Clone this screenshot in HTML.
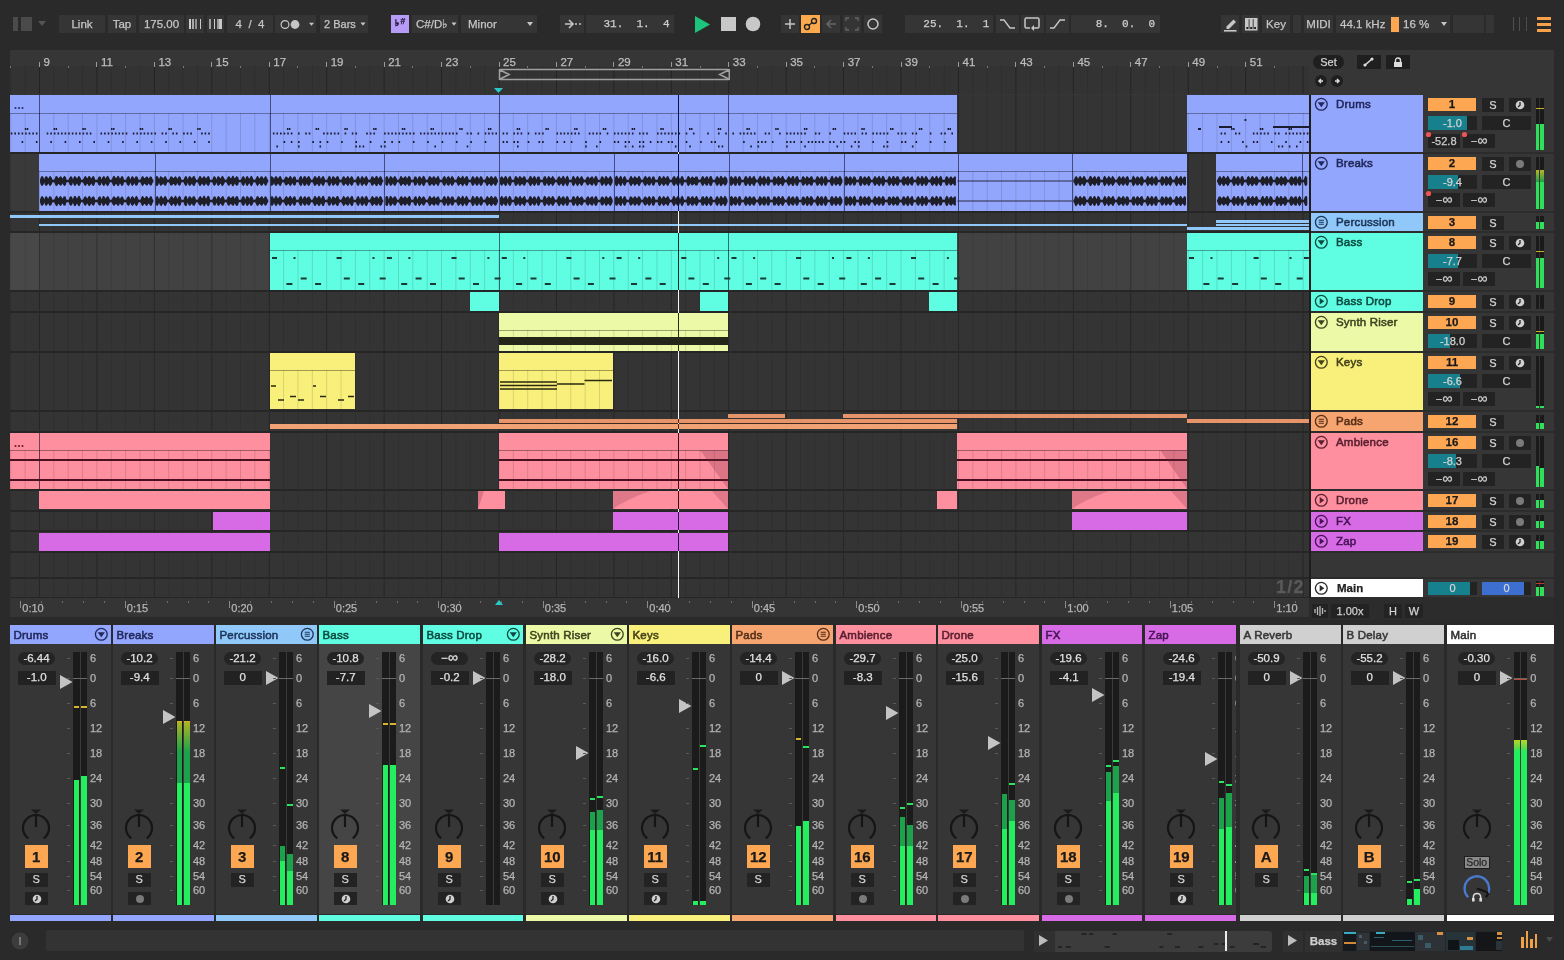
<!DOCTYPE html><html><head><meta charset="utf-8"><style>
html,body{margin:0;padding:0;will-change:transform;width:1564px;height:960px;overflow:hidden;background:#2a2a2a;font-family:"Liberation Sans",sans-serif;}
div,svg{position:absolute;box-sizing:border-box;} div{-webkit-text-stroke:0.25px currentColor} .hn{font-weight:normal;-webkit-text-stroke:0.55px currentColor} .r{position:relative}
</style></head><body>
<div style="left:13.00px;top:17.00px;width:5.00px;height:14.00px;background:#4a4a4a;"></div>
<div style="left:21.00px;top:17.00px;width:11.00px;height:14.00px;background:#4a4a4a;"></div>
<svg style="left:38px;top:21px" width="9" height="6"><path d="M0 0H8L4 5Z" fill="#555"/></svg>
<div style="left:59px;top:15px;width:46px;height:18px;background:#353535;line-height:18px;font-size:11.5px;color:#c6c6c6;text-align:center;white-space:pre">Link</div>
<div style="left:108px;top:15px;width:28px;height:18px;background:#353535;line-height:18px;font-size:11.5px;color:#c6c6c6;text-align:center;white-space:pre">Tap</div>
<div style="left:139px;top:15px;width:45px;height:18px;background:#353535;line-height:18px;font-size:11.5px;color:#c6c6c6;text-align:center;white-space:pre">175.00</div>
<div style="left:186px;top:15px;width:18px;height:18px;background:#353535;line-height:18px;font-size:11.5px;color:#c6c6c6;text-align:center;white-space:pre"></div>
<div style="left:207px;top:15px;width:17px;height:18px;background:#353535;line-height:18px;font-size:11.5px;color:#c6c6c6;text-align:center;white-space:pre"></div>
<div style="left:189.00px;top:19.00px;width:2.00px;height:10.00px;background:#cfcfcf;"></div>
<div style="left:192.00px;top:19.00px;width:1.80px;height:10.00px;background:#a8a8a8;"></div>
<div style="left:195.00px;top:19.00px;width:2.00px;height:10.00px;background:#909090;"></div>
<div style="left:199.70px;top:19.00px;width:1.60px;height:10.00px;background:#c8c8c8;"></div>
<div style="left:209.00px;top:19.00px;width:2.00px;height:10.00px;background:#a0a0a0;"></div>
<div style="left:213.70px;top:19.00px;width:1.40px;height:10.00px;background:#cfcfcf;"></div>
<div style="left:217.00px;top:19.00px;width:1.50px;height:10.00px;background:#9a9a9a;"></div>
<div style="left:219.30px;top:19.00px;width:2.60px;height:10.00px;background:#c8c8c8;"></div>
<div style="left:227px;top:15px;width:46px;height:18px;background:#353535;line-height:18px;font-size:11.5px;color:#c6c6c6;text-align:center;white-space:pre">4  /  4</div>
<div style="left:275px;top:15px;width:41px;height:18px;background:#353535;line-height:18px;font-size:11.5px;color:#c6c6c6;text-align:center;white-space:pre"></div>
<svg style="left:276px;top:18px" width="40" height="13"><circle cx="9" cy="6.5" r="3.9" stroke="#c6c6c6" stroke-width="1.2" fill="none"/><circle cx="19" cy="6.5" r="4.4" fill="#c6c6c6"/><path d="M33 4.8H38L35.5 7.8Z" fill="#c6c6c6"/></svg>
<div style="left:320px;top:15px;width:48px;height:18px;background:#353535;line-height:18px;font-size:11.5px;color:#c6c6c6;text-align:center;white-space:pre"></div>
<div style="left:324px;top:15px;font-size:11px;color:#c6c6c6;line-height:18px;">2 Bars</div>
<svg style="left:359.5px;top:22px" width="7" height="5"><path d="M0.5 0.5H5.5L3 3.8Z" fill="#c6c6c6"/></svg>
<div style="left:391px;top:15px;width:18px;height:18px;background:#b79cf7;line-height:18px;font-size:11.5px;color:#c6c6c6;text-align:center;white-space:pre"></div>
<div style="left:394.5px;top:18px;font-size:9px;line-height:10px;color:#2a2040;font-weight:bold">♭</div><div style="left:400.5px;top:15.5px;font-size:8.5px;line-height:10px;color:#2a2040;font-weight:bold">#</div>
<div style="left:412px;top:15px;width:46px;height:18px;background:#353535;line-height:18px;font-size:11.5px;color:#c6c6c6;text-align:center;white-space:pre"></div>
<div style="left:416px;top:15px;font-size:11.5px;color:#c6c6c6;line-height:18px;">C#/D♭</div>
<svg style="left:450.5px;top:22px" width="7" height="5"><path d="M0.5 0.5H5.5L3 3.8Z" fill="#c6c6c6"/></svg>
<div style="left:461px;top:15px;width:76px;height:18px;background:#353535;line-height:18px;font-size:12px;color:#c6c6c6;text-align:center;white-space:pre"></div>
<div style="left:468px;top:15px;font-size:11.5px;color:#c6c6c6;line-height:18px;">Minor</div>
<svg style="left:527px;top:22px" width="7" height="5"><path d="M0 0H6L3 4Z" fill="#c6c6c6"/></svg>
<div style="left:560px;top:15px;width:24px;height:18px;background:#353535;line-height:18px;font-size:11.5px;color:#c6c6c6;text-align:center;white-space:pre"></div>
<svg style="left:564px;top:18px" width="18" height="12"><path d="M1 6H9M5 2L9 6L5 10" stroke="#c6c6c6" stroke-width="1.6" fill="none"/><path d="M11 6H13M15 6H17" stroke="#c6c6c6" stroke-width="1.3"/></svg>
<div style="left:586px;top:15px;width:88px;height:18px;background:#353535;line-height:18px;font-size:11.5px;color:#c6c6c6;text-align:center;white-space:pre"></div>
<div style="left:603.5px;top:15px;height:18px;line-height:18px;font-family:'Liberation Mono',monospace;font-size:11px;color:#cfcfcf;white-space:pre">31.  1.  4</div>
<svg style="left:695px;top:16px" width="16" height="17"><path d="M0 0L15 8.5L0 17Z" fill="#1dc47b"/></svg>
<div style="left:721.00px;top:17.00px;width:15.00px;height:14.00px;background:#c8c8c8;"></div>
<svg style="left:745px;top:16px" width="16" height="16"><circle cx="8" cy="8" r="7.3" fill="#c8c8c8"/></svg>
<div style="left:781px;top:15px;width:18px;height:18px;background:#353535;line-height:18px;font-size:11.5px;color:#c6c6c6;text-align:center;white-space:pre"></div>
<svg style="left:783px;top:17px" width="14" height="14"><path d="M7 2V12M2 7H12" stroke="#c6c6c6" stroke-width="1.5"/></svg>
<div style="left:801px;top:15px;width:19px;height:18px;background:#fba94c;line-height:18px;font-size:11.5px;color:#c6c6c6;text-align:center;white-space:pre"></div>
<svg style="left:803px;top:17px" width="15" height="14"><circle cx="4" cy="10" r="2.5" stroke="#222" stroke-width="1.4" fill="none"/><circle cx="11" cy="4" r="2.5" stroke="#222" stroke-width="1.4" fill="none"/><path d="M5.8 8.2L9.2 5.8" stroke="#222" stroke-width="1.4"/></svg>
<div style="left:822px;top:15px;width:18px;height:18px;background:#353535;line-height:18px;font-size:11.5px;color:#c6c6c6;text-align:center;white-space:pre"></div>
<svg style="left:824px;top:18px" width="14" height="12"><path d="M12 6H3M7 2L3 6L7 10" stroke="#666" stroke-width="1.6" fill="none"/></svg>
<div style="left:843px;top:15px;width:18px;height:18px;background:#353535;line-height:18px;font-size:11.5px;color:#c6c6c6;text-align:center;white-space:pre"></div>
<svg style="left:845px;top:17px" width="14" height="14"><path d="M1 4V1H4M10 1H13V4M13 10V13H10M4 13H1V10" stroke="#666" stroke-width="1.3" fill="none"/></svg>
<div style="left:864px;top:15px;width:18px;height:18px;background:#353535;line-height:18px;font-size:11.5px;color:#c6c6c6;text-align:center;white-space:pre"></div>
<svg style="left:866px;top:17px" width="14" height="14"><circle cx="7" cy="7" r="5" stroke="#c6c6c6" stroke-width="1.5" fill="none"/></svg>
<div style="left:905px;top:15px;width:88px;height:18px;background:#353535;line-height:18px;font-size:11.5px;color:#c6c6c6;text-align:center;white-space:pre"></div>
<div style="left:923.3px;top:15px;height:18px;line-height:18px;font-family:'Liberation Mono',monospace;font-size:11px;color:#cfcfcf;white-space:pre">25.  1.  1</div>
<div style="left:996px;top:15px;width:23px;height:18px;background:#353535;line-height:18px;font-size:11.5px;color:#c6c6c6;text-align:center;white-space:pre"></div>
<svg style="left:999px;top:18px" width="17" height="12"><path d="M1 2H5L11 10H16" stroke="#c6c6c6" stroke-width="1.4" fill="none"/></svg>
<div style="left:1021px;top:15px;width:23px;height:18px;background:#353535;line-height:18px;font-size:11.5px;color:#c6c6c6;text-align:center;white-space:pre"></div>
<svg style="left:1024px;top:17px" width="17" height="15"><path d="M6 11H2.5Q1 11 1 9.5V2.5Q1 1 2.5 1H13.5Q15 1 15 2.5V9.5Q15 11 13.5 11H9" stroke="#c6c6c6" stroke-width="1.5" fill="none"/><path d="M10 8L7 11L10 14Z" fill="#c6c6c6"/></svg>
<div style="left:1046px;top:15px;width:23px;height:18px;background:#353535;line-height:18px;font-size:11.5px;color:#c6c6c6;text-align:center;white-space:pre"></div>
<svg style="left:1049px;top:18px" width="17" height="12"><path d="M1 10H5L11 2H16" stroke="#c6c6c6" stroke-width="1.4" fill="none"/></svg>
<div style="left:1071px;top:15px;width:89px;height:18px;background:#353535;line-height:18px;font-size:11.5px;color:#c6c6c6;text-align:center;white-space:pre"></div>
<div style="left:1095.7px;top:15px;height:18px;line-height:18px;font-family:'Liberation Mono',monospace;font-size:11px;color:#cfcfcf;white-space:pre">8.  0.  0</div>
<div style="left:1221px;top:15px;width:18px;height:18px;background:#353535;line-height:18px;font-size:11.5px;color:#c6c6c6;text-align:center;white-space:pre"></div>
<svg style="left:1222px;top:17px" width="17" height="15"><path d="M4.5 9.5L11.5 2.5L14 5L7 12H4.5Z" fill="#c6c6c6"/><path d="M2 13.8H14.5" stroke="#c6c6c6" stroke-width="1.6"/></svg>
<div style="left:1242px;top:15px;width:17px;height:18px;background:#353535;line-height:18px;font-size:11.5px;color:#c6c6c6;text-align:center;white-space:pre"></div>
<svg style="left:1244.5px;top:18px" width="13" height="13"><rect x="0" y="0" width="12.3" height="12.3" fill="#c8c8c8"/><path d="M4.1 1V12M8.2 1V12" stroke="#2e2e2e" stroke-width="0.9"/><rect x="1.2" y="9" width="2" height="2.5" fill="#222"/><rect x="5.2" y="9" width="2" height="2.5" fill="#222"/><rect x="9.2" y="9" width="2" height="2.5" fill="#222"/><rect x="0.6" y="0.6" width="11.1" height="11.1" fill="none" stroke="#c8c8c8" stroke-width="1.2"/></svg>
<div style="left:1262px;top:15px;width:28px;height:18px;background:#353535;line-height:18px;font-size:11.5px;color:#c6c6c6;text-align:center;white-space:pre">Key</div>
<div style="left:1293px;top:15px;width:8px;height:18px;background:#353535;line-height:18px;font-size:11.5px;color:#c6c6c6;text-align:center;white-space:pre"></div>
<div style="left:1304px;top:15px;width:29px;height:18px;background:#353535;line-height:18px;font-size:11.5px;color:#c6c6c6;text-align:center;white-space:pre">MIDI</div>
<div style="left:1336px;top:15px;width:114px;height:18px;background:#353535;line-height:18px;font-size:11.5px;color:#c6c6c6;text-align:center;white-space:pre"></div>
<div style="left:1340px;top:15px;font-size:11.5px;color:#c6c6c6;line-height:18px;">44.1 kHz</div>
<div style="left:1391.00px;top:17.00px;width:8.00px;height:15.00px;background:#fda752;"></div>
<div style="left:1403px;top:15px;font-size:11.5px;color:#c6c6c6;line-height:18px;">16 %</div>
<svg style="left:1441px;top:22px" width="7" height="5"><path d="M0 0H6L3 4Z" fill="#c6c6c6"/></svg>
<div style="left:1453px;top:15px;width:31px;height:18px;background:#353535;line-height:18px;font-size:11.5px;color:#c6c6c6;text-align:center;white-space:pre"></div>
<div style="left:1486px;top:15px;width:8px;height:18px;background:#353535;line-height:18px;font-size:11.5px;color:#c6c6c6;text-align:center;white-space:pre"></div>
<div style="left:1513.00px;top:17.00px;width:1.30px;height:14.00px;background:#4e4e4e;"></div>
<div style="left:1519.00px;top:17.00px;width:1.30px;height:14.00px;background:#4e4e4e;"></div>
<div style="left:1526.00px;top:17.00px;width:1.30px;height:14.00px;background:#4e4e4e;"></div>
<div style="left:1537.00px;top:17.00px;width:14.00px;height:2.80px;background:#f6a24c;"></div>
<div style="left:1537.00px;top:23.00px;width:14.00px;height:2.80px;background:#f6a24c;"></div>
<div style="left:1537.00px;top:29.00px;width:14.00px;height:2.80px;background:#f6a24c;"></div>
<div style="left:10.00px;top:50.00px;width:1544.00px;height:45.00px;background:#363636;"></div>
<div style="left:10.00px;top:66.00px;width:1299.00px;height:28.00px;background:#333333;"></div>
<div style="left:10px;top:66px;width:1299px;height:28px;background-color:#333333;background-image:linear-gradient(to right,rgba(0,0,0,0.22) 1px,transparent 1px),linear-gradient(to right,rgba(0,0,0,0.12) 1px,transparent 1px);background-size:57.440px 100%,14.360px 100%;background-position:29.00px 0,0.28px 0"></div>
<div style="left:39.00px;top:62.00px;width:1.00px;height:5.00px;background:#9a9a9a;"></div>
<div style="left:43.5px;top:56px;font-size:11.5px;color:#bdbdbd;line-height:13px;">9</div>
<div style="left:96.44px;top:62.00px;width:1.00px;height:5.00px;background:#9a9a9a;"></div>
<div style="left:100.94px;top:56px;font-size:11.5px;color:#bdbdbd;line-height:13px;">11</div>
<div style="left:153.88px;top:62.00px;width:1.00px;height:5.00px;background:#9a9a9a;"></div>
<div style="left:158.38px;top:56px;font-size:11.5px;color:#bdbdbd;line-height:13px;">13</div>
<div style="left:211.32px;top:62.00px;width:1.00px;height:5.00px;background:#9a9a9a;"></div>
<div style="left:215.82px;top:56px;font-size:11.5px;color:#bdbdbd;line-height:13px;">15</div>
<div style="left:268.76px;top:62.00px;width:1.00px;height:5.00px;background:#9a9a9a;"></div>
<div style="left:273.26px;top:56px;font-size:11.5px;color:#bdbdbd;line-height:13px;">17</div>
<div style="left:326.20px;top:62.00px;width:1.00px;height:5.00px;background:#9a9a9a;"></div>
<div style="left:330.7px;top:56px;font-size:11.5px;color:#bdbdbd;line-height:13px;">19</div>
<div style="left:383.64px;top:62.00px;width:1.00px;height:5.00px;background:#9a9a9a;"></div>
<div style="left:388.14px;top:56px;font-size:11.5px;color:#bdbdbd;line-height:13px;">21</div>
<div style="left:441.08px;top:62.00px;width:1.00px;height:5.00px;background:#9a9a9a;"></div>
<div style="left:445.58px;top:56px;font-size:11.5px;color:#bdbdbd;line-height:13px;">23</div>
<div style="left:498.52px;top:62.00px;width:1.00px;height:5.00px;background:#9a9a9a;"></div>
<div style="left:503.02px;top:56px;font-size:11.5px;color:#bdbdbd;line-height:13px;">25</div>
<div style="left:555.96px;top:62.00px;width:1.00px;height:5.00px;background:#9a9a9a;"></div>
<div style="left:560.46px;top:56px;font-size:11.5px;color:#bdbdbd;line-height:13px;">27</div>
<div style="left:613.40px;top:62.00px;width:1.00px;height:5.00px;background:#9a9a9a;"></div>
<div style="left:617.9px;top:56px;font-size:11.5px;color:#bdbdbd;line-height:13px;">29</div>
<div style="left:670.84px;top:62.00px;width:1.00px;height:5.00px;background:#9a9a9a;"></div>
<div style="left:675.3399999999999px;top:56px;font-size:11.5px;color:#bdbdbd;line-height:13px;">31</div>
<div style="left:728.28px;top:62.00px;width:1.00px;height:5.00px;background:#9a9a9a;"></div>
<div style="left:732.78px;top:56px;font-size:11.5px;color:#bdbdbd;line-height:13px;">33</div>
<div style="left:785.72px;top:62.00px;width:1.00px;height:5.00px;background:#9a9a9a;"></div>
<div style="left:790.22px;top:56px;font-size:11.5px;color:#bdbdbd;line-height:13px;">35</div>
<div style="left:843.16px;top:62.00px;width:1.00px;height:5.00px;background:#9a9a9a;"></div>
<div style="left:847.66px;top:56px;font-size:11.5px;color:#bdbdbd;line-height:13px;">37</div>
<div style="left:900.60px;top:62.00px;width:1.00px;height:5.00px;background:#9a9a9a;"></div>
<div style="left:905.0999999999999px;top:56px;font-size:11.5px;color:#bdbdbd;line-height:13px;">39</div>
<div style="left:958.04px;top:62.00px;width:1.00px;height:5.00px;background:#9a9a9a;"></div>
<div style="left:962.54px;top:56px;font-size:11.5px;color:#bdbdbd;line-height:13px;">41</div>
<div style="left:1015.48px;top:62.00px;width:1.00px;height:5.00px;background:#9a9a9a;"></div>
<div style="left:1019.98px;top:56px;font-size:11.5px;color:#bdbdbd;line-height:13px;">43</div>
<div style="left:1072.92px;top:62.00px;width:1.00px;height:5.00px;background:#9a9a9a;"></div>
<div style="left:1077.42px;top:56px;font-size:11.5px;color:#bdbdbd;line-height:13px;">45</div>
<div style="left:1130.36px;top:62.00px;width:1.00px;height:5.00px;background:#9a9a9a;"></div>
<div style="left:1134.86px;top:56px;font-size:11.5px;color:#bdbdbd;line-height:13px;">47</div>
<div style="left:1187.80px;top:62.00px;width:1.00px;height:5.00px;background:#9a9a9a;"></div>
<div style="left:1192.3px;top:56px;font-size:11.5px;color:#bdbdbd;line-height:13px;">49</div>
<div style="left:1245.24px;top:62.00px;width:1.00px;height:5.00px;background:#9a9a9a;"></div>
<div style="left:1249.74px;top:56px;font-size:11.5px;color:#bdbdbd;line-height:13px;">51</div>
<div style="left:10.28px;top:66.00px;width:1.00px;height:1.50px;background:#777;"></div>
<div style="left:67.72px;top:66.00px;width:1.00px;height:1.50px;background:#777;"></div>
<div style="left:125.16px;top:66.00px;width:1.00px;height:1.50px;background:#777;"></div>
<div style="left:182.60px;top:66.00px;width:1.00px;height:1.50px;background:#777;"></div>
<div style="left:240.04px;top:66.00px;width:1.00px;height:1.50px;background:#777;"></div>
<div style="left:297.48px;top:66.00px;width:1.00px;height:1.50px;background:#777;"></div>
<div style="left:354.92px;top:66.00px;width:1.00px;height:1.50px;background:#777;"></div>
<div style="left:412.36px;top:66.00px;width:1.00px;height:1.50px;background:#777;"></div>
<div style="left:469.80px;top:66.00px;width:1.00px;height:1.50px;background:#777;"></div>
<div style="left:527.24px;top:66.00px;width:1.00px;height:1.50px;background:#777;"></div>
<div style="left:584.68px;top:66.00px;width:1.00px;height:1.50px;background:#777;"></div>
<div style="left:642.12px;top:66.00px;width:1.00px;height:1.50px;background:#777;"></div>
<div style="left:699.56px;top:66.00px;width:1.00px;height:1.50px;background:#777;"></div>
<div style="left:757.00px;top:66.00px;width:1.00px;height:1.50px;background:#777;"></div>
<div style="left:814.44px;top:66.00px;width:1.00px;height:1.50px;background:#777;"></div>
<div style="left:871.88px;top:66.00px;width:1.00px;height:1.50px;background:#777;"></div>
<div style="left:929.32px;top:66.00px;width:1.00px;height:1.50px;background:#777;"></div>
<div style="left:986.76px;top:66.00px;width:1.00px;height:1.50px;background:#777;"></div>
<div style="left:1044.20px;top:66.00px;width:1.00px;height:1.50px;background:#777;"></div>
<div style="left:1101.64px;top:66.00px;width:1.00px;height:1.50px;background:#777;"></div>
<div style="left:1159.08px;top:66.00px;width:1.00px;height:1.50px;background:#777;"></div>
<div style="left:1216.52px;top:66.00px;width:1.00px;height:1.50px;background:#777;"></div>
<div style="left:1273.96px;top:66.00px;width:1.00px;height:1.50px;background:#777;"></div>
<svg style="left:497.52px;top:67px" width="232.76" height="15"><path d="M1.5 2.5H231.26M1.5 12.5H231.26M1.5 2V13M231.26 2V13M2 3L11 7.5L2 12M230.76 3L221.76 7.5L230.76 12" stroke="#a0a0a0" stroke-width="1.6" fill="none"/></svg>
<svg style="left:494.02px;top:88px" width="9" height="6"><path d="M0 0H9L4.5 5Z" fill="#2bc8c8"/></svg>
<div style="left:1313px;top:55px;width:31px;height:14px;border-radius:7px;background:#1f1f1f;color:#d0d0d0;font-size:11px;line-height:14px;text-align:center">Set</div>
<div style="left:1357.00px;top:55.00px;width:24.00px;height:14.00px;background:#1f1f1f;"></div>
<svg style="left:1363px;top:57px" width="11" height="10"><path d="M2 8L9 2" stroke="#ddd" stroke-width="1.6"/><circle cx="2" cy="8" r="1.6" fill="#ddd"/><circle cx="9" cy="2" r="1.6" fill="#ddd"/></svg>
<div style="left:1386.00px;top:55.00px;width:24.00px;height:14.00px;background:#1f1f1f;"></div>
<svg style="left:1393px;top:57px" width="10" height="10"><path d="M2.5 5V3.5Q2.5 1 5 1Q7.5 1 7.5 3.5V5" stroke="#ddd" stroke-width="1.4" fill="none"/><rect x="1" y="5" width="8" height="5" fill="#ddd"/></svg>
<svg style="left:1314.5px;top:75px" width="12" height="12"><circle cx="6" cy="6" r="6" fill="#1f1f1f"/><path d="M8 6H4M6 4L4 6L6 8" stroke="#ddd" stroke-width="1.5" fill="none"/></svg>
<svg style="left:1330.5px;top:75px" width="12" height="12"><circle cx="6" cy="6" r="6" fill="#1f1f1f"/><path d="M4 6H8M6 4L8 6L6 8" stroke="#ddd" stroke-width="1.5" fill="none"/></svg>
<div style="left:10.00px;top:95.00px;width:1299.00px;height:503.00px;background:#262626;"></div>
<div style="left:10px;top:95px;width:1299px;height:57px;background-color:#343434;background-image:linear-gradient(to right,rgba(0,0,0,0.20) 1px,transparent 1px),linear-gradient(to right,rgba(0,0,0,0.10) 1px,transparent 1px);background-size:57.440px 100%,14.360px 100%;background-position:29.00px 0,0.28px 0"></div>
<div style="left:10px;top:154px;width:1299px;height:57px;background-color:#343434;background-image:linear-gradient(to right,rgba(0,0,0,0.20) 1px,transparent 1px),linear-gradient(to right,rgba(0,0,0,0.10) 1px,transparent 1px);background-size:57.440px 100%,14.360px 100%;background-position:29.00px 0,0.28px 0"></div>
<div style="left:10.00px;top:154.00px;width:29.00px;height:57.00px;background:rgba(255,255,255,0.03);"></div>
<div style="left:10px;top:213px;width:1299px;height:18px;background-color:#343434;background-image:linear-gradient(to right,rgba(0,0,0,0.20) 1px,transparent 1px),linear-gradient(to right,rgba(0,0,0,0.10) 1px,transparent 1px);background-size:57.440px 100%,14.360px 100%;background-position:29.00px 0,0.28px 0"></div>
<div style="left:10px;top:233px;width:1299px;height:57px;background-color:#424242;background-image:linear-gradient(to right,rgba(0,0,0,0.20) 1px,transparent 1px),linear-gradient(to right,rgba(0,0,0,0.10) 1px,transparent 1px);background-size:57.440px 100%,14.360px 100%;background-position:29.00px 0,0.28px 0"></div>
<div style="left:10.00px;top:233.00px;width:29.00px;height:57.00px;background:rgba(255,255,255,0.035);"></div>
<div style="left:10px;top:292px;width:1299px;height:19px;background-color:#343434;background-image:linear-gradient(to right,rgba(0,0,0,0.20) 1px,transparent 1px),linear-gradient(to right,rgba(0,0,0,0.10) 1px,transparent 1px);background-size:57.440px 100%,14.360px 100%;background-position:29.00px 0,0.28px 0"></div>
<div style="left:10px;top:313px;width:1299px;height:38px;background-color:#343434;background-image:linear-gradient(to right,rgba(0,0,0,0.20) 1px,transparent 1px),linear-gradient(to right,rgba(0,0,0,0.10) 1px,transparent 1px);background-size:57.440px 100%,14.360px 100%;background-position:29.00px 0,0.28px 0"></div>
<div style="left:10px;top:353px;width:1299px;height:57px;background-color:#343434;background-image:linear-gradient(to right,rgba(0,0,0,0.20) 1px,transparent 1px),linear-gradient(to right,rgba(0,0,0,0.10) 1px,transparent 1px);background-size:57.440px 100%,14.360px 100%;background-position:29.00px 0,0.28px 0"></div>
<div style="left:10px;top:412px;width:1299px;height:19px;background-color:#343434;background-image:linear-gradient(to right,rgba(0,0,0,0.20) 1px,transparent 1px),linear-gradient(to right,rgba(0,0,0,0.10) 1px,transparent 1px);background-size:57.440px 100%,14.360px 100%;background-position:29.00px 0,0.28px 0"></div>
<div style="left:10px;top:433px;width:1299px;height:56px;background-color:#343434;background-image:linear-gradient(to right,rgba(0,0,0,0.20) 1px,transparent 1px),linear-gradient(to right,rgba(0,0,0,0.10) 1px,transparent 1px);background-size:57.440px 100%,14.360px 100%;background-position:29.00px 0,0.28px 0"></div>
<div style="left:10px;top:491px;width:1299px;height:19px;background-color:#343434;background-image:linear-gradient(to right,rgba(0,0,0,0.20) 1px,transparent 1px),linear-gradient(to right,rgba(0,0,0,0.10) 1px,transparent 1px);background-size:57.440px 100%,14.360px 100%;background-position:29.00px 0,0.28px 0"></div>
<div style="left:10px;top:512px;width:1299px;height:18px;background-color:#343434;background-image:linear-gradient(to right,rgba(0,0,0,0.20) 1px,transparent 1px),linear-gradient(to right,rgba(0,0,0,0.10) 1px,transparent 1px);background-size:57.440px 100%,14.360px 100%;background-position:29.00px 0,0.28px 0"></div>
<div style="left:10px;top:532px;width:1299px;height:19px;background-color:#343434;background-image:linear-gradient(to right,rgba(0,0,0,0.20) 1px,transparent 1px),linear-gradient(to right,rgba(0,0,0,0.10) 1px,transparent 1px);background-size:57.440px 100%,14.360px 100%;background-position:29.00px 0,0.28px 0"></div>
<div style="left:10px;top:553px;width:1299px;height:24px;background-color:#343434;background-image:linear-gradient(to right,rgba(0,0,0,0.20) 1px,transparent 1px),linear-gradient(to right,rgba(0,0,0,0.10) 1px,transparent 1px);background-size:57.440px 100%,14.360px 100%;background-position:29.00px 0,0.28px 0"></div>
<div style="left:10px;top:579px;width:1299px;height:18px;background-color:#343434;background-image:linear-gradient(to right,rgba(0,0,0,0.20) 1px,transparent 1px),linear-gradient(to right,rgba(0,0,0,0.10) 1px,transparent 1px);background-size:57.440px 100%,14.360px 100%;background-position:29.00px 0,0.28px 0"></div>
<div style="left:10.00px;top:95.00px;width:947.00px;height:57.00px;background:#93a6fd;"></div>
<div style="left:10.00px;top:113px;width:947.00px;height:39px;background-image:linear-gradient(to right,rgba(0,0,0,0.13) 1px,transparent 1px);background-size:14.360px 100%;background-position:0.28px 0"></div>
<div style="left:10.00px;top:113.00px;width:947.00px;height:1.00px;background:rgba(0,0,0,0.35);"></div>
<div style="left:39.00px;top:95.00px;width:1.00px;height:57.00px;background:rgba(0,0,30,0.55);"></div>
<div style="left:270.00px;top:95.00px;width:1.00px;height:57.00px;background:rgba(0,0,30,0.55);"></div>
<div style="left:499.00px;top:95.00px;width:1.00px;height:57.00px;background:rgba(0,0,30,0.55);"></div>
<div style="left:728.00px;top:95.00px;width:1.00px;height:57.00px;background:rgba(0,0,30,0.55);"></div>
<svg style="left:14px;top:106px" width="12" height="4"><circle cx="1.5" cy="2" r="1.1" fill="#2a3070"/><circle cx="5" cy="2" r="1.1" fill="#2a3070"/><circle cx="8.5" cy="2" r="1.1" fill="#2a3070"/></svg>
<div style="left:1187.00px;top:95.00px;width:122.00px;height:57.00px;background:#93a6fd;"></div>
<div style="left:1187.00px;top:113px;width:122.00px;height:39px;background-image:linear-gradient(to right,rgba(0,0,0,0.13) 1px,transparent 1px);background-size:14.360px 100%;background-position:0.80px 0"></div>
<div style="left:1187.00px;top:113.00px;width:122.00px;height:1.00px;background:rgba(0,0,0,0.35);"></div>
<svg style="left:0;top:0;" width="1564" height="960"><path d="M10.8 133.5h1.6 M14.4 133.5h1.6 M18.0 133.5h1.6 M21.6 133.5h1.6 M21.6 142h1.6 M25.1 133.5h1.6 M24.8 129h1.5M26.8 129h1.5 M28.7 133.5h1.6 M32.3 133.5h1.6 M35.9 133.5h1.6 M35.9 142h1.6 M46.7 133.5h1.6 M50.3 133.5h1.6 M50.3 142h1.6 M53.9 133.5h1.6 M53.6 129h1.5M55.6 129h1.5 M57.5 133.5h1.6 M61.0 133.5h1.6 M64.6 133.5h1.6 M64.6 142h1.6 M68.2 133.5h1.6 M71.8 133.5h1.6 M75.4 133.5h1.6 M79.0 133.5h1.6 M79.0 142h1.6 M82.6 133.5h1.6 M82.3 129h1.5M84.3 129h1.5 M86.2 133.5h1.6 M89.8 133.5h1.6 M93.4 142h1.6 M100.5 133.5h1.6 M104.1 133.5h1.6 M107.7 133.5h1.6 M107.7 142h1.6 M111.3 133.5h1.6 M111.0 129h1.5M113.0 129h1.5 M114.9 133.5h1.6 M118.5 133.5h1.6 M122.1 133.5h1.6 M122.1 142h1.6 M125.7 133.5h1.6 M132.8 133.5h1.6 M136.4 133.5h1.6 M136.4 142h1.6 M140.0 133.5h1.6 M139.7 129h1.5M141.7 129h1.5 M143.6 133.5h1.6 M147.2 133.5h1.6 M150.8 133.5h1.6 M150.8 142h1.6 M154.4 133.5h1.6 M161.6 133.5h1.6 M165.2 133.5h1.6 M165.2 142h1.6 M168.4 129h1.5M170.4 129h1.5 M172.3 133.5h1.6 M175.9 133.5h1.6 M179.5 142h1.6 M183.1 133.5h1.6 M186.7 133.5h1.6 M190.3 133.5h1.6 M193.9 142h1.6 M197.2 129h1.5M199.2 129h1.5 M201.1 133.5h1.6 M204.6 133.5h1.6 M208.2 133.5h1.6 M208.2 142h1.6 M272.9 133.5h1.6 M276.4 133.5h1.6 M276.4 146.5h1.6 M280.0 133.5h1.6 M283.6 133.5h1.6 M283.6 142h1.6 M287.2 133.5h1.6 M286.9 129h1.5M288.9 129h1.5 M290.8 133.5h1.6 M290.8 142h1.6 M298.0 133.5h1.6 M298.0 142h1.6 M298.0 146.5h1.6 M305.2 133.5h1.6 M308.7 133.5h1.6 M312.3 142h1.6 M315.6 129h1.5M317.6 129h1.5 M319.5 142h1.6 M319.5 146.5h1.6 M323.1 133.5h1.6 M326.7 133.5h1.6 M326.7 142h1.6 M330.3 133.5h1.6 M333.9 133.5h1.6 M337.5 133.5h1.6 M341.1 142h1.6 M344.6 133.5h1.6 M344.3 129h1.5M346.3 129h1.5 M351.8 133.5h1.6 M355.4 133.5h1.6 M355.4 142h1.6 M355.4 146.5h1.6 M359.0 146.5h1.6 M362.6 146.5h1.6 M366.2 133.5h1.6 M369.8 133.5h1.6 M369.8 142h1.6 M373.4 133.5h1.6 M373.1 129h1.5M375.1 129h1.5 M380.5 146.5h1.6 M384.1 133.5h1.6 M384.1 142h1.6 M384.1 146.5h1.6 M387.7 133.5h1.6 M391.3 133.5h1.6 M391.3 142h1.6 M394.9 133.5h1.6 M398.5 133.5h1.6 M398.5 142h1.6 M402.1 133.5h1.6 M401.8 129h1.5M403.8 129h1.5 M405.7 133.5h1.6 M409.3 133.5h1.6 M412.9 133.5h1.6 M412.9 142h1.6 M420.0 133.5h1.6 M423.6 133.5h1.6 M427.2 133.5h1.6 M427.2 142h1.6 M430.8 133.5h1.6 M430.5 129h1.5M432.5 129h1.5 M434.4 133.5h1.6 M434.4 146.5h1.6 M438.0 133.5h1.6 M441.6 133.5h1.6 M441.6 142h1.6 M445.2 133.5h1.6 M448.8 133.5h1.6 M452.3 133.5h1.6 M455.9 133.5h1.6 M455.9 142h1.6 M459.2 129h1.5M461.2 129h1.5 M466.7 133.5h1.6 M466.7 146.5h1.6 M470.3 133.5h1.6 M470.3 142h1.6 M477.5 133.5h1.6 M484.7 133.5h1.6 M484.7 142h1.6 M488.2 133.5h1.6 M487.9 129h1.5M489.9 129h1.5 M491.8 133.5h1.6 M495.4 133.5h1.6 M502.6 133.5h1.6 M502.6 142h1.6 M506.2 133.5h1.6 M506.2 142h1.6 M513.4 133.5h1.6 M513.4 142h1.6 M517.0 133.5h1.6 M516.7 129h1.5M518.7 129h1.5 M517.0 142h1.6 M517.0 146.5h1.6 M520.6 133.5h1.6 M527.7 133.5h1.6 M527.7 142h1.6 M534.9 133.5h1.6 M538.5 133.5h1.6 M538.5 142h1.6 M542.1 133.5h1.6 M542.1 142h1.6 M545.4 129h1.5M547.4 129h1.5 M556.5 133.5h1.6 M556.5 142h1.6 M560.1 133.5h1.6 M563.6 133.5h1.6 M563.6 142h1.6 M567.2 133.5h1.6 M570.8 133.5h1.6 M570.8 142h1.6 M574.4 133.5h1.6 M574.1 129h1.5M576.1 129h1.5 M578.0 133.5h1.6 M585.2 142h1.6 M585.2 146.5h1.6 M588.8 133.5h1.6 M592.4 133.5h1.6 M596.0 133.5h1.6 M596.0 146.5h1.6 M599.5 133.5h1.6 M599.5 142h1.6 M602.8 129h1.5M604.8 129h1.5 M606.7 133.5h1.6 M613.9 133.5h1.6 M613.9 142h1.6 M617.5 133.5h1.6 M617.5 142h1.6 M621.1 133.5h1.6 M624.7 133.5h1.6 M624.7 142h1.6 M624.7 146.5h1.6 M628.3 133.5h1.6 M628.3 142h1.6 M631.9 133.5h1.6 M631.6 129h1.5M633.6 129h1.5 M631.9 146.5h1.6 M639.0 133.5h1.6 M639.0 142h1.6 M639.0 146.5h1.6 M642.6 133.5h1.6 M642.6 142h1.6 M642.6 146.5h1.6 M646.2 133.5h1.6 M649.8 142h1.6 M657.0 133.5h1.6 M657.0 142h1.6 M660.6 133.5h1.6 M660.3 129h1.5M662.3 129h1.5 M660.6 142h1.6 M664.2 133.5h1.6 M667.8 133.5h1.6 M667.8 142h1.6 M671.3 133.5h1.6 M671.3 142h1.6 M674.9 133.5h1.6 M674.9 146.5h1.6 M678.5 133.5h1.6 M685.7 133.5h1.6 M685.7 142h1.6 M689.0 129h1.5M691.0 129h1.5 M689.3 146.5h1.6 M692.9 133.5h1.6 M700.1 142h1.6 M707.2 133.5h1.6 M710.8 142h1.6 M714.4 142h1.6 M718.0 133.5h1.6 M717.7 129h1.5M719.7 129h1.5 M718.0 146.5h1.6 M721.6 146.5h1.6 M725.2 133.5h1.6 M732.4 133.5h1.6 M739.6 133.5h1.6 M743.1 133.5h1.6 M743.1 142h1.6 M746.7 133.5h1.6 M746.4 129h1.5M748.4 129h1.5 M750.3 133.5h1.6 M750.3 146.5h1.6 M753.9 133.5h1.6 M757.5 142h1.6 M757.5 146.5h1.6 M761.1 142h1.6 M764.7 133.5h1.6 M764.7 142h1.6 M768.3 133.5h1.6 M771.9 142h1.6 M775.2 129h1.5M777.2 129h1.5 M779.0 133.5h1.6 M786.2 133.5h1.6 M786.2 142h1.6 M786.2 146.5h1.6 M789.8 133.5h1.6 M789.8 142h1.6 M793.4 133.5h1.6 M793.4 142h1.6 M797.0 133.5h1.6 M800.6 133.5h1.6 M800.6 142h1.6 M804.2 133.5h1.6 M803.9 129h1.5M805.9 129h1.5 M804.2 146.5h1.6 M807.8 142h1.6 M811.4 142h1.6 M814.9 133.5h1.6 M814.9 142h1.6 M818.5 133.5h1.6 M818.5 142h1.6 M822.1 142h1.6 M829.3 133.5h1.6 M829.3 142h1.6 M832.6 129h1.5M834.6 129h1.5 M832.9 142h1.6 M836.5 146.5h1.6 M840.1 142h1.6 M843.7 133.5h1.6 M843.7 142h1.6 M847.3 133.5h1.6 M850.8 133.5h1.6 M850.8 146.5h1.6 M854.4 133.5h1.6 M854.4 142h1.6 M858.0 142h1.6 M858.0 146.5h1.6 M861.6 133.5h1.6 M861.3 129h1.5M863.3 129h1.5 M865.2 133.5h1.6 M872.4 133.5h1.6 M872.4 142h1.6 M876.0 133.5h1.6 M879.6 133.5h1.6 M883.2 133.5h1.6 M883.2 146.5h1.6 M886.7 133.5h1.6 M886.7 142h1.6 M886.7 146.5h1.6 M890.0 129h1.5M892.0 129h1.5 M897.5 133.5h1.6 M901.1 133.5h1.6 M901.1 142h1.6 M904.7 133.5h1.6 M904.7 142h1.6 M911.9 133.5h1.6 M911.9 146.5h1.6 M915.5 133.5h1.6 M915.5 142h1.6 M918.8 129h1.5M920.8 129h1.5 M929.8 133.5h1.6 M929.8 142h1.6 M940.6 133.5h1.6 M944.2 133.5h1.6 M944.2 142h1.6 M947.5 129h1.5M949.5 129h1.5 M951.4 133.5h1.6 M1220.6 133.5h1.6 M1220.6 142h1.6 M1224.2 133.5h1.6 M1227.8 142h1.6 M1231.1 129h1.5M1233.1 129h1.5 M1235.0 133.5h1.6 M1238.6 133.5h1.6 M1242.1 142h1.6 M1245.7 146.5h1.6 M1252.9 133.5h1.6 M1252.9 142h1.6 M1256.5 133.5h1.6 M1256.5 142h1.6 M1260.1 133.5h1.6 M1259.8 129h1.5M1261.8 129h1.5 M1263.7 133.5h1.6 M1267.3 133.5h1.6 M1270.9 142h1.6 M1274.5 133.5h1.6 M1278.0 133.5h1.6 M1278.0 146.5h1.6 M1281.6 146.5h1.6 M1285.2 133.5h1.6 M1285.2 142h1.6 M1288.8 133.5h1.6 M1288.5 129h1.5M1290.5 129h1.5 M1288.8 146.5h1.6 M1292.4 133.5h1.6 M1296.0 133.5h1.6 M1296.0 146.5h1.6 M1299.6 133.5h1.6 M1299.6 142h1.6 M1303.2 133.5h1.6 M1306.8 133.5h1.6 M1306.8 142h1.6 M1219 127h13 M1273 127h36 M1244.5 120h1.8 M1198 129h3" stroke="#1a1c30" stroke-width="1.9" fill="none"/></svg>
<div style="left:39.00px;top:154.00px;width:1148.20px;height:57.00px;background:#93a6fd;"></div>
<div style="left:39.00px;top:171px;width:1148.20px;height:40px;background-image:linear-gradient(to right,rgba(0,0,0,0.13) 1px,transparent 1px);background-size:14.360px 100%;background-position:0.00px 0"></div>
<div style="left:39.00px;top:171.00px;width:1148.20px;height:1.00px;background:rgba(0,0,0,0.35);"></div>
<div style="left:154.60px;top:154.00px;width:1.00px;height:57.00px;background:rgba(0,0,30,0.55);"></div>
<div style="left:269.50px;top:154.00px;width:1.00px;height:57.00px;background:rgba(0,0,30,0.55);"></div>
<div style="left:384.30px;top:154.00px;width:1.00px;height:57.00px;background:rgba(0,0,30,0.55);"></div>
<div style="left:499.00px;top:154.00px;width:1.00px;height:57.00px;background:rgba(0,0,30,0.55);"></div>
<div style="left:613.90px;top:154.00px;width:1.00px;height:57.00px;background:rgba(0,0,30,0.55);"></div>
<div style="left:728.80px;top:154.00px;width:1.00px;height:57.00px;background:rgba(0,0,30,0.55);"></div>
<div style="left:843.60px;top:154.00px;width:1.00px;height:57.00px;background:rgba(0,0,30,0.55);"></div>
<div style="left:957.50px;top:154.00px;width:1.00px;height:57.00px;background:rgba(0,0,30,0.55);"></div>
<div style="left:1072.30px;top:154.00px;width:1.00px;height:57.00px;background:rgba(0,0,30,0.55);"></div>
<div style="left:1216.00px;top:154.00px;width:93.00px;height:57.00px;background:#93a6fd;"></div>
<div style="left:1216.00px;top:171px;width:93.00px;height:40px;background-image:linear-gradient(to right,rgba(0,0,0,0.13) 1px,transparent 1px);background-size:14.360px 100%;background-position:0.52px 0"></div>
<div style="left:1216.00px;top:171.00px;width:93.00px;height:1.00px;background:rgba(0,0,0,0.35);"></div>
<div style="left:1302.00px;top:154.00px;width:1.00px;height:57.00px;background:rgba(0,0,30,0.55);"></div>
<svg style="left:0;top:0" width="1564" height="960"><path d="M40.0 179.8 L40.7 177.4 L41.4 176.2 L42.1 176.1 L42.8 176.5 L43.5 177.3 L44.2 179.4 L44.9 177.0 L45.6 176.4 L46.3 176.1 L47.0 176.5 L47.7 177.5 L48.4 178.5 L49.1 177.0 L49.8 175.9 L50.5 176.0 L51.2 176.9 L51.9 178.0 L52.6 179.8 L53.3 179.8 L54.0 179.8 L54.7 178.5 L55.4 176.7 L56.1 175.8 L56.8 176.3 L57.5 176.5 L58.2 178.0 L58.9 178.0 L59.6 176.7 L60.3 176.4 L61.0 176.3 L61.7 176.9 L62.4 178.7 L63.1 177.3 L63.8 176.5 L64.5 175.7 L65.2 176.5 L65.9 177.1 L66.6 179.8 L67.3 179.8 L68.0 179.8 L68.7 179.8 L69.4 177.6 L70.1 176.9 L70.8 175.9 L71.5 176.4 L72.2 177.1 L72.9 179.6 L73.6 177.6 L74.3 176.3 L75.0 175.7 L75.7 176.7 L76.4 177.8 L77.1 178.5 L77.8 177.1 L78.5 176.1 L79.2 176.3 L79.9 176.4 L80.6 178.0 L81.3 179.8 L82.0 179.8 L82.7 179.8 L83.4 178.7 L84.1 177.2 L84.8 176.3 L85.5 176.1 L86.2 176.4 L86.9 178.3 L87.6 178.1 L88.3 176.5 L89.0 176.1 L89.7 175.9 L90.4 176.9 L91.1 178.6 L91.8 177.6 L92.5 176.4 L93.2 176.1 L93.9 176.2 L94.6 177.4 L95.3 179.8 L96.0 179.8 L96.7 179.8 L97.4 179.8 L98.1 177.6 L98.8 176.7 L99.5 176.3 L100.2 176.6 L100.9 177.2 L101.6 179.6 L102.3 177.3 L103.0 176.7 L103.7 175.8 L104.4 176.2 L105.1 177.4 L105.8 178.6 L106.5 176.7 L107.2 175.8 L107.9 176.1 L108.6 176.8 L109.3 178.0 L110.0 179.8 L110.7 179.8 L111.4 179.8 L112.1 178.8 L112.8 176.8 L113.5 175.9 L114.2 175.7 L114.9 176.6 L115.6 177.8 L116.3 178.1 L117.0 176.8 L117.7 176.0 L118.4 175.7 L119.1 176.6 L119.8 178.5 L120.5 177.9 L121.2 176.4 L121.9 176.1 L122.6 176.2 L123.3 177.0 L124.0 179.6 L124.7 179.8 L125.4 179.8 L126.1 179.8 L126.8 177.6 L127.5 176.8 L128.2 176.3 L128.9 176.0 L129.6 177.3 L130.3 179.4 L131.0 177.6 L131.7 176.6 L132.4 175.9 L133.1 176.8 L133.8 177.5 L134.5 178.7 L135.2 177.0 L135.9 176.0 L136.6 176.5 L137.3 176.6 L138.0 178.0 L138.7 179.8 L139.4 179.8 L140.1 179.8 L140.8 178.8 L141.5 177.1 L142.2 176.3 L142.9 175.7 L143.6 177.0 L144.3 178.2 L145.0 178.0 L145.7 177.0 L146.4 176.4 L147.1 176.4 L147.8 176.7 L148.5 178.4 L149.2 178.0 L149.9 176.6 L150.6 176.4 L151.3 176.5 L152.0 177.4 L152.7 179.4 L153.4 179.8 L153.4 182.2 L152.7 182.6 L152.0 184.6 L151.3 185.5 L150.6 185.6 L149.9 185.4 L149.2 184.0 L148.5 183.6 L147.8 185.3 L147.1 185.6 L146.4 185.6 L145.7 185.0 L145.0 184.0 L144.3 183.8 L143.6 185.0 L142.9 186.3 L142.2 185.7 L141.5 184.9 L140.8 183.2 L140.1 182.2 L139.4 182.2 L138.7 182.2 L138.0 184.0 L137.3 185.4 L136.6 185.5 L135.9 186.0 L135.2 185.0 L134.5 183.3 L133.8 184.5 L133.1 185.2 L132.4 186.1 L131.7 185.4 L131.0 184.4 L130.3 182.6 L129.6 184.7 L128.9 186.0 L128.2 185.7 L127.5 185.2 L126.8 184.4 L126.1 182.2 L125.4 182.2 L124.7 182.2 L124.0 182.4 L123.3 185.0 L122.6 185.8 L121.9 185.9 L121.2 185.6 L120.5 184.1 L119.8 183.5 L119.1 185.4 L118.4 186.3 L117.7 186.0 L117.0 185.2 L116.3 183.9 L115.6 184.2 L114.9 185.4 L114.2 186.3 L113.5 186.1 L112.8 185.2 L112.1 183.2 L111.4 182.2 L110.7 182.2 L110.0 182.2 L109.3 184.0 L108.6 185.2 L107.9 185.9 L107.2 186.2 L106.5 185.3 L105.8 183.4 L105.1 184.6 L104.4 185.8 L103.7 186.2 L103.0 185.3 L102.3 184.7 L101.6 182.4 L100.9 184.8 L100.2 185.4 L99.5 185.7 L98.8 185.3 L98.1 184.4 L97.4 182.2 L96.7 182.2 L96.0 182.2 L95.3 182.2 L94.6 184.6 L93.9 185.8 L93.2 185.9 L92.5 185.6 L91.8 184.4 L91.1 183.4 L90.4 185.1 L89.7 186.1 L89.0 185.9 L88.3 185.5 L87.6 183.9 L86.9 183.7 L86.2 185.6 L85.5 185.9 L84.8 185.7 L84.1 184.8 L83.4 183.3 L82.7 182.2 L82.0 182.2 L81.3 182.2 L80.6 184.0 L79.9 185.6 L79.2 185.7 L78.5 185.9 L77.8 184.9 L77.1 183.5 L76.4 184.2 L75.7 185.3 L75.0 186.3 L74.3 185.7 L73.6 184.4 L72.9 182.4 L72.2 184.9 L71.5 185.6 L70.8 186.1 L70.1 185.1 L69.4 184.4 L68.7 182.2 L68.0 182.2 L67.3 182.2 L66.6 182.2 L65.9 184.9 L65.2 185.5 L64.5 186.3 L63.8 185.5 L63.1 184.7 L62.4 183.3 L61.7 185.1 L61.0 185.7 L60.3 185.6 L59.6 185.3 L58.9 184.0 L58.2 184.0 L57.5 185.5 L56.8 185.7 L56.1 186.2 L55.4 185.3 L54.7 183.5 L54.0 182.2 L53.3 182.2 L52.6 182.2 L51.9 184.0 L51.2 185.1 L50.5 186.0 L49.8 186.1 L49.1 185.0 L48.4 183.5 L47.7 184.5 L47.0 185.5 L46.3 185.9 L45.6 185.6 L44.9 185.0 L44.2 182.6 L43.5 184.7 L42.8 185.5 L42.1 185.9 L41.4 185.8 L40.7 184.6 L40.0 182.2Z M40.0 199.8 L40.7 197.6 L41.4 196.6 L42.1 195.9 L42.8 196.5 L43.5 197.3 L44.2 199.4 L44.9 197.5 L45.6 196.4 L46.3 195.9 L47.0 196.8 L47.7 197.9 L48.4 198.4 L49.1 196.6 L49.8 196.3 L50.5 196.4 L51.2 196.4 L51.9 198.3 L52.6 199.8 L53.3 199.8 L54.0 199.8 L54.7 198.6 L55.4 196.9 L56.1 196.1 L56.8 195.7 L57.5 196.4 L58.2 198.1 L58.9 197.9 L59.6 196.4 L60.3 196.0 L61.0 196.3 L61.7 197.2 L62.4 198.8 L63.1 197.4 L63.8 196.3 L64.5 196.4 L65.2 196.0 L65.9 197.5 L66.6 199.8 L67.3 199.8 L68.0 199.8 L68.7 199.8 L69.4 197.5 L70.1 196.5 L70.8 196.3 L71.5 196.6 L72.2 197.2 L72.9 199.6 L73.6 197.2 L74.3 196.1 L75.0 195.8 L75.7 196.2 L76.4 197.6 L77.1 198.5 L77.8 196.9 L78.5 195.8 L79.2 195.8 L79.9 196.5 L80.6 198.3 L81.3 199.8 L82.0 199.8 L82.7 199.8 L83.4 198.7 L84.1 196.9 L84.8 196.5 L85.5 196.2 L86.2 196.7 L86.9 198.3 L87.6 198.3 L88.3 196.6 L89.0 196.2 L89.7 195.8 L90.4 196.7 L91.1 198.6 L91.8 197.5 L92.5 196.7 L93.2 195.9 L93.9 196.7 L94.6 197.5 L95.3 199.8 L96.0 199.8 L96.7 199.8 L97.4 199.8 L98.1 197.7 L98.8 196.7 L99.5 196.5 L100.2 196.3 L100.9 197.0 L101.6 199.6 L102.3 197.4 L103.0 196.0 L103.7 196.0 L104.4 196.5 L105.1 197.7 L105.8 198.6 L106.5 197.0 L107.2 196.3 L107.9 196.2 L108.6 196.5 L109.3 198.3 L110.0 199.8 L110.7 199.8 L111.4 199.8 L112.1 198.8 L112.8 196.9 L113.5 196.6 L114.2 196.3 L114.9 196.8 L115.6 198.0 L116.3 198.1 L117.0 196.7 L117.7 196.3 L118.4 196.2 L119.1 196.6 L119.8 198.7 L120.5 197.9 L121.2 196.8 L121.9 196.5 L122.6 196.6 L123.3 197.4 L124.0 199.6 L124.7 199.8 L125.4 199.8 L126.1 199.8 L126.8 197.5 L127.5 196.9 L128.2 196.1 L128.9 196.5 L129.6 197.0 L130.3 199.4 L131.0 197.2 L131.7 196.7 L132.4 196.1 L133.1 196.5 L133.8 197.6 L134.5 198.8 L135.2 197.3 L135.9 196.1 L136.6 195.8 L137.3 196.8 L138.0 198.1 L138.7 199.8 L139.4 199.8 L140.1 199.8 L140.8 198.9 L141.5 197.0 L142.2 195.9 L142.9 196.1 L143.6 196.9 L144.3 198.1 L145.0 198.1 L145.7 196.6 L146.4 196.3 L147.1 196.1 L147.8 197.2 L148.5 198.5 L149.2 198.0 L149.9 196.7 L150.6 196.1 L151.3 196.3 L152.0 197.3 L152.7 199.4 L153.4 199.8 L153.4 202.2 L152.7 202.6 L152.0 204.7 L151.3 205.7 L150.6 205.9 L149.9 205.3 L149.2 204.0 L148.5 203.5 L147.8 204.8 L147.1 205.9 L146.4 205.7 L145.7 205.4 L145.0 203.9 L144.3 203.9 L143.6 205.1 L142.9 205.9 L142.2 206.1 L141.5 205.0 L140.8 203.1 L140.1 202.2 L139.4 202.2 L138.7 202.2 L138.0 203.9 L137.3 205.2 L136.6 206.2 L135.9 205.9 L135.2 204.7 L134.5 203.2 L133.8 204.4 L133.1 205.5 L132.4 205.9 L131.7 205.3 L131.0 204.8 L130.3 202.6 L129.6 205.0 L128.9 205.5 L128.2 205.9 L127.5 205.1 L126.8 204.5 L126.1 202.2 L125.4 202.2 L124.7 202.2 L124.0 202.4 L123.3 204.6 L122.6 205.4 L121.9 205.5 L121.2 205.2 L120.5 204.1 L119.8 203.3 L119.1 205.4 L118.4 205.8 L117.7 205.7 L117.0 205.3 L116.3 203.9 L115.6 204.0 L114.9 205.2 L114.2 205.7 L113.5 205.4 L112.8 205.1 L112.1 203.2 L111.4 202.2 L110.7 202.2 L110.0 202.2 L109.3 203.7 L108.6 205.5 L107.9 205.8 L107.2 205.7 L106.5 205.0 L105.8 203.4 L105.1 204.3 L104.4 205.5 L103.7 206.0 L103.0 206.0 L102.3 204.6 L101.6 202.4 L100.9 205.0 L100.2 205.7 L99.5 205.5 L98.8 205.3 L98.1 204.3 L97.4 202.2 L96.7 202.2 L96.0 202.2 L95.3 202.2 L94.6 204.5 L93.9 205.3 L93.2 206.1 L92.5 205.3 L91.8 204.5 L91.1 203.4 L90.4 205.3 L89.7 206.2 L89.0 205.8 L88.3 205.4 L87.6 203.7 L86.9 203.7 L86.2 205.3 L85.5 205.8 L84.8 205.5 L84.1 205.1 L83.4 203.3 L82.7 202.2 L82.0 202.2 L81.3 202.2 L80.6 203.7 L79.9 205.5 L79.2 206.2 L78.5 206.2 L77.8 205.1 L77.1 203.5 L76.4 204.4 L75.7 205.8 L75.0 206.2 L74.3 205.9 L73.6 204.8 L72.9 202.4 L72.2 204.8 L71.5 205.4 L70.8 205.7 L70.1 205.5 L69.4 204.5 L68.7 202.2 L68.0 202.2 L67.3 202.2 L66.6 202.2 L65.9 204.5 L65.2 206.0 L64.5 205.6 L63.8 205.7 L63.1 204.6 L62.4 203.2 L61.7 204.8 L61.0 205.7 L60.3 206.0 L59.6 205.6 L58.9 204.1 L58.2 203.9 L57.5 205.6 L56.8 206.3 L56.1 205.9 L55.4 205.1 L54.7 203.4 L54.0 202.2 L53.3 202.2 L52.6 202.2 L51.9 203.7 L51.2 205.6 L50.5 205.6 L49.8 205.7 L49.1 205.4 L48.4 203.6 L47.7 204.1 L47.0 205.2 L46.3 206.1 L45.6 205.6 L44.9 204.5 L44.2 202.6 L43.5 204.7 L42.8 205.5 L42.1 206.1 L41.4 205.4 L40.7 204.4 L40.0 202.2Z M155.6 177.7 L156.3 176.1 L157.0 175.8 L157.7 176.6 L158.4 177.4 L159.1 179.3 L159.8 177.1 L160.5 176.0 L161.2 176.4 L161.9 176.9 L162.6 177.6 L163.3 178.5 L164.0 176.7 L164.7 176.6 L165.4 176.2 L166.1 176.6 L166.8 178.4 L167.5 179.8 L168.2 179.8 L168.9 179.8 L169.6 178.4 L170.3 176.6 L171.0 176.6 L171.7 176.5 L172.4 176.7 L173.1 178.0 L173.8 178.0 L174.5 176.9 L175.2 176.2 L175.9 176.6 L176.6 177.2 L177.3 178.9 L178.0 177.5 L178.7 176.6 L179.4 176.3 L180.1 176.6 L180.8 177.4 L181.5 179.8 L182.2 179.8 L182.9 179.8 L183.6 179.8 L184.3 177.7 L185.0 176.8 L185.7 175.7 L186.4 176.3 L187.1 177.2 L187.8 179.4 L188.5 176.9 L189.2 176.0 L189.9 176.4 L190.6 176.6 L191.3 177.6 L192.0 178.5 L192.7 176.6 L193.4 176.2 L194.1 175.8 L194.8 176.6 L195.5 178.3 L196.2 179.8 L196.9 179.8 L197.6 179.8 L198.3 178.6 L199.0 176.7 L199.7 175.9 L200.4 176.1 L201.1 176.7 L201.8 178.3 L202.5 178.1 L203.2 176.4 L203.9 176.2 L204.6 176.5 L205.3 177.0 L206.0 178.7 L206.7 177.5 L207.4 176.6 L208.1 176.1 L208.8 176.3 L209.5 177.2 L210.2 179.8 L210.9 179.8 L211.6 179.8 L212.3 179.8 L213.0 177.6 L213.7 176.6 L214.4 176.1 L215.1 176.7 L215.8 177.6 L216.5 179.6 L217.2 177.0 L217.9 176.2 L218.6 176.2 L219.3 176.8 L220.0 177.7 L220.7 178.5 L221.4 176.7 L222.1 176.1 L222.8 175.8 L223.5 176.9 L224.2 178.1 L224.9 179.8 L225.6 179.8 L226.3 179.8 L227.0 178.6 L227.7 176.9 L228.4 176.2 L229.1 176.3 L229.8 176.7 L230.5 177.9 L231.2 178.3 L231.9 176.5 L232.6 175.8 L233.3 175.8 L234.0 176.8 L234.7 178.6 L235.4 177.6 L236.1 176.4 L236.8 176.1 L237.5 176.7 L238.2 177.1 L238.9 179.8 L239.6 179.8 L240.3 179.8 L241.0 179.8 L241.7 177.6 L242.4 176.7 L243.1 176.1 L243.8 176.3 L244.5 177.3 L245.2 179.6 L245.9 177.3 L246.6 176.2 L247.3 176.0 L248.0 176.5 L248.7 177.9 L249.4 178.8 L250.1 177.2 L250.8 176.1 L251.5 175.8 L252.2 176.5 L252.9 178.0 L253.6 179.8 L254.3 179.8 L255.0 179.8 L255.7 178.7 L256.4 177.2 L257.1 175.9 L257.8 175.9 L258.5 177.0 L259.2 178.2 L259.9 178.3 L260.6 176.5 L261.3 176.3 L262.0 176.5 L262.7 176.8 L263.4 178.7 L264.1 177.9 L264.8 176.8 L265.5 176.0 L266.2 176.6 L266.9 177.4 L267.6 179.6 L268.3 179.8 L268.3 182.2 L267.6 182.4 L266.9 184.6 L266.2 185.4 L265.5 186.0 L264.8 185.2 L264.1 184.1 L263.4 183.3 L262.7 185.2 L262.0 185.5 L261.3 185.7 L260.6 185.5 L259.9 183.7 L259.2 183.8 L258.5 185.0 L257.8 186.1 L257.1 186.1 L256.4 184.8 L255.7 183.3 L255.0 182.2 L254.3 182.2 L253.6 182.2 L252.9 184.0 L252.2 185.5 L251.5 186.2 L250.8 185.9 L250.1 184.8 L249.4 183.2 L248.7 184.1 L248.0 185.5 L247.3 186.0 L246.6 185.8 L245.9 184.7 L245.2 182.4 L244.5 184.7 L243.8 185.7 L243.1 185.9 L242.4 185.3 L241.7 184.4 L241.0 182.2 L240.3 182.2 L239.6 182.2 L238.9 182.2 L238.2 184.9 L237.5 185.3 L236.8 185.9 L236.1 185.6 L235.4 184.4 L234.7 183.4 L234.0 185.2 L233.3 186.2 L232.6 186.2 L231.9 185.5 L231.2 183.7 L230.5 184.1 L229.8 185.3 L229.1 185.7 L228.4 185.8 L227.7 185.1 L227.0 183.4 L226.3 182.2 L225.6 182.2 L224.9 182.2 L224.2 183.9 L223.5 185.1 L222.8 186.2 L222.1 185.9 L221.4 185.3 L220.7 183.5 L220.0 184.3 L219.3 185.2 L218.6 185.8 L217.9 185.8 L217.2 185.0 L216.5 182.4 L215.8 184.4 L215.1 185.3 L214.4 185.9 L213.7 185.4 L213.0 184.4 L212.3 182.2 L211.6 182.2 L210.9 182.2 L210.2 182.2 L209.5 184.8 L208.8 185.7 L208.1 185.9 L207.4 185.4 L206.7 184.5 L206.0 183.3 L205.3 185.0 L204.6 185.5 L203.9 185.8 L203.2 185.6 L202.5 183.9 L201.8 183.7 L201.1 185.3 L200.4 185.9 L199.7 186.1 L199.0 185.3 L198.3 183.4 L197.6 182.2 L196.9 182.2 L196.2 182.2 L195.5 183.7 L194.8 185.4 L194.1 186.2 L193.4 185.8 L192.7 185.4 L192.0 183.5 L191.3 184.4 L190.6 185.4 L189.9 185.6 L189.2 186.0 L188.5 185.1 L187.8 182.6 L187.1 184.8 L186.4 185.7 L185.7 186.3 L185.0 185.2 L184.3 184.3 L183.6 182.2 L182.9 182.2 L182.2 182.2 L181.5 182.2 L180.8 184.6 L180.1 185.4 L179.4 185.7 L178.7 185.4 L178.0 184.5 L177.3 183.1 L176.6 184.8 L175.9 185.4 L175.2 185.8 L174.5 185.1 L173.8 184.0 L173.1 184.0 L172.4 185.3 L171.7 185.5 L171.0 185.4 L170.3 185.4 L169.6 183.6 L168.9 182.2 L168.2 182.2 L167.5 182.2 L166.8 183.6 L166.1 185.4 L165.4 185.8 L164.7 185.4 L164.0 185.3 L163.3 183.5 L162.6 184.4 L161.9 185.1 L161.2 185.6 L160.5 186.0 L159.8 184.9 L159.1 182.7 L158.4 184.6 L157.7 185.4 L157.0 186.2 L156.3 185.9 L155.6 184.3Z M155.6 197.7 L156.3 196.4 L157.0 196.4 L157.7 196.1 L158.4 197.5 L159.1 199.3 L159.8 196.9 L160.5 196.4 L161.2 195.6 L161.9 196.4 L162.6 197.7 L163.3 198.4 L164.0 196.8 L164.7 196.3 L165.4 195.7 L166.1 196.8 L166.8 198.1 L167.5 199.8 L168.2 199.8 L168.9 199.8 L169.6 198.4 L170.3 197.2 L171.0 196.4 L171.7 196.1 L172.4 196.5 L173.1 198.3 L173.8 197.9 L174.5 196.7 L175.2 195.8 L175.9 195.8 L176.6 196.9 L177.3 198.9 L178.0 197.4 L178.7 196.5 L179.4 195.7 L180.1 196.4 L180.8 197.1 L181.5 199.8 L182.2 199.8 L182.9 199.8 L183.6 199.8 L184.3 197.3 L185.0 196.2 L185.7 195.8 L186.4 196.1 L187.1 197.3 L187.8 199.4 L188.5 196.9 L189.2 196.3 L189.9 196.5 L190.6 196.6 L191.3 197.8 L192.0 198.6 L192.7 196.6 L193.4 196.5 L194.1 195.8 L194.8 196.7 L195.5 198.3 L196.2 199.8 L196.9 199.8 L197.6 199.8 L198.3 198.6 L199.0 197.0 L199.7 196.5 L200.4 195.9 L201.1 196.6 L201.8 198.0 L202.5 197.9 L203.2 196.4 L203.9 195.6 L204.6 195.8 L205.3 196.9 L206.0 198.8 L206.7 197.6 L207.4 196.2 L208.1 195.7 L208.8 196.1 L209.5 197.1 L210.2 199.8 L210.9 199.8 L211.6 199.8 L212.3 199.8 L213.0 197.9 L213.7 196.5 L214.4 196.4 L215.1 196.2 L215.8 197.2 L216.5 199.6 L217.2 197.0 L217.9 196.5 L218.6 195.9 L219.3 196.4 L220.0 197.8 L220.7 198.5 L221.4 197.2 L222.1 196.2 L222.8 196.1 L223.5 196.6 L224.2 198.0 L224.9 199.8 L225.6 199.8 L226.3 199.8 L227.0 198.7 L227.7 196.7 L228.4 196.4 L229.1 196.1 L229.8 197.0 L230.5 198.0 L231.2 198.1 L231.9 196.5 L232.6 196.4 L233.3 196.2 L234.0 196.6 L234.7 198.8 L235.4 197.5 L236.1 196.3 L236.8 195.9 L237.5 196.3 L238.2 197.3 L238.9 199.8 L239.6 199.8 L240.3 199.8 L241.0 199.8 L241.7 197.4 L242.4 196.7 L243.1 195.9 L243.8 196.2 L244.5 197.1 L245.2 199.6 L245.9 197.6 L246.6 196.1 L247.3 196.3 L248.0 196.2 L248.7 197.4 L249.4 198.6 L250.1 197.0 L250.8 195.9 L251.5 196.2 L252.2 196.8 L252.9 198.1 L253.6 199.8 L254.3 199.8 L255.0 199.8 L255.7 198.7 L256.4 196.9 L257.1 196.1 L257.8 196.2 L258.5 196.5 L259.2 198.1 L259.9 198.1 L260.6 197.1 L261.3 196.4 L262.0 195.9 L262.7 197.1 L263.4 198.6 L264.1 197.9 L264.8 196.3 L265.5 196.2 L266.2 196.7 L266.9 197.4 L267.6 199.6 L268.3 199.8 L268.3 202.2 L267.6 202.4 L266.9 204.6 L266.2 205.3 L265.5 205.8 L264.8 205.7 L264.1 204.1 L263.4 203.4 L262.7 204.9 L262.0 206.1 L261.3 205.6 L260.6 204.9 L259.9 203.9 L259.2 203.9 L258.5 205.5 L257.8 205.8 L257.1 205.9 L256.4 205.1 L255.7 203.3 L255.0 202.2 L254.3 202.2 L253.6 202.2 L252.9 203.9 L252.2 205.2 L251.5 205.8 L250.8 206.1 L250.1 205.0 L249.4 203.4 L248.7 204.6 L248.0 205.8 L247.3 205.7 L246.6 205.9 L245.9 204.4 L245.2 202.4 L244.5 204.9 L243.8 205.8 L243.1 206.1 L242.4 205.3 L241.7 204.6 L241.0 202.2 L240.3 202.2 L239.6 202.2 L238.9 202.2 L238.2 204.7 L237.5 205.7 L236.8 206.1 L236.1 205.7 L235.4 204.5 L234.7 203.2 L234.0 205.4 L233.3 205.8 L232.6 205.6 L231.9 205.5 L231.2 203.9 L230.5 204.0 L229.8 205.0 L229.1 205.9 L228.4 205.6 L227.7 205.3 L227.0 203.3 L226.3 202.2 L225.6 202.2 L224.9 202.2 L224.2 204.0 L223.5 205.4 L222.8 205.9 L222.1 205.8 L221.4 204.8 L220.7 203.5 L220.0 204.2 L219.3 205.6 L218.6 206.1 L217.9 205.5 L217.2 205.0 L216.5 202.4 L215.8 204.8 L215.1 205.8 L214.4 205.6 L213.7 205.5 L213.0 204.1 L212.3 202.2 L211.6 202.2 L210.9 202.2 L210.2 202.2 L209.5 204.9 L208.8 205.9 L208.1 206.3 L207.4 205.8 L206.7 204.4 L206.0 203.2 L205.3 205.1 L204.6 206.2 L203.9 206.4 L203.2 205.6 L202.5 204.1 L201.8 204.0 L201.1 205.4 L200.4 206.1 L199.7 205.5 L199.0 205.0 L198.3 203.4 L197.6 202.2 L196.9 202.2 L196.2 202.2 L195.5 203.7 L194.8 205.3 L194.1 206.2 L193.4 205.5 L192.7 205.4 L192.0 203.4 L191.3 204.2 L190.6 205.4 L189.9 205.5 L189.2 205.7 L188.5 205.1 L187.8 202.6 L187.1 204.7 L186.4 205.9 L185.7 206.2 L185.0 205.8 L184.3 204.7 L183.6 202.2 L182.9 202.2 L182.2 202.2 L181.5 202.2 L180.8 204.9 L180.1 205.6 L179.4 206.3 L178.7 205.5 L178.0 204.6 L177.3 203.1 L176.6 205.1 L175.9 206.2 L175.2 206.2 L174.5 205.3 L173.8 204.1 L173.1 203.7 L172.4 205.5 L171.7 205.9 L171.0 205.6 L170.3 204.8 L169.6 203.6 L168.9 202.2 L168.2 202.2 L167.5 202.2 L166.8 203.9 L166.1 205.2 L165.4 206.3 L164.7 205.7 L164.0 205.2 L163.3 203.6 L162.6 204.3 L161.9 205.6 L161.2 206.4 L160.5 205.6 L159.8 205.1 L159.1 202.7 L158.4 204.5 L157.7 205.9 L157.0 205.6 L156.3 205.6 L155.6 204.3Z M270.5 177.2 L271.2 176.0 L271.9 176.4 L272.6 176.7 L273.3 177.2 L274.0 179.1 L274.7 177.0 L275.4 176.4 L276.1 176.0 L276.8 176.5 L277.5 177.8 L278.2 178.5 L278.9 176.9 L279.6 176.2 L280.3 175.9 L281.0 176.4 L281.7 178.2 L282.4 179.8 L283.1 179.8 L283.8 179.8 L284.5 178.4 L285.2 176.9 L285.9 176.4 L286.6 176.5 L287.3 177.1 L288.0 178.3 L288.7 178.0 L289.4 176.7 L290.1 175.7 L290.8 176.2 L291.5 177.0 L292.2 179.0 L292.9 177.8 L293.6 176.6 L294.3 176.4 L295.0 176.4 L295.7 177.1 L296.4 179.8 L297.1 179.8 L297.8 179.8 L298.5 179.8 L299.2 177.4 L299.9 176.7 L300.6 175.7 L301.3 176.1 L302.0 177.2 L302.7 179.2 L303.4 177.0 L304.1 176.0 L304.8 176.2 L305.5 176.2 L306.2 177.5 L306.9 178.6 L307.6 176.7 L308.3 176.0 L309.0 176.2 L309.7 176.8 L310.4 178.3 L311.1 179.8 L311.8 179.8 L312.5 179.8 L313.2 178.4 L313.9 176.9 L314.6 175.9 L315.3 176.2 L316.0 176.5 L316.7 178.1 L317.4 178.0 L318.1 176.6 L318.8 175.7 L319.5 176.0 L320.2 177.0 L320.9 178.9 L321.6 177.6 L322.3 176.3 L323.0 176.4 L323.7 176.0 L324.4 177.5 L325.1 179.8 L325.8 179.8 L326.5 179.8 L327.2 179.8 L327.9 177.4 L328.6 176.6 L329.3 175.6 L330.0 176.2 L330.7 177.3 L331.4 179.4 L332.1 177.1 L332.8 176.2 L333.5 176.2 L334.2 176.7 L334.9 177.7 L335.6 178.4 L336.3 176.8 L337.0 176.5 L337.7 175.8 L338.4 176.6 L339.1 178.0 L339.8 179.8 L340.5 179.8 L341.2 179.8 L341.9 178.7 L342.6 176.8 L343.3 176.6 L344.0 176.0 L344.7 176.9 L345.4 178.3 L346.1 177.9 L346.8 177.0 L347.5 176.1 L348.2 175.9 L348.9 177.2 L349.6 178.8 L350.3 177.4 L351.0 176.5 L351.7 175.9 L352.4 176.7 L353.1 177.4 L353.8 179.8 L354.5 179.8 L355.2 179.8 L355.9 179.8 L356.6 177.8 L357.3 176.3 L358.0 176.4 L358.7 175.9 L359.4 177.6 L360.1 179.6 L360.8 177.5 L361.5 176.5 L362.2 175.8 L362.9 176.8 L363.6 177.8 L364.3 178.6 L365.0 177.0 L365.7 176.6 L366.4 175.7 L367.1 177.0 L367.8 178.3 L368.5 179.8 L369.2 179.8 L369.9 179.8 L370.6 178.7 L371.3 176.9 L372.0 176.0 L372.7 176.4 L373.4 176.8 L374.1 178.3 L374.8 178.1 L375.5 176.5 L376.2 175.9 L376.9 175.8 L377.6 176.8 L378.3 178.6 L379.0 177.5 L379.7 176.5 L380.4 176.3 L381.1 176.2 L381.8 177.4 L382.5 179.8 L383.2 179.8 L383.2 182.2 L382.5 182.2 L381.8 184.6 L381.1 185.8 L380.4 185.7 L379.7 185.5 L379.0 184.5 L378.3 183.4 L377.6 185.2 L376.9 186.2 L376.2 186.1 L375.5 185.5 L374.8 183.9 L374.1 183.7 L373.4 185.2 L372.7 185.6 L372.0 186.0 L371.3 185.1 L370.6 183.3 L369.9 182.2 L369.2 182.2 L368.5 182.2 L367.8 183.7 L367.1 185.0 L366.4 186.3 L365.7 185.4 L365.0 185.0 L364.3 183.4 L363.6 184.2 L362.9 185.2 L362.2 186.2 L361.5 185.5 L360.8 184.5 L360.1 182.4 L359.4 184.4 L358.7 186.1 L358.0 185.6 L357.3 185.7 L356.6 184.2 L355.9 182.2 L355.2 182.2 L354.5 182.2 L353.8 182.2 L353.1 184.6 L352.4 185.3 L351.7 186.1 L351.0 185.5 L350.3 184.6 L349.6 183.2 L348.9 184.8 L348.2 186.1 L347.5 185.9 L346.8 185.0 L346.1 184.1 L345.4 183.7 L344.7 185.1 L344.0 186.0 L343.3 185.4 L342.6 185.2 L341.9 183.3 L341.2 182.2 L340.5 182.2 L339.8 182.2 L339.1 184.0 L338.4 185.4 L337.7 186.2 L337.0 185.5 L336.3 185.2 L335.6 183.6 L334.9 184.3 L334.2 185.3 L333.5 185.8 L332.8 185.8 L332.1 184.9 L331.4 182.6 L330.7 184.7 L330.0 185.8 L329.3 186.4 L328.6 185.4 L327.9 184.6 L327.2 182.2 L326.5 182.2 L325.8 182.2 L325.1 182.2 L324.4 184.5 L323.7 186.0 L323.0 185.6 L322.3 185.7 L321.6 184.4 L320.9 183.1 L320.2 185.0 L319.5 186.0 L318.8 186.3 L318.1 185.4 L317.4 184.0 L316.7 183.9 L316.0 185.5 L315.3 185.8 L314.6 186.1 L313.9 185.1 L313.2 183.6 L312.5 182.2 L311.8 182.2 L311.1 182.2 L310.4 183.7 L309.7 185.2 L309.0 185.8 L308.3 186.0 L307.6 185.3 L306.9 183.4 L306.2 184.5 L305.5 185.8 L304.8 185.8 L304.1 186.0 L303.4 185.0 L302.7 182.8 L302.0 184.8 L301.3 185.9 L300.6 186.3 L299.9 185.3 L299.2 184.6 L298.5 182.2 L297.8 182.2 L297.1 182.2 L296.4 182.2 L295.7 184.9 L295.0 185.6 L294.3 185.6 L293.6 185.4 L292.9 184.2 L292.2 183.0 L291.5 185.0 L290.8 185.8 L290.1 186.3 L289.4 185.3 L288.7 184.0 L288.0 183.7 L287.3 184.9 L286.6 185.5 L285.9 185.6 L285.2 185.1 L284.5 183.6 L283.8 182.2 L283.1 182.2 L282.4 182.2 L281.7 183.8 L281.0 185.6 L280.3 186.1 L279.6 185.8 L278.9 185.1 L278.2 183.5 L277.5 184.2 L276.8 185.5 L276.1 186.0 L275.4 185.6 L274.7 185.0 L274.0 182.9 L273.3 184.8 L272.6 185.3 L271.9 185.6 L271.2 186.0 L270.5 184.8Z M270.5 197.2 L271.2 196.8 L271.9 195.8 L272.6 196.4 L273.3 197.2 L274.0 199.2 L274.7 196.9 L275.4 196.5 L276.1 195.6 L276.8 196.6 L277.5 198.0 L278.2 198.5 L278.9 196.7 L279.6 196.5 L280.3 196.2 L281.0 197.2 L281.7 198.5 L282.4 199.8 L283.1 199.8 L283.8 199.8 L284.5 198.6 L285.2 197.1 L285.9 196.3 L286.6 195.9 L287.3 196.8 L288.0 198.1 L288.7 197.7 L289.4 196.3 L290.1 195.7 L290.8 196.2 L291.5 197.0 L292.2 198.9 L292.9 197.5 L293.6 196.7 L294.3 196.0 L295.0 196.3 L295.7 197.6 L296.4 199.8 L297.1 199.8 L297.8 199.8 L298.5 199.8 L299.2 197.8 L299.9 196.7 L300.6 195.9 L301.3 196.1 L302.0 197.3 L302.7 199.3 L303.4 197.5 L304.1 196.7 L304.8 195.9 L305.5 196.5 L306.2 197.8 L306.9 198.6 L307.6 197.1 L308.3 196.4 L309.0 196.4 L309.7 196.7 L310.4 198.3 L311.1 199.8 L311.8 199.8 L312.5 199.8 L313.2 198.5 L313.9 196.9 L314.6 196.1 L315.3 195.9 L316.0 196.5 L316.7 198.3 L317.4 197.8 L318.1 196.4 L318.8 195.8 L319.5 196.2 L320.2 196.7 L320.9 198.8 L321.6 197.7 L322.3 196.3 L323.0 195.7 L323.7 196.1 L324.4 197.1 L325.1 199.8 L325.8 199.8 L326.5 199.8 L327.2 199.8 L327.9 197.6 L328.6 196.3 L329.3 196.4 L330.0 196.2 L330.7 197.5 L331.4 199.4 L332.1 197.0 L332.8 196.4 L333.5 196.4 L334.2 196.9 L334.9 197.7 L335.6 198.6 L336.3 196.7 L337.0 196.1 L337.7 196.1 L338.4 196.6 L339.1 198.3 L339.8 199.8 L340.5 199.8 L341.2 199.8 L341.9 198.6 L342.6 197.2 L343.3 196.1 L344.0 195.8 L344.7 197.0 L345.4 198.1 L346.1 197.8 L346.8 196.8 L347.5 196.3 L348.2 196.4 L348.9 196.8 L349.6 198.9 L350.3 197.4 L351.0 196.6 L351.7 195.8 L352.4 196.0 L353.1 197.1 L353.8 199.8 L354.5 199.8 L355.2 199.8 L355.9 199.8 L356.6 197.8 L357.3 196.4 L358.0 196.2 L358.7 196.0 L359.4 197.4 L360.1 199.6 L360.8 197.3 L361.5 196.6 L362.2 196.3 L362.9 196.3 L363.6 197.8 L364.3 198.7 L365.0 196.6 L365.7 196.4 L366.4 195.8 L367.1 196.6 L367.8 198.1 L368.5 199.8 L369.2 199.8 L369.9 199.8 L370.6 198.6 L371.3 196.9 L372.0 195.9 L372.7 195.9 L373.4 196.9 L374.1 198.0 L374.8 198.1 L375.5 196.4 L376.2 196.4 L376.9 196.2 L377.6 196.6 L378.3 198.8 L379.0 197.5 L379.7 196.2 L380.4 196.0 L381.1 196.7 L381.8 197.1 L382.5 199.8 L383.2 199.8 L383.2 202.2 L382.5 202.2 L381.8 204.9 L381.1 205.3 L380.4 206.0 L379.7 205.8 L379.0 204.5 L378.3 203.2 L377.6 205.4 L376.9 205.8 L376.2 205.6 L375.5 205.6 L374.8 203.9 L374.1 204.0 L373.4 205.1 L372.7 206.1 L372.0 206.1 L371.3 205.1 L370.6 203.4 L369.9 202.2 L369.2 202.2 L368.5 202.2 L367.8 203.9 L367.1 205.4 L366.4 206.2 L365.7 205.6 L365.0 205.4 L364.3 203.3 L363.6 204.2 L362.9 205.7 L362.2 205.7 L361.5 205.4 L360.8 204.7 L360.1 202.4 L359.4 204.6 L358.7 206.0 L358.0 205.8 L357.3 205.6 L356.6 204.2 L355.9 202.2 L355.2 202.2 L354.5 202.2 L353.8 202.2 L353.1 204.9 L352.4 206.0 L351.7 206.2 L351.0 205.4 L350.3 204.6 L349.6 203.1 L348.9 205.2 L348.2 205.6 L347.5 205.7 L346.8 205.2 L346.1 204.2 L345.4 203.9 L344.7 205.0 L344.0 206.2 L343.3 205.9 L342.6 204.8 L341.9 203.4 L341.2 202.2 L340.5 202.2 L339.8 202.2 L339.1 203.7 L338.4 205.4 L337.7 205.9 L337.0 205.9 L336.3 205.3 L335.6 203.4 L334.9 204.3 L334.2 205.1 L333.5 205.6 L332.8 205.6 L332.1 205.0 L331.4 202.6 L330.7 204.5 L330.0 205.8 L329.3 205.6 L328.6 205.7 L327.9 204.4 L327.2 202.2 L326.5 202.2 L325.8 202.2 L325.1 202.2 L324.4 204.9 L323.7 205.9 L323.0 206.3 L322.3 205.7 L321.6 204.3 L320.9 203.2 L320.2 205.3 L319.5 205.8 L318.8 206.2 L318.1 205.6 L317.4 204.2 L316.7 203.7 L316.0 205.5 L315.3 206.1 L314.6 205.9 L313.9 205.1 L313.2 203.5 L312.5 202.2 L311.8 202.2 L311.1 202.2 L310.4 203.7 L309.7 205.3 L309.0 205.6 L308.3 205.6 L307.6 204.9 L306.9 203.4 L306.2 204.2 L305.5 205.5 L304.8 206.1 L304.1 205.3 L303.4 204.5 L302.7 202.7 L302.0 204.7 L301.3 205.9 L300.6 206.1 L299.9 205.3 L299.2 204.2 L298.5 202.2 L297.8 202.2 L297.1 202.2 L296.4 202.2 L295.7 204.4 L295.0 205.7 L294.3 206.0 L293.6 205.3 L292.9 204.5 L292.2 203.1 L291.5 205.0 L290.8 205.8 L290.1 206.3 L289.4 205.7 L288.7 204.3 L288.0 203.9 L287.3 205.2 L286.6 206.1 L285.9 205.7 L285.2 204.9 L284.5 203.4 L283.8 202.2 L283.1 202.2 L282.4 202.2 L281.7 203.5 L281.0 204.8 L280.3 205.8 L279.6 205.5 L278.9 205.3 L278.2 203.5 L277.5 204.0 L276.8 205.4 L276.1 206.4 L275.4 205.5 L274.7 205.1 L274.0 202.8 L273.3 204.8 L272.6 205.6 L271.9 206.2 L271.2 205.2 L270.5 204.8Z M385.3 177.8 L386.0 176.5 L386.7 176.2 L387.4 176.2 L388.1 177.2 L388.8 179.6 L389.5 177.6 L390.2 176.0 L390.9 176.3 L391.6 176.7 L392.3 177.4 L393.0 178.7 L393.7 176.7 L394.4 176.2 L395.1 176.0 L395.8 177.0 L396.5 178.0 L397.2 179.8 L397.9 179.8 L398.6 179.8 L399.3 178.7 L400.0 177.0 L400.7 176.0 L401.4 175.9 L402.1 177.0 L402.8 177.9 L403.5 178.1 L404.2 176.9 L404.9 176.5 L405.6 175.9 L406.3 176.9 L407.0 178.5 L407.7 177.5 L408.4 176.3 L409.1 175.7 L409.8 176.4 L410.5 177.1 L411.2 179.6 L411.9 179.8 L412.6 179.8 L413.3 179.8 L414.0 177.5 L414.7 176.2 L415.4 176.4 L416.1 176.6 L416.8 177.4 L417.5 179.4 L418.2 177.4 L418.9 176.2 L419.6 176.2 L420.3 176.4 L421.0 177.6 L421.7 178.8 L422.4 176.9 L423.1 176.1 L423.8 175.7 L424.5 176.5 L425.2 177.8 L425.9 179.8 L426.6 179.8 L427.3 179.8 L428.0 178.8 L428.7 176.7 L429.4 176.1 L430.1 176.4 L430.8 176.4 L431.5 177.8 L432.2 178.1 L432.9 176.7 L433.6 175.9 L434.3 176.4 L435.0 176.7 L435.7 178.5 L436.4 177.8 L437.1 176.9 L437.8 175.7 L438.5 175.9 L439.2 177.5 L439.9 179.4 L440.6 179.8 L441.3 179.8 L442.0 179.8 L442.7 177.8 L443.4 176.8 L444.1 176.2 L444.8 176.0 L445.5 176.9 L446.2 179.3 L446.9 177.3 L447.6 176.7 L448.3 175.9 L449.0 176.6 L449.7 177.3 L450.4 178.7 L451.1 177.0 L451.8 175.8 L452.5 176.3 L453.2 177.0 L453.9 177.9 L454.6 179.8 L455.3 179.8 L456.0 179.8 L456.7 179.0 L457.4 177.3 L458.1 176.3 L458.8 176.0 L459.5 176.9 L460.2 178.1 L460.9 178.1 L461.6 176.9 L462.3 175.7 L463.0 175.8 L463.7 177.0 L464.4 178.5 L465.1 177.8 L465.8 176.4 L466.5 176.0 L467.2 176.2 L467.9 177.1 L468.6 179.2 L469.3 179.8 L470.0 179.8 L470.7 179.8 L471.4 177.8 L472.1 176.6 L472.8 175.9 L473.5 176.5 L474.2 177.3 L474.9 179.1 L475.6 177.4 L476.3 176.3 L477.0 176.5 L477.7 176.5 L478.4 177.4 L479.1 179.0 L479.8 177.0 L480.5 176.1 L481.2 176.5 L481.9 176.5 L482.6 177.9 L483.3 179.8 L484.0 179.8 L484.7 179.8 L485.4 179.0 L486.1 177.2 L486.8 176.1 L487.5 175.9 L488.2 177.0 L488.9 178.1 L489.6 178.3 L490.3 176.5 L491.0 176.3 L491.7 176.2 L492.4 176.8 L493.1 178.5 L493.8 177.9 L494.5 176.7 L495.2 176.2 L495.9 176.2 L496.6 177.3 L497.3 179.2 L498.0 179.8 L498.0 182.2 L497.3 182.8 L496.6 184.7 L495.9 185.8 L495.2 185.8 L494.5 185.3 L493.8 184.1 L493.1 183.5 L492.4 185.2 L491.7 185.8 L491.0 185.7 L490.3 185.5 L489.6 183.7 L488.9 183.9 L488.2 185.0 L487.5 186.1 L486.8 185.9 L486.1 184.8 L485.4 183.0 L484.7 182.2 L484.0 182.2 L483.3 182.2 L482.6 184.1 L481.9 185.5 L481.2 185.5 L480.5 185.9 L479.8 185.0 L479.1 183.0 L478.4 184.6 L477.7 185.5 L477.0 185.5 L476.3 185.7 L475.6 184.6 L474.9 182.9 L474.2 184.7 L473.5 185.5 L472.8 186.1 L472.1 185.4 L471.4 184.2 L470.7 182.2 L470.0 182.2 L469.3 182.2 L468.6 182.8 L467.9 184.9 L467.2 185.8 L466.5 186.0 L465.8 185.6 L465.1 184.2 L464.4 183.5 L463.7 185.0 L463.0 186.2 L462.3 186.3 L461.6 185.1 L460.9 183.9 L460.2 183.9 L459.5 185.1 L458.8 186.0 L458.1 185.7 L457.4 184.7 L456.7 183.0 L456.0 182.2 L455.3 182.2 L454.6 182.2 L453.9 184.1 L453.2 185.0 L452.5 185.7 L451.8 186.2 L451.1 185.0 L450.4 183.3 L449.7 184.7 L449.0 185.4 L448.3 186.1 L447.6 185.3 L446.9 184.7 L446.2 182.7 L445.5 185.1 L444.8 186.0 L444.1 185.8 L443.4 185.2 L442.7 184.2 L442.0 182.2 L441.3 182.2 L440.6 182.2 L439.9 182.6 L439.2 184.5 L438.5 186.1 L437.8 186.3 L437.1 185.1 L436.4 184.2 L435.7 183.5 L435.0 185.3 L434.3 185.6 L433.6 186.1 L432.9 185.3 L432.2 183.9 L431.5 184.2 L430.8 185.6 L430.1 185.6 L429.4 185.9 L428.7 185.3 L428.0 183.2 L427.3 182.2 L426.6 182.2 L425.9 182.2 L425.2 184.2 L424.5 185.5 L423.8 186.3 L423.1 185.9 L422.4 185.1 L421.7 183.2 L421.0 184.4 L420.3 185.6 L419.6 185.8 L418.9 185.8 L418.2 184.6 L417.5 182.6 L416.8 184.6 L416.1 185.4 L415.4 185.6 L414.7 185.8 L414.0 184.5 L413.3 182.2 L412.6 182.2 L411.9 182.2 L411.2 182.4 L410.5 184.9 L409.8 185.6 L409.1 186.3 L408.4 185.7 L407.7 184.5 L407.0 183.5 L406.3 185.1 L405.6 186.1 L404.9 185.5 L404.2 185.1 L403.5 183.9 L402.8 184.1 L402.1 185.0 L401.4 186.1 L400.7 186.0 L400.0 185.0 L399.3 183.3 L398.6 182.2 L397.9 182.2 L397.2 182.2 L396.5 184.0 L395.8 185.0 L395.1 186.0 L394.4 185.8 L393.7 185.3 L393.0 183.3 L392.3 184.6 L391.6 185.3 L390.9 185.7 L390.2 186.0 L389.5 184.4 L388.8 182.4 L388.1 184.8 L387.4 185.8 L386.7 185.8 L386.0 185.5 L385.3 184.2Z M385.3 197.6 L386.0 196.2 L386.7 196.1 L387.4 196.1 L388.1 197.0 L388.8 199.6 L389.5 197.1 L390.2 196.1 L390.9 195.7 L391.6 196.8 L392.3 197.8 L393.0 198.6 L393.7 196.8 L394.4 196.4 L395.1 195.9 L395.8 196.9 L396.5 198.1 L397.2 199.8 L397.9 199.8 L398.6 199.8 L399.3 198.8 L400.0 197.2 L400.7 196.5 L401.4 196.1 L402.1 196.6 L402.8 198.1 L403.5 198.1 L404.2 196.4 L404.9 196.5 L405.6 196.4 L406.3 197.2 L407.0 198.6 L407.7 197.7 L408.4 196.5 L409.1 196.3 L409.8 196.1 L410.5 197.1 L411.2 199.6 L411.9 199.8 L412.6 199.8 L413.3 199.8 L414.0 197.6 L414.7 196.7 L415.4 196.2 L416.1 195.9 L416.8 197.4 L417.5 199.4 L418.2 197.6 L418.9 196.2 L419.6 195.8 L420.3 196.8 L421.0 197.6 L421.7 198.8 L422.4 197.1 L423.1 196.4 L423.8 196.2 L424.5 196.9 L425.2 197.9 L425.9 199.8 L426.6 199.8 L427.3 199.8 L428.0 198.9 L428.7 197.0 L429.4 196.1 L430.1 195.9 L430.8 196.7 L431.5 198.0 L432.2 198.0 L432.9 197.0 L433.6 196.4 L434.3 196.3 L435.0 196.7 L435.7 198.6 L436.4 197.8 L437.1 196.8 L437.8 196.4 L438.5 196.2 L439.2 197.4 L439.9 199.4 L440.6 199.8 L441.3 199.8 L442.0 199.8 L442.7 197.9 L443.4 196.7 L444.1 196.3 L444.8 195.9 L445.5 197.1 L446.2 199.3 L446.9 197.5 L447.6 196.1 L448.3 196.0 L449.0 196.7 L449.7 197.7 L450.4 198.7 L451.1 197.1 L451.8 196.3 L452.5 196.4 L453.2 196.4 L453.9 198.1 L454.6 199.8 L455.3 199.8 L456.0 199.8 L456.7 198.9 L457.4 196.9 L458.1 196.2 L458.8 196.2 L459.5 196.8 L460.2 197.8 L460.9 198.4 L461.6 196.7 L462.3 195.7 L463.0 195.8 L463.7 196.7 L464.4 198.4 L465.1 197.9 L465.8 196.3 L466.5 195.7 L467.2 196.4 L467.9 197.4 L468.6 199.3 L469.3 199.8 L470.0 199.8 L470.7 199.8 L471.4 197.9 L472.1 196.3 L472.8 195.8 L473.5 196.3 L474.2 197.1 L474.9 199.1 L475.6 197.3 L476.3 196.3 L477.0 195.9 L477.7 196.6 L478.4 197.3 L479.1 199.0 L479.8 197.2 L480.5 196.2 L481.2 196.5 L481.9 196.5 L482.6 198.0 L483.3 199.8 L484.0 199.8 L484.7 199.8 L485.4 199.1 L486.1 197.4 L486.8 196.3 L487.5 196.0 L488.2 196.9 L488.9 197.7 L489.6 198.2 L490.3 196.8 L491.0 196.1 L491.7 195.9 L492.4 196.7 L493.1 198.3 L493.8 197.8 L494.5 196.5 L495.2 196.2 L495.9 196.6 L496.6 197.0 L497.3 199.1 L498.0 199.8 L498.0 202.2 L497.3 202.9 L496.6 205.0 L495.9 205.4 L495.2 205.8 L494.5 205.5 L493.8 204.2 L493.1 203.7 L492.4 205.3 L491.7 206.1 L491.0 205.9 L490.3 205.2 L489.6 203.8 L488.9 204.3 L488.2 205.1 L487.5 206.0 L486.8 205.7 L486.1 204.6 L485.4 202.9 L484.7 202.2 L484.0 202.2 L483.3 202.2 L482.6 204.0 L481.9 205.5 L481.2 205.5 L480.5 205.8 L479.8 204.8 L479.1 203.0 L478.4 204.7 L477.7 205.4 L477.0 206.1 L476.3 205.7 L475.6 204.7 L474.9 202.9 L474.2 204.9 L473.5 205.7 L472.8 206.2 L472.1 205.7 L471.4 204.1 L470.7 202.2 L470.0 202.2 L469.3 202.2 L468.6 202.7 L467.9 204.6 L467.2 205.6 L466.5 206.3 L465.8 205.7 L465.1 204.1 L464.4 203.6 L463.7 205.3 L463.0 206.2 L462.3 206.3 L461.6 205.3 L460.9 203.6 L460.2 204.2 L459.5 205.2 L458.8 205.8 L458.1 205.8 L457.4 205.1 L456.7 203.1 L456.0 202.2 L455.3 202.2 L454.6 202.2 L453.9 203.9 L453.2 205.6 L452.5 205.6 L451.8 205.7 L451.1 204.9 L450.4 203.3 L449.7 204.3 L449.0 205.3 L448.3 206.0 L447.6 205.9 L446.9 204.5 L446.2 202.7 L445.5 204.9 L444.8 206.1 L444.1 205.7 L443.4 205.3 L442.7 204.1 L442.0 202.2 L441.3 202.2 L440.6 202.2 L439.9 202.6 L439.2 204.6 L438.5 205.8 L437.8 205.6 L437.1 205.2 L436.4 204.2 L435.7 203.4 L435.0 205.3 L434.3 205.7 L433.6 205.6 L432.9 205.0 L432.2 204.0 L431.5 204.0 L430.8 205.3 L430.1 206.1 L429.4 205.9 L428.7 205.0 L428.0 203.1 L427.3 202.2 L426.6 202.2 L425.9 202.2 L425.2 204.1 L424.5 205.1 L423.8 205.8 L423.1 205.6 L422.4 204.9 L421.7 203.2 L421.0 204.4 L420.3 205.2 L419.6 206.2 L418.9 205.8 L418.2 204.4 L417.5 202.6 L416.8 204.6 L416.1 206.1 L415.4 205.8 L414.7 205.3 L414.0 204.4 L413.3 202.2 L412.6 202.2 L411.9 202.2 L411.2 202.4 L410.5 204.9 L409.8 205.9 L409.1 205.7 L408.4 205.5 L407.7 204.3 L407.0 203.4 L406.3 204.8 L405.6 205.6 L404.9 205.5 L404.2 205.6 L403.5 203.9 L402.8 203.9 L402.1 205.4 L401.4 205.9 L400.7 205.5 L400.0 204.8 L399.3 203.2 L398.6 202.2 L397.9 202.2 L397.2 202.2 L396.5 203.9 L395.8 205.1 L395.1 206.1 L394.4 205.6 L393.7 205.2 L393.0 203.4 L392.3 204.2 L391.6 205.2 L390.9 206.3 L390.2 205.9 L389.5 204.9 L388.8 202.4 L388.1 205.0 L387.4 205.9 L386.7 205.9 L386.0 205.8 L385.3 204.4Z M500.0 178.2 L500.7 177.0 L501.4 176.2 L502.1 176.5 L502.8 177.2 L503.5 178.6 L504.2 177.5 L504.9 176.3 L505.6 175.8 L506.3 176.5 L507.0 177.2 L507.7 179.6 L508.4 177.5 L509.1 176.6 L509.8 176.3 L510.5 176.1 L511.2 177.5 L511.9 179.8 L512.6 179.8 L513.3 179.8 L514.0 179.8 L514.7 177.1 L515.4 176.1 L516.1 176.3 L516.8 176.6 L517.5 177.5 L518.2 178.7 L518.9 176.8 L519.6 175.9 L520.3 176.5 L521.0 176.6 L521.7 178.0 L522.4 178.1 L523.1 177.0 L523.8 176.1 L524.5 176.5 L525.2 176.6 L525.9 178.5 L526.6 179.8 L527.3 179.8 L528.0 179.8 L528.7 178.2 L529.4 176.9 L530.1 175.7 L530.8 176.1 L531.5 176.6 L532.2 178.4 L532.9 177.7 L533.6 176.6 L534.3 176.0 L535.0 176.3 L535.7 177.4 L536.4 179.4 L537.1 177.1 L537.8 176.7 L538.5 176.5 L539.2 176.3 L539.9 177.7 L540.6 179.8 L541.3 179.8 L542.0 179.8 L542.7 179.8 L543.4 177.3 L544.1 176.4 L544.8 176.2 L545.5 176.0 L546.2 177.7 L546.9 178.9 L547.6 177.2 L548.3 176.1 L549.0 176.3 L549.7 176.7 L550.4 177.9 L551.1 178.3 L551.8 176.7 L552.5 175.8 L553.2 176.5 L553.9 177.2 L554.6 178.6 L555.3 179.8 L556.0 179.8 L556.7 179.8 L557.4 178.2 L558.1 176.7 L558.8 176.4 L559.5 176.3 L560.2 177.1 L560.9 178.5 L561.6 178.0 L562.3 176.4 L563.0 175.7 L563.7 175.9 L564.4 177.0 L565.1 179.2 L565.8 177.6 L566.5 176.5 L567.2 175.6 L567.9 176.2 L568.6 177.6 L569.3 179.8 L570.0 179.8 L570.7 179.8 L571.4 179.8 L572.1 177.2 L572.8 176.3 L573.5 175.8 L574.2 176.6 L574.9 177.7 L575.6 179.0 L576.3 177.3 L577.0 176.3 L577.7 175.7 L578.4 176.7 L579.1 178.1 L579.8 178.4 L580.5 177.0 L581.2 175.9 L581.9 176.3 L582.6 177.0 L583.3 178.6 L584.0 179.8 L584.7 179.8 L585.4 179.8 L586.1 178.2 L586.8 176.9 L587.5 176.4 L588.2 176.5 L588.9 177.2 L589.6 178.5 L590.3 177.7 L591.0 176.8 L591.7 176.5 L592.4 176.3 L593.1 177.3 L593.8 179.1 L594.5 177.6 L595.2 176.3 L595.9 175.8 L596.6 176.5 L597.3 177.2 L598.0 179.8 L598.7 179.8 L599.4 179.8 L600.1 179.8 L600.8 177.5 L601.5 176.6 L602.2 176.1 L602.9 176.8 L603.6 177.5 L604.3 179.1 L605.0 176.8 L605.7 176.0 L606.4 176.1 L607.1 176.9 L607.8 178.0 L608.5 178.4 L609.2 177.0 L609.9 176.4 L610.6 175.8 L611.3 177.1 L612.0 178.5 L612.7 179.8 L612.7 182.2 L612.0 183.5 L611.3 184.9 L610.6 186.2 L609.9 185.6 L609.2 185.0 L608.5 183.6 L607.8 184.0 L607.1 185.1 L606.4 185.9 L605.7 186.0 L605.0 185.2 L604.3 182.9 L603.6 184.5 L602.9 185.2 L602.2 185.9 L601.5 185.4 L600.8 184.5 L600.1 182.2 L599.4 182.2 L598.7 182.2 L598.0 182.2 L597.3 184.8 L596.6 185.5 L595.9 186.2 L595.2 185.7 L594.5 184.4 L593.8 182.9 L593.1 184.7 L592.4 185.7 L591.7 185.5 L591.0 185.2 L590.3 184.3 L589.6 183.5 L588.9 184.8 L588.2 185.5 L587.5 185.6 L586.8 185.1 L586.1 183.8 L585.4 182.2 L584.7 182.2 L584.0 182.2 L583.3 183.4 L582.6 185.0 L581.9 185.7 L581.2 186.1 L580.5 185.0 L579.8 183.6 L579.1 183.9 L578.4 185.3 L577.7 186.3 L577.0 185.7 L576.3 184.7 L575.6 183.0 L574.9 184.3 L574.2 185.4 L573.5 186.2 L572.8 185.7 L572.1 184.8 L571.4 182.2 L570.7 182.2 L570.0 182.2 L569.3 182.2 L568.6 184.4 L567.9 185.8 L567.2 186.4 L566.5 185.5 L565.8 184.4 L565.1 182.8 L564.4 185.0 L563.7 186.1 L563.0 186.3 L562.3 185.6 L561.6 184.0 L560.9 183.5 L560.2 184.9 L559.5 185.7 L558.8 185.6 L558.1 185.3 L557.4 183.8 L556.7 182.2 L556.0 182.2 L555.3 182.2 L554.6 183.4 L553.9 184.8 L553.2 185.5 L552.5 186.2 L551.8 185.3 L551.1 183.7 L550.4 184.1 L549.7 185.3 L549.0 185.7 L548.3 185.9 L547.6 184.8 L546.9 183.1 L546.2 184.3 L545.5 186.0 L544.8 185.8 L544.1 185.6 L543.4 184.7 L542.7 182.2 L542.0 182.2 L541.3 182.2 L540.6 182.2 L539.9 184.3 L539.2 185.7 L538.5 185.5 L537.8 185.3 L537.1 184.9 L536.4 182.6 L535.7 184.6 L535.0 185.7 L534.3 186.0 L533.6 185.4 L532.9 184.3 L532.2 183.6 L531.5 185.4 L530.8 185.9 L530.1 186.3 L529.4 185.1 L528.7 183.8 L528.0 182.2 L527.3 182.2 L526.6 182.2 L525.9 183.5 L525.2 185.4 L524.5 185.5 L523.8 185.9 L523.1 185.0 L522.4 183.9 L521.7 184.0 L521.0 185.4 L520.3 185.5 L519.6 186.1 L518.9 185.2 L518.2 183.3 L517.5 184.5 L516.8 185.4 L516.1 185.7 L515.4 185.9 L514.7 184.9 L514.0 182.2 L513.3 182.2 L512.6 182.2 L511.9 182.2 L511.2 184.5 L510.5 185.9 L509.8 185.7 L509.1 185.4 L508.4 184.5 L507.7 182.4 L507.0 184.8 L506.3 185.5 L505.6 186.2 L504.9 185.7 L504.2 184.5 L503.5 183.4 L502.8 184.8 L502.1 185.5 L501.4 185.8 L500.7 185.0 L500.0 183.8Z M500.0 198.0 L500.7 197.0 L501.4 196.1 L502.1 196.2 L502.8 196.6 L503.5 198.6 L504.2 197.7 L504.9 196.4 L505.6 196.2 L506.3 196.0 L507.0 197.0 L507.7 199.6 L508.4 197.6 L509.1 195.9 L509.8 196.0 L510.5 196.4 L511.2 197.6 L511.9 199.8 L512.6 199.8 L513.3 199.8 L514.0 199.8 L514.7 197.3 L515.4 196.0 L516.1 196.3 L516.8 196.7 L517.5 197.3 L518.2 198.8 L518.9 197.1 L519.6 196.2 L520.3 195.7 L521.0 196.8 L521.7 198.2 L522.4 198.2 L523.1 196.9 L523.8 196.5 L524.5 195.8 L525.2 196.8 L525.9 198.7 L526.6 199.8 L527.3 199.8 L528.0 199.8 L528.7 198.3 L529.4 196.4 L530.1 195.9 L530.8 196.2 L531.5 196.8 L532.2 198.4 L532.9 197.9 L533.6 196.4 L534.3 196.5 L535.0 196.3 L535.7 197.4 L536.4 199.4 L537.1 197.4 L537.8 196.4 L538.5 195.7 L539.2 196.6 L539.9 197.8 L540.6 199.8 L541.3 199.8 L542.0 199.8 L542.7 199.8 L543.4 197.2 L544.1 196.0 L544.8 195.7 L545.5 196.6 L546.2 197.6 L546.9 198.8 L547.6 197.3 L548.3 196.6 L549.0 196.1 L549.7 196.8 L550.4 198.0 L551.1 198.3 L551.8 196.4 L552.5 196.1 L553.2 196.3 L553.9 197.0 L554.6 198.6 L555.3 199.8 L556.0 199.8 L556.7 199.8 L557.4 198.2 L558.1 196.6 L558.8 195.9 L559.5 195.8 L560.2 196.8 L560.9 198.5 L561.6 197.8 L562.3 196.8 L563.0 196.2 L563.7 196.3 L564.4 196.9 L565.1 199.3 L565.8 197.6 L566.5 196.3 L567.2 196.2 L567.9 196.2 L568.6 197.4 L569.3 199.8 L570.0 199.8 L570.7 199.8 L571.4 199.8 L572.1 197.4 L572.8 196.2 L573.5 196.1 L574.2 196.6 L574.9 197.3 L575.6 198.9 L576.3 197.0 L577.0 195.9 L577.7 195.8 L578.4 196.5 L579.1 198.1 L579.8 198.1 L580.5 197.1 L581.2 196.4 L581.9 196.5 L582.6 197.1 L583.3 198.4 L584.0 199.8 L584.7 199.8 L585.4 199.8 L586.1 198.3 L586.8 197.1 L587.5 196.4 L588.2 195.9 L588.9 197.0 L589.6 198.5 L590.3 197.7 L591.0 196.7 L591.7 196.4 L592.4 196.2 L593.1 197.0 L593.8 199.2 L594.5 197.3 L595.2 196.6 L595.9 195.7 L596.6 196.4 L597.3 197.6 L598.0 199.8 L598.7 199.8 L599.4 199.8 L600.1 199.8 L600.8 197.5 L601.5 196.7 L602.2 196.5 L602.9 196.4 L603.6 197.5 L604.3 199.1 L605.0 197.3 L605.7 196.3 L606.4 195.7 L607.1 196.9 L607.8 197.8 L608.5 198.2 L609.2 196.9 L609.9 196.2 L610.6 196.1 L611.3 197.0 L612.0 198.6 L612.7 199.8 L612.7 202.2 L612.0 203.4 L611.3 205.0 L610.6 205.9 L609.9 205.8 L609.2 205.1 L608.5 203.8 L607.8 204.2 L607.1 205.1 L606.4 206.3 L605.7 205.7 L605.0 204.7 L604.3 202.9 L603.6 204.5 L602.9 205.6 L602.2 205.5 L601.5 205.3 L600.8 204.5 L600.1 202.2 L599.4 202.2 L598.7 202.2 L598.0 202.2 L597.3 204.4 L596.6 205.6 L595.9 206.3 L595.2 205.4 L594.5 204.7 L593.8 202.8 L593.1 205.0 L592.4 205.8 L591.7 205.6 L591.0 205.3 L590.3 204.3 L589.6 203.5 L588.9 205.0 L588.2 206.1 L587.5 205.6 L586.8 204.9 L586.1 203.7 L585.4 202.2 L584.7 202.2 L584.0 202.2 L583.3 203.6 L582.6 204.9 L581.9 205.5 L581.2 205.6 L580.5 204.9 L579.8 203.9 L579.1 203.9 L578.4 205.5 L577.7 206.2 L577.0 206.1 L576.3 205.0 L575.6 203.1 L574.9 204.7 L574.2 205.4 L573.5 205.9 L572.8 205.8 L572.1 204.6 L571.4 202.2 L570.7 202.2 L570.0 202.2 L569.3 202.2 L568.6 204.6 L567.9 205.8 L567.2 205.8 L566.5 205.7 L565.8 204.4 L565.1 202.7 L564.4 205.1 L563.7 205.7 L563.0 205.8 L562.3 205.2 L561.6 204.2 L560.9 203.5 L560.2 205.2 L559.5 206.2 L558.8 206.1 L558.1 205.4 L557.4 203.8 L556.7 202.2 L556.0 202.2 L555.3 202.2 L554.6 203.4 L553.9 205.0 L553.2 205.7 L552.5 205.9 L551.8 205.6 L551.1 203.7 L550.4 204.0 L549.7 205.2 L549.0 205.9 L548.3 205.4 L547.6 204.7 L546.9 203.2 L546.2 204.4 L545.5 205.4 L544.8 206.3 L544.1 206.0 L543.4 204.8 L542.7 202.2 L542.0 202.2 L541.3 202.2 L540.6 202.2 L539.9 204.2 L539.2 205.4 L538.5 206.3 L537.8 205.6 L537.1 204.6 L536.4 202.6 L535.7 204.6 L535.0 205.7 L534.3 205.5 L533.6 205.6 L532.9 204.1 L532.2 203.6 L531.5 205.2 L530.8 205.8 L530.1 206.1 L529.4 205.6 L528.7 203.7 L528.0 202.2 L527.3 202.2 L526.6 202.2 L525.9 203.3 L525.2 205.2 L524.5 206.2 L523.8 205.5 L523.1 205.1 L522.4 203.8 L521.7 203.8 L521.0 205.2 L520.3 206.3 L519.6 205.8 L518.9 204.9 L518.2 203.2 L517.5 204.7 L516.8 205.3 L516.1 205.7 L515.4 206.0 L514.7 204.7 L514.0 202.2 L513.3 202.2 L512.6 202.2 L511.9 202.2 L511.2 204.4 L510.5 205.6 L509.8 206.0 L509.1 206.1 L508.4 204.4 L507.7 202.4 L507.0 205.0 L506.3 206.0 L505.6 205.8 L504.9 205.6 L504.2 204.3 L503.5 203.4 L502.8 205.4 L502.1 205.8 L501.4 205.9 L500.7 205.0 L500.0 204.0Z M614.9 178.0 L615.6 176.5 L616.3 175.8 L617.0 175.8 L617.7 176.8 L618.4 178.6 L619.1 177.9 L619.8 176.5 L620.5 175.7 L621.2 176.2 L621.9 177.0 L622.6 179.6 L623.3 177.3 L624.0 176.5 L624.7 176.0 L625.4 176.4 L626.1 177.9 L626.8 179.8 L627.5 179.8 L628.2 179.8 L628.9 179.8 L629.6 177.5 L630.3 176.5 L631.0 175.7 L631.7 176.3 L632.4 177.8 L633.1 178.6 L633.8 177.2 L634.5 176.1 L635.2 176.4 L635.9 177.1 L636.6 177.9 L637.3 178.2 L638.0 176.9 L638.7 175.7 L639.4 175.9 L640.1 177.1 L640.8 178.6 L641.5 179.8 L642.2 179.8 L642.9 179.8 L643.6 178.1 L644.3 176.6 L645.0 176.4 L645.7 175.8 L646.4 176.8 L647.1 178.5 L647.8 177.5 L648.5 176.7 L649.2 176.2 L649.9 176.6 L650.6 177.5 L651.3 179.6 L652.0 177.4 L652.7 176.2 L653.4 176.5 L654.1 176.3 L654.8 177.7 L655.5 179.8 L656.2 179.8 L656.9 179.8 L657.6 179.8 L658.3 177.4 L659.0 176.1 L659.7 176.1 L660.4 176.6 L661.1 177.6 L661.8 178.7 L662.5 177.3 L663.2 175.8 L663.9 176.5 L664.6 176.5 L665.3 177.9 L666.0 178.3 L666.7 176.5 L667.4 176.2 L668.1 176.1 L668.8 177.3 L669.5 178.7 L670.2 179.8 L670.9 179.8 L671.6 179.8 L672.3 178.3 L673.0 176.4 L673.7 176.4 L674.4 175.9 L675.1 176.6 L675.8 178.4 L676.5 177.8 L677.2 176.6 L677.9 176.0 L678.6 176.0 L679.3 177.5 L680.0 179.4 L680.7 177.2 L681.4 176.0 L682.1 176.5 L682.8 176.1 L683.5 177.8 L684.2 179.8 L684.9 179.8 L685.6 179.8 L686.3 179.8 L687.0 177.5 L687.7 176.3 L688.4 175.7 L689.1 176.6 L689.8 177.3 L690.5 178.8 L691.2 177.2 L691.9 176.4 L692.6 176.4 L693.3 177.0 L694.0 178.1 L694.7 178.1 L695.4 176.4 L696.1 176.4 L696.8 176.6 L697.5 176.6 L698.2 178.5 L698.9 179.8 L699.6 179.8 L700.3 179.8 L701.0 178.3 L701.7 177.0 L702.4 176.0 L703.1 175.9 L703.8 176.9 L704.5 178.5 L705.2 178.0 L705.9 176.2 L706.6 176.5 L707.3 176.3 L708.0 177.0 L708.7 179.3 L709.4 177.2 L710.1 176.0 L710.8 175.9 L711.5 176.2 L712.2 177.7 L712.9 179.8 L713.6 179.8 L714.3 179.8 L715.0 179.8 L715.7 177.4 L716.4 176.7 L717.1 175.7 L717.8 176.6 L718.5 177.5 L719.2 178.8 L719.9 176.8 L720.6 175.8 L721.3 176.1 L722.0 176.6 L722.7 177.8 L723.4 178.3 L724.1 176.9 L724.8 176.2 L725.5 176.5 L726.2 177.0 L726.9 178.3 L727.6 179.8 L727.6 182.2 L726.9 183.7 L726.2 185.0 L725.5 185.5 L724.8 185.8 L724.1 185.1 L723.4 183.7 L722.7 184.2 L722.0 185.4 L721.3 185.9 L720.6 186.2 L719.9 185.2 L719.2 183.2 L718.5 184.5 L717.8 185.4 L717.1 186.3 L716.4 185.3 L715.7 184.6 L715.0 182.2 L714.3 182.2 L713.6 182.2 L712.9 182.2 L712.2 184.3 L711.5 185.8 L710.8 186.1 L710.1 186.0 L709.4 184.8 L708.7 182.7 L708.0 185.0 L707.3 185.7 L706.6 185.5 L705.9 185.8 L705.2 184.0 L704.5 183.5 L703.8 185.1 L703.1 186.1 L702.4 186.0 L701.7 185.0 L701.0 183.7 L700.3 182.2 L699.6 182.2 L698.9 182.2 L698.2 183.5 L697.5 185.4 L696.8 185.4 L696.1 185.6 L695.4 185.6 L694.7 183.9 L694.0 183.9 L693.3 185.0 L692.6 185.6 L691.9 185.6 L691.2 184.8 L690.5 183.2 L689.8 184.7 L689.1 185.4 L688.4 186.3 L687.7 185.7 L687.0 184.5 L686.3 182.2 L685.6 182.2 L684.9 182.2 L684.2 182.2 L683.5 184.2 L682.8 185.9 L682.1 185.5 L681.4 186.0 L680.7 184.8 L680.0 182.6 L679.3 184.5 L678.6 186.0 L677.9 186.0 L677.2 185.4 L676.5 184.2 L675.8 183.6 L675.1 185.4 L674.4 186.1 L673.7 185.6 L673.0 185.6 L672.3 183.7 L671.6 182.2 L670.9 182.2 L670.2 182.2 L669.5 183.3 L668.8 184.7 L668.1 185.9 L667.4 185.8 L666.7 185.5 L666.0 183.7 L665.3 184.1 L664.6 185.5 L663.9 185.5 L663.2 186.2 L662.5 184.7 L661.8 183.3 L661.1 184.4 L660.4 185.4 L659.7 185.9 L659.0 185.9 L658.3 184.6 L657.6 182.2 L656.9 182.2 L656.2 182.2 L655.5 182.2 L654.8 184.3 L654.1 185.7 L653.4 185.5 L652.7 185.8 L652.0 184.6 L651.3 182.4 L650.6 184.5 L649.9 185.4 L649.2 185.8 L648.5 185.3 L647.8 184.5 L647.1 183.5 L646.4 185.2 L645.7 186.2 L645.0 185.6 L644.3 185.4 L643.6 183.9 L642.9 182.2 L642.2 182.2 L641.5 182.2 L640.8 183.4 L640.1 184.9 L639.4 186.1 L638.7 186.3 L638.0 185.1 L637.3 183.8 L636.6 184.1 L635.9 184.9 L635.2 185.6 L634.5 185.9 L633.8 184.8 L633.1 183.4 L632.4 184.2 L631.7 185.7 L631.0 186.3 L630.3 185.5 L629.6 184.5 L628.9 182.2 L628.2 182.2 L627.5 182.2 L626.8 182.2 L626.1 184.1 L625.4 185.6 L624.7 186.0 L624.0 185.5 L623.3 184.7 L622.6 182.4 L621.9 185.0 L621.2 185.8 L620.5 186.3 L619.8 185.5 L619.1 184.1 L618.4 183.4 L617.7 185.2 L617.0 186.2 L616.3 186.2 L615.6 185.5 L614.9 184.0Z M614.9 198.3 L615.6 196.4 L616.3 196.4 L617.0 196.0 L617.7 196.7 L618.4 198.6 L619.1 197.7 L619.8 196.6 L620.5 195.9 L621.2 195.9 L621.9 197.2 L622.6 199.6 L623.3 197.3 L624.0 196.4 L624.7 195.9 L625.4 196.5 L626.1 197.7 L626.8 199.8 L627.5 199.8 L628.2 199.8 L628.9 199.8 L629.6 197.2 L630.3 196.2 L631.0 196.5 L631.7 196.7 L632.4 197.5 L633.1 198.7 L633.8 196.7 L634.5 196.6 L635.2 196.3 L635.9 196.7 L636.6 198.0 L637.3 198.2 L638.0 196.5 L638.7 196.2 L639.4 196.4 L640.1 196.7 L640.8 198.8 L641.5 199.8 L642.2 199.8 L642.9 199.8 L643.6 198.0 L644.3 196.9 L645.0 196.2 L645.7 196.4 L646.4 197.0 L647.1 198.5 L647.8 197.8 L648.5 196.5 L649.2 196.1 L649.9 196.5 L650.6 197.5 L651.3 199.6 L652.0 197.3 L652.7 196.3 L653.4 196.0 L654.1 196.8 L654.8 197.5 L655.5 199.8 L656.2 199.8 L656.9 199.8 L657.6 199.8 L658.3 197.1 L659.0 196.5 L659.7 195.8 L660.4 196.3 L661.1 197.7 L661.8 198.8 L662.5 197.3 L663.2 196.3 L663.9 196.1 L664.6 196.7 L665.3 198.0 L666.0 198.1 L666.7 197.0 L667.4 196.3 L668.1 196.1 L668.8 196.9 L669.5 198.7 L670.2 199.8 L670.9 199.8 L671.6 199.8 L672.3 198.3 L673.0 196.4 L673.7 195.8 L674.4 196.0 L675.1 197.0 L675.8 198.6 L676.5 197.6 L677.2 196.5 L677.9 195.9 L678.6 196.7 L679.3 197.1 L680.0 199.4 L680.7 197.4 L681.4 196.3 L682.1 195.6 L682.8 196.5 L683.5 197.5 L684.2 199.8 L684.9 199.8 L685.6 199.8 L686.3 199.8 L687.0 197.5 L687.7 196.0 L688.4 196.3 L689.1 196.4 L689.8 197.4 L690.5 198.8 L691.2 197.1 L691.9 196.1 L692.6 196.5 L693.3 196.3 L694.0 198.0 L694.7 198.2 L695.4 196.9 L696.1 196.1 L696.8 196.0 L697.5 197.0 L698.2 198.6 L698.9 199.8 L699.6 199.8 L700.3 199.8 L701.0 198.4 L701.7 196.5 L702.4 196.4 L703.1 196.1 L703.8 196.7 L704.5 198.6 L705.2 197.6 L705.9 196.6 L706.6 195.7 L707.3 196.5 L708.0 197.2 L708.7 199.3 L709.4 197.5 L710.1 196.4 L710.8 196.1 L711.5 196.5 L712.2 197.3 L712.9 199.8 L713.6 199.8 L714.3 199.8 L715.0 199.8 L715.7 197.5 L716.4 196.7 L717.1 195.8 L717.8 196.5 L718.5 197.8 L719.2 198.9 L719.9 196.9 L720.6 196.1 L721.3 195.8 L722.0 196.8 L722.7 197.8 L723.4 198.3 L724.1 196.5 L724.8 195.7 L725.5 196.1 L726.2 196.9 L726.9 198.4 L727.6 199.8 L727.6 202.2 L726.9 203.6 L726.2 205.1 L725.5 205.9 L724.8 206.3 L724.1 205.5 L723.4 203.7 L722.7 204.2 L722.0 205.2 L721.3 206.2 L720.6 205.9 L719.9 205.1 L719.2 203.1 L718.5 204.2 L717.8 205.5 L717.1 206.2 L716.4 205.3 L715.7 204.5 L715.0 202.2 L714.3 202.2 L713.6 202.2 L712.9 202.2 L712.2 204.7 L711.5 205.5 L710.8 205.9 L710.1 205.6 L709.4 204.5 L708.7 202.7 L708.0 204.8 L707.3 205.5 L706.6 206.3 L705.9 205.4 L705.2 204.4 L704.5 203.4 L703.8 205.3 L703.1 205.9 L702.4 205.6 L701.7 205.5 L701.0 203.6 L700.3 202.2 L699.6 202.2 L698.9 202.2 L698.2 203.4 L697.5 205.0 L696.8 206.0 L696.1 205.9 L695.4 205.1 L694.7 203.8 L694.0 204.0 L693.3 205.7 L692.6 205.5 L691.9 205.9 L691.2 204.9 L690.5 203.2 L689.8 204.6 L689.1 205.6 L688.4 205.7 L687.7 206.0 L687.0 204.5 L686.3 202.2 L685.6 202.2 L684.9 202.2 L684.2 202.2 L683.5 204.5 L682.8 205.5 L682.1 206.4 L681.4 205.7 L680.7 204.6 L680.0 202.6 L679.3 204.9 L678.6 205.3 L677.9 206.1 L677.2 205.5 L676.5 204.4 L675.8 203.4 L675.1 205.0 L674.4 206.0 L673.7 206.2 L673.0 205.6 L672.3 203.7 L671.6 202.2 L670.9 202.2 L670.2 202.2 L669.5 203.3 L668.8 205.1 L668.1 205.9 L667.4 205.7 L666.7 205.0 L666.0 203.9 L665.3 204.0 L664.6 205.3 L663.9 205.9 L663.2 205.7 L662.5 204.7 L661.8 203.2 L661.1 204.3 L660.4 205.7 L659.7 206.2 L659.0 205.5 L658.3 204.9 L657.6 202.2 L656.9 202.2 L656.2 202.2 L655.5 202.2 L654.8 204.5 L654.1 205.2 L653.4 206.0 L652.7 205.7 L652.0 204.7 L651.3 202.4 L650.6 204.5 L649.9 205.5 L649.2 205.9 L648.5 205.5 L647.8 204.2 L647.1 203.5 L646.4 205.0 L645.7 205.6 L645.0 205.8 L644.3 205.1 L643.6 204.0 L642.9 202.2 L642.2 202.2 L641.5 202.2 L640.8 203.2 L640.1 205.3 L639.4 205.6 L638.7 205.8 L638.0 205.5 L637.3 203.8 L636.6 204.0 L635.9 205.3 L635.2 205.7 L634.5 205.4 L633.8 205.3 L633.1 203.3 L632.4 204.5 L631.7 205.3 L631.0 205.5 L630.3 205.8 L629.6 204.8 L628.9 202.2 L628.2 202.2 L627.5 202.2 L626.8 202.2 L626.1 204.3 L625.4 205.5 L624.7 206.1 L624.0 205.6 L623.3 204.7 L622.6 202.4 L621.9 204.8 L621.2 206.1 L620.5 206.1 L619.8 205.4 L619.1 204.3 L618.4 203.4 L617.7 205.3 L617.0 206.0 L616.3 205.6 L615.6 205.6 L614.9 203.7Z M729.8 177.9 L730.5 176.4 L731.2 176.1 L731.9 176.4 L732.6 177.3 L733.3 178.7 L734.0 177.6 L734.7 176.2 L735.4 176.2 L736.1 176.1 L736.8 177.5 L737.5 179.4 L738.2 177.1 L738.9 176.4 L739.6 176.0 L740.3 176.4 L741.0 177.9 L741.7 179.8 L742.4 179.8 L743.1 179.8 L743.8 179.6 L744.5 177.1 L745.2 176.5 L745.9 175.8 L746.6 176.3 L747.3 177.5 L748.0 178.7 L748.7 177.2 L749.4 175.9 L750.1 175.8 L750.8 176.8 L751.5 178.3 L752.2 178.2 L752.9 176.6 L753.6 176.3 L754.3 175.8 L755.0 176.9 L755.7 178.8 L756.4 179.8 L757.1 179.8 L757.8 179.8 L758.5 178.0 L759.2 176.8 L759.9 175.7 L760.6 175.8 L761.3 177.0 L762.0 178.6 L762.7 177.5 L763.4 176.2 L764.1 175.6 L764.8 176.7 L765.5 177.4 L766.2 179.6 L766.9 177.4 L767.6 176.2 L768.3 176.4 L769.0 176.2 L769.7 177.7 L770.4 179.8 L771.1 179.8 L771.8 179.8 L772.5 179.8 L773.2 177.5 L773.9 176.2 L774.6 176.2 L775.3 176.7 L776.0 177.6 L776.7 178.8 L777.4 177.2 L778.1 175.9 L778.8 175.9 L779.5 177.1 L780.2 178.0 L780.9 178.3 L781.6 176.8 L782.3 175.7 L783.0 176.1 L783.7 177.1 L784.4 178.7 L785.1 179.8 L785.8 179.8 L786.5 179.8 L787.2 178.2 L787.9 177.0 L788.6 175.7 L789.3 176.6 L790.0 177.0 L790.7 178.5 L791.4 177.7 L792.1 176.1 L792.8 176.3 L793.5 175.9 L794.2 177.0 L794.9 179.6 L795.6 177.1 L796.3 176.4 L797.0 175.8 L797.7 176.2 L798.4 177.6 L799.1 179.8 L799.8 179.8 L800.5 179.8 L801.2 179.8 L801.9 177.3 L802.6 176.2 L803.3 176.1 L804.0 176.8 L804.7 177.5 L805.4 178.8 L806.1 177.0 L806.8 175.9 L807.5 176.4 L808.2 177.0 L808.9 178.2 L809.6 178.1 L810.3 176.8 L811.0 176.3 L811.7 176.2 L812.4 176.6 L813.1 178.7 L813.8 179.8 L814.5 179.8 L815.2 179.8 L815.9 178.2 L816.6 176.5 L817.3 176.0 L818.0 176.4 L818.7 176.9 L819.4 178.5 L820.1 177.9 L820.8 176.6 L821.5 176.2 L822.2 176.0 L822.9 177.3 L823.6 179.4 L824.3 177.0 L825.0 176.0 L825.7 176.2 L826.4 176.4 L827.1 177.7 L827.8 179.8 L828.5 179.8 L829.2 179.8 L829.9 179.8 L830.6 177.4 L831.3 176.4 L832.0 175.8 L832.7 176.1 L833.4 177.7 L834.1 179.0 L834.8 177.1 L835.5 176.6 L836.2 176.5 L836.9 176.4 L837.6 178.1 L838.3 178.1 L839.0 176.8 L839.7 175.7 L840.4 175.9 L841.1 177.2 L841.8 178.6 L842.5 179.8 L842.5 182.2 L841.8 183.4 L841.1 184.8 L840.4 186.1 L839.7 186.3 L839.0 185.2 L838.3 183.9 L837.6 183.9 L836.9 185.6 L836.2 185.5 L835.5 185.4 L834.8 184.9 L834.1 183.0 L833.4 184.3 L832.7 185.9 L832.0 186.2 L831.3 185.6 L830.6 184.6 L829.9 182.2 L829.2 182.2 L828.5 182.2 L827.8 182.2 L827.1 184.3 L826.4 185.6 L825.7 185.8 L825.0 186.0 L824.3 185.0 L823.6 182.6 L822.9 184.7 L822.2 186.0 L821.5 185.8 L820.8 185.4 L820.1 184.1 L819.4 183.5 L818.7 185.1 L818.0 185.6 L817.3 186.0 L816.6 185.5 L815.9 183.8 L815.2 182.2 L814.5 182.2 L813.8 182.2 L813.1 183.3 L812.4 185.4 L811.7 185.8 L811.0 185.7 L810.3 185.2 L809.6 183.9 L808.9 183.8 L808.2 185.0 L807.5 185.6 L806.8 186.1 L806.1 185.0 L805.4 183.2 L804.7 184.5 L804.0 185.2 L803.3 185.9 L802.6 185.8 L801.9 184.7 L801.2 182.2 L800.5 182.2 L799.8 182.2 L799.1 182.2 L798.4 184.4 L797.7 185.8 L797.0 186.2 L796.3 185.6 L795.6 184.9 L794.9 182.4 L794.2 185.0 L793.5 186.1 L792.8 185.7 L792.1 185.9 L791.4 184.3 L790.7 183.5 L790.0 185.0 L789.3 185.4 L788.6 186.3 L787.9 185.0 L787.2 183.8 L786.5 182.2 L785.8 182.2 L785.1 182.2 L784.4 183.3 L783.7 184.9 L783.0 185.9 L782.3 186.3 L781.6 185.2 L780.9 183.7 L780.2 184.0 L779.5 184.9 L778.8 186.1 L778.1 186.1 L777.4 184.8 L776.7 183.2 L776.0 184.4 L775.3 185.3 L774.6 185.8 L773.9 185.8 L773.2 184.5 L772.5 182.2 L771.8 182.2 L771.1 182.2 L770.4 182.2 L769.7 184.3 L769.0 185.8 L768.3 185.6 L767.6 185.8 L766.9 184.6 L766.2 182.4 L765.5 184.6 L764.8 185.3 L764.1 186.4 L763.4 185.8 L762.7 184.5 L762.0 183.4 L761.3 185.0 L760.6 186.2 L759.9 186.3 L759.2 185.2 L758.5 184.0 L757.8 182.2 L757.1 182.2 L756.4 182.2 L755.7 183.2 L755.0 185.1 L754.3 186.2 L753.6 185.7 L752.9 185.4 L752.2 183.8 L751.5 183.7 L750.8 185.2 L750.1 186.2 L749.4 186.1 L748.7 184.8 L748.0 183.3 L747.3 184.5 L746.6 185.7 L745.9 186.2 L745.2 185.5 L744.5 184.9 L743.8 182.4 L743.1 182.2 L742.4 182.2 L741.7 182.2 L741.0 184.1 L740.3 185.6 L739.6 186.0 L738.9 185.6 L738.2 184.9 L737.5 182.6 L736.8 184.5 L736.1 185.9 L735.4 185.8 L734.7 185.8 L734.0 184.4 L733.3 183.3 L732.6 184.7 L731.9 185.6 L731.2 185.9 L730.5 185.6 L729.8 184.1Z M729.8 197.8 L730.5 196.6 L731.2 196.1 L731.9 196.2 L732.6 196.8 L733.3 198.6 L734.0 197.6 L734.7 196.7 L735.4 196.2 L736.1 196.7 L736.8 197.2 L737.5 199.4 L738.2 197.4 L738.9 196.1 L739.6 196.3 L740.3 196.2 L741.0 197.7 L741.7 199.8 L742.4 199.8 L743.1 199.8 L743.8 199.6 L744.5 197.5 L745.2 196.6 L745.9 195.7 L746.6 196.7 L747.3 197.6 L748.0 198.6 L748.7 197.0 L749.4 196.0 L750.1 196.4 L750.8 196.6 L751.5 198.3 L752.2 198.2 L752.9 196.5 L753.6 196.4 L754.3 196.5 L755.0 197.0 L755.7 198.7 L756.4 199.8 L757.1 199.8 L757.8 199.8 L758.5 198.3 L759.2 196.6 L759.9 196.0 L760.6 196.6 L761.3 196.9 L762.0 198.8 L762.7 197.6 L763.4 196.4 L764.1 196.2 L764.8 196.4 L765.5 197.1 L766.2 199.6 L766.9 197.3 L767.6 196.3 L768.3 196.5 L769.0 196.2 L769.7 197.8 L770.4 199.8 L771.1 199.8 L771.8 199.8 L772.5 199.8 L773.2 197.1 L773.9 196.3 L774.6 196.5 L775.3 196.6 L776.0 197.6 L776.7 198.7 L777.4 196.7 L778.1 196.6 L778.8 195.8 L779.5 196.4 L780.2 198.2 L780.9 198.1 L781.6 197.0 L782.3 196.0 L783.0 196.0 L783.7 197.1 L784.4 198.6 L785.1 199.8 L785.8 199.8 L786.5 199.8 L787.2 198.2 L787.9 197.0 L788.6 196.1 L789.3 196.0 L790.0 197.1 L790.7 198.7 L791.4 197.6 L792.1 196.4 L792.8 196.4 L793.5 196.6 L794.2 197.2 L794.9 199.6 L795.6 197.5 L796.3 196.2 L797.0 195.9 L797.7 196.8 L798.4 197.5 L799.1 199.8 L799.8 199.8 L800.5 199.8 L801.2 199.8 L801.9 197.3 L802.6 196.7 L803.3 196.4 L804.0 196.6 L804.7 197.5 L805.4 198.9 L806.1 196.9 L806.8 195.9 L807.5 196.0 L808.2 196.5 L808.9 198.2 L809.6 198.0 L810.3 196.4 L811.0 195.8 L811.7 196.4 L812.4 196.9 L813.1 198.5 L813.8 199.8 L814.5 199.8 L815.2 199.8 L815.9 198.3 L816.6 197.0 L817.3 195.8 L818.0 196.1 L818.7 196.6 L819.4 198.6 L820.1 197.5 L820.8 196.3 L821.5 196.3 L822.2 196.5 L822.9 196.9 L823.6 199.4 L824.3 197.1 L825.0 196.2 L825.7 195.7 L826.4 196.7 L827.1 197.8 L827.8 199.8 L828.5 199.8 L829.2 199.8 L829.9 199.8 L830.6 197.1 L831.3 196.3 L832.0 196.2 L832.7 196.3 L833.4 197.7 L834.1 198.8 L834.8 196.9 L835.5 196.1 L836.2 196.2 L836.9 196.7 L837.6 198.1 L838.3 198.4 L839.0 196.7 L839.7 196.3 L840.4 196.3 L841.1 197.2 L841.8 198.5 L842.5 199.8 L842.5 202.2 L841.8 203.5 L841.1 204.8 L840.4 205.7 L839.7 205.7 L839.0 205.3 L838.3 203.6 L837.6 203.9 L836.9 205.3 L836.2 205.8 L835.5 205.9 L834.8 205.1 L834.1 203.2 L833.4 204.3 L832.7 205.7 L832.0 205.8 L831.3 205.7 L830.6 204.9 L829.9 202.2 L829.2 202.2 L828.5 202.2 L827.8 202.2 L827.1 204.2 L826.4 205.3 L825.7 206.3 L825.0 205.8 L824.3 204.9 L823.6 202.6 L822.9 205.1 L822.2 205.5 L821.5 205.7 L820.8 205.7 L820.1 204.5 L819.4 203.4 L818.7 205.4 L818.0 205.9 L817.3 206.2 L816.6 205.0 L815.9 203.7 L815.2 202.2 L814.5 202.2 L813.8 202.2 L813.1 203.5 L812.4 205.1 L811.7 205.6 L811.0 206.2 L810.3 205.6 L809.6 204.0 L808.9 203.8 L808.2 205.5 L807.5 206.0 L806.8 206.1 L806.1 205.1 L805.4 203.1 L804.7 204.5 L804.0 205.4 L803.3 205.6 L802.6 205.3 L801.9 204.7 L801.2 202.2 L800.5 202.2 L799.8 202.2 L799.1 202.2 L798.4 204.5 L797.7 205.2 L797.0 206.1 L796.3 205.8 L795.6 204.5 L794.9 202.4 L794.2 204.8 L793.5 205.4 L792.8 205.6 L792.1 205.6 L791.4 204.4 L790.7 203.3 L790.0 204.9 L789.3 206.0 L788.6 205.9 L787.9 205.0 L787.2 203.8 L786.5 202.2 L785.8 202.2 L785.1 202.2 L784.4 203.4 L783.7 204.9 L783.0 206.0 L782.3 206.0 L781.6 205.0 L780.9 203.9 L780.2 203.8 L779.5 205.6 L778.8 206.2 L778.1 205.4 L777.4 205.3 L776.7 203.3 L776.0 204.4 L775.3 205.4 L774.6 205.5 L773.9 205.7 L773.2 204.9 L772.5 202.2 L771.8 202.2 L771.1 202.2 L770.4 202.2 L769.7 204.2 L769.0 205.8 L768.3 205.5 L767.6 205.7 L766.9 204.7 L766.2 202.4 L765.5 204.9 L764.8 205.6 L764.1 205.8 L763.4 205.6 L762.7 204.4 L762.0 203.2 L761.3 205.1 L760.6 205.4 L759.9 206.0 L759.2 205.4 L758.5 203.7 L757.8 202.2 L757.1 202.2 L756.4 202.2 L755.7 203.3 L755.0 205.0 L754.3 205.5 L753.6 205.6 L752.9 205.5 L752.2 203.8 L751.5 203.7 L750.8 205.4 L750.1 205.6 L749.4 206.0 L748.7 205.0 L748.0 203.4 L747.3 204.4 L746.6 205.3 L745.9 206.3 L745.2 205.4 L744.5 204.5 L743.8 202.4 L743.1 202.2 L742.4 202.2 L741.7 202.2 L741.0 204.3 L740.3 205.8 L739.6 205.7 L738.9 205.9 L738.2 204.6 L737.5 202.6 L736.8 204.8 L736.1 205.3 L735.4 205.8 L734.7 205.3 L734.0 204.4 L733.3 203.4 L732.6 205.2 L731.9 205.8 L731.2 205.9 L730.5 205.4 L729.8 204.2Z M844.6 178.3 L845.3 177.0 L846.0 176.0 L846.7 176.5 L847.4 176.8 L848.1 178.5 L848.8 178.0 L849.5 176.5 L850.2 176.5 L850.9 176.3 L851.6 177.4 L852.3 179.3 L853.0 177.4 L853.7 176.1 L854.4 176.4 L855.1 176.7 L855.8 177.5 L856.5 179.8 L857.2 179.8 L857.9 179.8 L858.6 179.8 L859.3 177.1 L860.0 176.3 L860.7 176.1 L861.4 176.0 L862.1 177.7 L862.8 178.9 L863.5 177.2 L864.2 176.5 L864.9 176.4 L865.6 176.8 L866.3 177.8 L867.0 178.4 L867.7 176.7 L868.4 176.0 L869.1 176.3 L869.8 176.8 L870.5 178.6 L871.2 179.8 L871.9 179.8 L872.6 179.8 L873.3 178.5 L874.0 177.0 L874.7 176.0 L875.4 176.2 L876.1 177.0 L876.8 178.4 L877.5 177.8 L878.2 176.7 L878.9 175.8 L879.6 176.1 L880.3 177.3 L881.0 179.1 L881.7 177.4 L882.4 176.1 L883.1 175.8 L883.8 176.6 L884.5 177.2 L885.2 179.8 L885.9 179.8 L886.6 179.8 L887.3 179.8 L888.0 177.7 L888.7 176.5 L889.4 175.8 L890.1 176.7 L890.8 177.5 L891.5 179.1 L892.2 177.0 L892.9 176.0 L893.6 176.0 L894.3 176.3 L895.0 178.0 L895.7 178.3 L896.4 176.7 L897.1 176.1 L897.8 176.2 L898.5 176.6 L899.2 178.2 L899.9 179.8 L900.6 179.8 L901.3 179.8 L902.0 178.4 L902.7 176.7 L903.4 176.5 L904.1 176.0 L904.8 176.7 L905.5 178.2 L906.2 177.7 L906.9 176.8 L907.6 176.2 L908.3 176.1 L909.0 177.4 L909.7 179.0 L910.4 177.6 L911.1 176.7 L911.8 176.4 L912.5 176.2 L913.2 177.7 L913.9 179.8 L914.6 179.8 L915.3 179.8 L916.0 179.8 L916.7 177.6 L917.4 176.5 L918.1 175.7 L918.8 176.7 L919.5 177.4 L920.2 179.1 L920.9 176.9 L921.6 176.0 L922.3 175.7 L923.0 176.7 L923.7 177.9 L924.4 178.4 L925.1 176.6 L925.8 175.7 L926.5 176.4 L927.2 177.0 L927.9 178.4 L928.6 179.8 L929.3 179.8 L930.0 179.8 L930.7 178.5 L931.4 176.9 L932.1 176.1 L932.8 176.3 L933.5 177.1 L934.2 178.3 L934.9 178.0 L935.6 176.6 L936.3 175.7 L937.0 176.1 L937.7 177.1 L938.4 178.9 L939.1 177.4 L939.8 176.8 L940.5 175.7 L941.2 176.1 L941.9 177.2 L942.6 179.8 L943.3 179.8 L944.0 179.8 L944.7 179.8 L945.4 177.4 L946.1 176.5 L946.8 176.1 L947.5 176.7 L948.2 177.3 L948.9 179.3 L949.6 177.4 L950.3 176.5 L951.0 176.4 L951.7 176.7 L952.4 178.0 L953.1 178.6 L953.8 177.1 L954.5 176.5 L955.2 176.2 L955.9 177.1 L955.9 184.9 L955.2 185.8 L954.5 185.5 L953.8 184.9 L953.1 183.4 L952.4 184.0 L951.7 185.3 L951.0 185.6 L950.3 185.5 L949.6 184.6 L948.9 182.7 L948.2 184.7 L947.5 185.3 L946.8 185.9 L946.1 185.5 L945.4 184.6 L944.7 182.2 L944.0 182.2 L943.3 182.2 L942.6 182.2 L941.9 184.8 L941.2 185.9 L940.5 186.3 L939.8 185.2 L939.1 184.6 L938.4 183.1 L937.7 184.9 L937.0 185.9 L936.3 186.3 L935.6 185.4 L934.9 184.0 L934.2 183.7 L933.5 184.9 L932.8 185.7 L932.1 185.9 L931.4 185.1 L930.7 183.5 L930.0 182.2 L929.3 182.2 L928.6 182.2 L927.9 183.6 L927.2 185.0 L926.5 185.6 L925.8 186.3 L925.1 185.4 L924.4 183.6 L923.7 184.1 L923.0 185.3 L922.3 186.3 L921.6 186.0 L920.9 185.1 L920.2 182.9 L919.5 184.6 L918.8 185.3 L918.1 186.3 L917.4 185.5 L916.7 184.4 L916.0 182.2 L915.3 182.2 L914.6 182.2 L913.9 182.2 L913.2 184.3 L912.5 185.8 L911.8 185.6 L911.1 185.3 L910.4 184.4 L909.7 183.0 L909.0 184.6 L908.3 185.9 L907.6 185.8 L906.9 185.2 L906.2 184.3 L905.5 183.8 L904.8 185.3 L904.1 186.0 L903.4 185.5 L902.7 185.3 L902.0 183.6 L901.3 182.2 L900.6 182.2 L899.9 182.2 L899.2 183.8 L898.5 185.4 L897.8 185.8 L897.1 185.9 L896.4 185.3 L895.7 183.7 L895.0 184.0 L894.3 185.7 L893.6 186.0 L892.9 186.0 L892.2 185.0 L891.5 182.9 L890.8 184.5 L890.1 185.3 L889.4 186.2 L888.7 185.5 L888.0 184.3 L887.3 182.2 L886.6 182.2 L885.9 182.2 L885.2 182.2 L884.5 184.8 L883.8 185.4 L883.1 186.2 L882.4 185.9 L881.7 184.6 L881.0 182.9 L880.3 184.7 L879.6 185.9 L878.9 186.2 L878.2 185.3 L877.5 184.2 L876.8 183.6 L876.1 185.0 L875.4 185.8 L874.7 186.0 L874.0 185.0 L873.3 183.5 L872.6 182.2 L871.9 182.2 L871.2 182.2 L870.5 183.4 L869.8 185.2 L869.1 185.7 L868.4 186.0 L867.7 185.3 L867.0 183.6 L866.3 184.2 L865.6 185.2 L864.9 185.6 L864.2 185.5 L863.5 184.8 L862.8 183.1 L862.1 184.3 L861.4 186.0 L860.7 185.9 L860.0 185.7 L859.3 184.9 L858.6 182.2 L857.9 182.2 L857.2 182.2 L856.5 182.2 L855.8 184.5 L855.1 185.3 L854.4 185.6 L853.7 185.9 L853.0 184.6 L852.3 182.7 L851.6 184.6 L850.9 185.7 L850.2 185.5 L849.5 185.5 L848.8 184.0 L848.1 183.5 L847.4 185.2 L846.7 185.5 L846.0 186.0 L845.3 185.0 L844.6 183.7Z M844.6 198.4 L845.3 196.7 L846.0 196.5 L846.7 196.1 L847.4 196.5 L848.1 198.5 L848.8 197.5 L849.5 196.4 L850.2 195.7 L850.9 196.7 L851.6 197.0 L852.3 199.3 L853.0 197.3 L853.7 196.5 L854.4 195.6 L855.1 196.3 L855.8 197.4 L856.5 199.8 L857.2 199.8 L857.9 199.8 L858.6 199.8 L859.3 197.3 L860.0 196.3 L860.7 195.8 L861.4 196.3 L862.1 197.5 L862.8 199.0 L863.5 197.0 L864.2 196.5 L864.9 196.0 L865.6 196.7 L866.3 197.8 L867.0 198.2 L867.7 196.9 L868.4 196.1 L869.1 196.4 L869.8 196.5 L870.5 198.3 L871.2 199.8 L871.9 199.8 L872.6 199.8 L873.3 198.4 L874.0 197.0 L874.7 196.2 L875.4 196.0 L876.1 196.9 L876.8 198.3 L877.5 198.0 L878.2 196.7 L878.9 196.1 L879.6 196.6 L880.3 197.2 L881.0 199.1 L881.7 197.5 L882.4 196.0 L883.1 196.2 L883.8 196.5 L884.5 197.4 L885.2 199.8 L885.9 199.8 L886.6 199.8 L887.3 199.8 L888.0 197.6 L888.7 196.4 L889.4 196.4 L890.1 196.8 L890.8 197.3 L891.5 199.1 L892.2 197.3 L892.9 196.4 L893.6 196.1 L894.3 196.9 L895.0 197.8 L895.7 198.3 L896.4 196.5 L897.1 196.5 L897.8 196.3 L898.5 196.7 L899.2 198.3 L899.9 199.8 L900.6 199.8 L901.3 199.8 L902.0 198.5 L902.7 196.6 L903.4 196.5 L904.1 196.1 L904.8 197.1 L905.5 198.5 L906.2 197.8 L906.9 196.6 L907.6 195.7 L908.3 195.9 L909.0 197.1 L909.7 199.0 L910.4 197.5 L911.1 196.7 L911.8 196.1 L912.5 196.1 L913.2 197.5 L913.9 199.8 L914.6 199.8 L915.3 199.8 L916.0 199.8 L916.7 197.3 L917.4 196.7 L918.1 196.4 L918.8 196.0 L919.5 197.6 L920.2 199.2 L920.9 196.9 L921.6 196.0 L922.3 195.7 L923.0 196.3 L923.7 198.0 L924.4 198.4 L925.1 196.7 L925.8 196.3 L926.5 196.0 L927.2 196.9 L927.9 198.4 L928.6 199.8 L929.3 199.8 L930.0 199.8 L930.7 198.5 L931.4 196.8 L932.1 196.4 L932.8 195.9 L933.5 196.9 L934.2 198.3 L934.9 198.0 L935.6 196.6 L936.3 195.7 L937.0 195.9 L937.7 197.1 L938.4 199.0 L939.1 197.7 L939.8 196.1 L940.5 196.5 L941.2 196.6 L941.9 197.4 L942.6 199.8 L943.3 199.8 L944.0 199.8 L944.7 199.8 L945.4 197.8 L946.1 196.3 L946.8 195.7 L947.5 196.2 L948.2 197.2 L948.9 199.2 L949.6 197.1 L950.3 196.7 L951.0 196.5 L951.7 196.3 L952.4 197.6 L953.1 198.4 L953.8 196.7 L954.5 196.4 L955.2 196.5 L955.9 196.7 L955.9 205.3 L955.2 205.5 L954.5 205.6 L953.8 205.3 L953.1 203.6 L952.4 204.4 L951.7 205.7 L951.0 205.5 L950.3 205.3 L949.6 204.9 L948.9 202.8 L948.2 204.8 L947.5 205.8 L946.8 206.3 L946.1 205.7 L945.4 204.2 L944.7 202.2 L944.0 202.2 L943.3 202.2 L942.6 202.2 L941.9 204.6 L941.2 205.4 L940.5 205.5 L939.8 205.9 L939.1 204.3 L938.4 203.0 L937.7 204.9 L937.0 206.1 L936.3 206.3 L935.6 205.4 L934.9 204.0 L934.2 203.7 L933.5 205.1 L932.8 206.1 L932.1 205.6 L931.4 205.2 L930.7 203.5 L930.0 202.2 L929.3 202.2 L928.6 202.2 L927.9 203.6 L927.2 205.1 L926.5 206.0 L925.8 205.7 L925.1 205.3 L924.4 203.6 L923.7 204.0 L923.0 205.7 L922.3 206.3 L921.6 206.0 L920.9 205.1 L920.2 202.8 L919.5 204.4 L918.8 206.0 L918.1 205.6 L917.4 205.3 L916.7 204.7 L916.0 202.2 L915.3 202.2 L914.6 202.2 L913.9 202.2 L913.2 204.5 L912.5 205.9 L911.8 205.9 L911.1 205.3 L910.4 204.5 L909.7 203.0 L909.0 204.9 L908.3 206.1 L907.6 206.3 L906.9 205.4 L906.2 204.2 L905.5 203.5 L904.8 204.9 L904.1 205.9 L903.4 205.5 L902.7 205.4 L902.0 203.5 L901.3 202.2 L900.6 202.2 L899.9 202.2 L899.2 203.7 L898.5 205.3 L897.8 205.7 L897.1 205.5 L896.4 205.5 L895.7 203.7 L895.0 204.2 L894.3 205.1 L893.6 205.9 L892.9 205.6 L892.2 204.7 L891.5 202.9 L890.8 204.7 L890.1 205.2 L889.4 205.6 L888.7 205.6 L888.0 204.4 L887.3 202.2 L886.6 202.2 L885.9 202.2 L885.2 202.2 L884.5 204.6 L883.8 205.5 L883.1 205.8 L882.4 206.0 L881.7 204.5 L881.0 202.9 L880.3 204.8 L879.6 205.4 L878.9 205.9 L878.2 205.3 L877.5 204.0 L876.8 203.7 L876.1 205.1 L875.4 206.0 L874.7 205.8 L874.0 205.0 L873.3 203.6 L872.6 202.2 L871.9 202.2 L871.2 202.2 L870.5 203.7 L869.8 205.5 L869.1 205.6 L868.4 205.9 L867.7 205.1 L867.0 203.8 L866.3 204.2 L865.6 205.3 L864.9 206.0 L864.2 205.5 L863.5 205.0 L862.8 203.0 L862.1 204.5 L861.4 205.7 L860.7 206.2 L860.0 205.7 L859.3 204.7 L858.6 202.2 L857.9 202.2 L857.2 202.2 L856.5 202.2 L855.8 204.6 L855.1 205.7 L854.4 206.4 L853.7 205.5 L853.0 204.7 L852.3 202.7 L851.6 205.0 L850.9 205.3 L850.2 206.3 L849.5 205.6 L848.8 204.5 L848.1 203.5 L847.4 205.5 L846.7 205.9 L846.0 205.5 L845.3 205.3 L844.6 203.6Z M1073.3 179.8 L1074.0 179.8 L1074.7 177.4 L1075.4 176.5 L1076.1 176.4 L1076.8 176.1 L1077.5 177.8 L1078.2 178.9 L1078.9 176.8 L1079.6 176.6 L1080.3 176.0 L1081.0 176.5 L1081.7 178.1 L1082.4 178.3 L1083.1 176.6 L1083.8 176.2 L1084.5 176.0 L1085.2 177.1 L1085.9 178.5 L1086.6 179.8 L1087.3 179.8 L1088.0 179.8 L1088.7 178.5 L1089.4 176.8 L1090.1 175.8 L1090.8 176.1 L1091.5 176.6 L1092.2 178.4 L1092.9 177.7 L1093.6 176.9 L1094.3 176.3 L1095.0 176.1 L1095.7 177.0 L1096.4 179.2 L1097.1 177.6 L1097.8 176.6 L1098.5 176.3 L1099.2 176.6 L1099.9 177.3 L1100.6 179.8 L1101.3 179.8 L1102.0 179.8 L1102.7 179.8 L1103.4 177.6 L1104.1 176.1 L1104.8 175.7 L1105.5 176.8 L1106.2 177.5 L1106.9 179.0 L1107.6 177.4 L1108.3 176.3 L1109.0 175.7 L1109.7 176.9 L1110.4 177.8 L1111.1 178.5 L1111.8 176.7 L1112.5 175.8 L1113.2 176.4 L1113.9 177.2 L1114.6 178.5 L1115.3 179.8 L1116.0 179.8 L1116.7 179.8 L1117.4 178.4 L1118.1 177.2 L1118.8 176.5 L1119.5 176.1 L1120.2 176.5 L1120.9 178.4 L1121.6 177.9 L1122.3 176.5 L1123.0 176.4 L1123.7 176.2 L1124.4 177.3 L1125.1 179.0 L1125.8 177.2 L1126.5 176.8 L1127.2 176.0 L1127.9 176.3 L1128.6 177.6 L1129.3 179.8 L1130.0 179.8 L1130.7 179.8 L1131.4 179.8 L1132.1 177.6 L1132.8 176.0 L1133.5 175.6 L1134.2 176.7 L1134.9 177.3 L1135.6 179.1 L1136.3 177.3 L1137.0 176.2 L1137.7 176.5 L1138.4 176.7 L1139.1 177.7 L1139.8 178.4 L1140.5 176.6 L1141.2 176.5 L1141.9 176.3 L1142.6 176.5 L1143.3 178.3 L1144.0 179.8 L1144.7 179.8 L1145.4 179.8 L1146.1 178.5 L1146.8 176.9 L1147.5 175.7 L1148.2 176.1 L1148.9 177.1 L1149.6 178.2 L1150.3 178.0 L1151.0 176.7 L1151.7 176.3 L1152.4 176.3 L1153.1 177.2 L1153.8 179.0 L1154.5 177.4 L1155.2 176.7 L1155.9 175.8 L1156.6 176.8 L1157.3 177.2 L1158.0 179.8 L1158.7 179.8 L1159.4 179.8 L1160.1 179.8 L1160.8 177.4 L1161.5 176.4 L1162.2 175.9 L1162.9 176.6 L1163.6 177.2 L1164.3 179.3 L1165.0 177.3 L1165.7 175.9 L1166.4 176.2 L1167.1 176.6 L1167.8 177.6 L1168.5 178.5 L1169.2 176.7 L1169.9 176.4 L1170.6 175.8 L1171.3 176.9 L1172.0 178.4 L1172.7 179.8 L1173.4 179.8 L1174.1 179.8 L1174.8 178.4 L1175.5 177.1 L1176.2 175.8 L1176.9 175.7 L1177.6 176.7 L1178.3 178.4 L1179.0 178.2 L1179.7 176.9 L1180.4 176.2 L1181.1 176.1 L1181.8 176.7 L1182.5 178.9 L1183.2 177.7 L1183.9 176.4 L1184.6 176.4 L1185.3 176.7 L1186.0 177.3 L1186.0 184.7 L1185.3 185.3 L1184.6 185.6 L1183.9 185.6 L1183.2 184.3 L1182.5 183.1 L1181.8 185.3 L1181.1 185.9 L1180.4 185.8 L1179.7 185.1 L1179.0 183.8 L1178.3 183.6 L1177.6 185.3 L1176.9 186.3 L1176.2 186.2 L1175.5 184.9 L1174.8 183.6 L1174.1 182.2 L1173.4 182.2 L1172.7 182.2 L1172.0 183.6 L1171.3 185.1 L1170.6 186.2 L1169.9 185.6 L1169.2 185.3 L1168.5 183.5 L1167.8 184.4 L1167.1 185.4 L1166.4 185.8 L1165.7 186.1 L1165.0 184.7 L1164.3 182.7 L1163.6 184.8 L1162.9 185.4 L1162.2 186.1 L1161.5 185.6 L1160.8 184.6 L1160.1 182.2 L1159.4 182.2 L1158.7 182.2 L1158.0 182.2 L1157.3 184.8 L1156.6 185.2 L1155.9 186.2 L1155.2 185.3 L1154.5 184.6 L1153.8 183.0 L1153.1 184.8 L1152.4 185.7 L1151.7 185.7 L1151.0 185.3 L1150.3 184.0 L1149.6 183.8 L1148.9 184.9 L1148.2 185.9 L1147.5 186.3 L1146.8 185.1 L1146.1 183.5 L1145.4 182.2 L1144.7 182.2 L1144.0 182.2 L1143.3 183.7 L1142.6 185.5 L1141.9 185.7 L1141.2 185.5 L1140.5 185.4 L1139.8 183.6 L1139.1 184.3 L1138.4 185.3 L1137.7 185.5 L1137.0 185.8 L1136.3 184.7 L1135.6 182.9 L1134.9 184.7 L1134.2 185.3 L1133.5 186.4 L1132.8 186.0 L1132.1 184.4 L1131.4 182.2 L1130.7 182.2 L1130.0 182.2 L1129.3 182.2 L1128.6 184.4 L1127.9 185.7 L1127.2 186.0 L1126.5 185.2 L1125.8 184.8 L1125.1 183.0 L1124.4 184.7 L1123.7 185.8 L1123.0 185.6 L1122.3 185.5 L1121.6 184.1 L1120.9 183.6 L1120.2 185.5 L1119.5 185.9 L1118.8 185.5 L1118.1 184.8 L1117.4 183.6 L1116.7 182.2 L1116.0 182.2 L1115.3 182.2 L1114.6 183.5 L1113.9 184.8 L1113.2 185.6 L1112.5 186.2 L1111.8 185.3 L1111.1 183.5 L1110.4 184.2 L1109.7 185.1 L1109.0 186.3 L1108.3 185.7 L1107.6 184.6 L1106.9 183.0 L1106.2 184.5 L1105.5 185.2 L1104.8 186.3 L1104.1 185.9 L1103.4 184.4 L1102.7 182.2 L1102.0 182.2 L1101.3 182.2 L1100.6 182.2 L1099.9 184.7 L1099.2 185.4 L1098.5 185.7 L1097.8 185.4 L1097.1 184.4 L1096.4 182.8 L1095.7 185.0 L1095.0 185.9 L1094.3 185.7 L1093.6 185.1 L1092.9 184.3 L1092.2 183.6 L1091.5 185.4 L1090.8 185.9 L1090.1 186.2 L1089.4 185.2 L1088.7 183.5 L1088.0 182.2 L1087.3 182.2 L1086.6 182.2 L1085.9 183.5 L1085.2 184.9 L1084.5 186.0 L1083.8 185.8 L1083.1 185.4 L1082.4 183.7 L1081.7 183.9 L1081.0 185.5 L1080.3 186.0 L1079.6 185.4 L1078.9 185.2 L1078.2 183.1 L1077.5 184.2 L1076.8 185.9 L1076.1 185.6 L1075.4 185.5 L1074.7 184.6 L1074.0 182.2 L1073.3 182.2Z M1073.3 199.8 L1074.0 199.8 L1074.7 197.6 L1075.4 196.0 L1076.1 195.6 L1076.8 196.8 L1077.5 197.3 L1078.2 198.9 L1078.9 196.9 L1079.6 196.6 L1080.3 195.8 L1081.0 196.7 L1081.7 197.8 L1082.4 198.3 L1083.1 196.6 L1083.8 195.9 L1084.5 196.3 L1085.2 196.7 L1085.9 198.3 L1086.6 199.8 L1087.3 199.8 L1088.0 199.8 L1088.7 198.2 L1089.4 196.5 L1090.1 196.5 L1090.8 196.0 L1091.5 196.6 L1092.2 198.5 L1092.9 198.0 L1093.6 196.4 L1094.3 196.0 L1095.0 195.9 L1095.7 197.3 L1096.4 199.2 L1097.1 197.4 L1097.8 196.1 L1098.5 195.9 L1099.2 196.7 L1099.9 197.6 L1100.6 199.8 L1101.3 199.8 L1102.0 199.8 L1102.7 199.8 L1103.4 197.7 L1104.1 196.5 L1104.8 195.8 L1105.5 196.4 L1106.2 197.4 L1106.9 199.1 L1107.6 197.1 L1108.3 195.8 L1109.0 196.2 L1109.7 196.7 L1110.4 197.8 L1111.1 198.2 L1111.8 197.1 L1112.5 196.0 L1113.2 196.0 L1113.9 196.8 L1114.6 198.4 L1115.3 199.8 L1116.0 199.8 L1116.7 199.8 L1117.4 198.3 L1118.1 196.6 L1118.8 196.4 L1119.5 196.4 L1120.2 197.1 L1120.9 198.3 L1121.6 198.0 L1122.3 196.6 L1123.0 196.0 L1123.7 196.3 L1124.4 197.0 L1125.1 199.0 L1125.8 197.4 L1126.5 196.2 L1127.2 196.2 L1127.9 196.8 L1128.6 197.2 L1129.3 199.8 L1130.0 199.8 L1130.7 199.8 L1131.4 199.8 L1132.1 197.6 L1132.8 196.5 L1133.5 196.4 L1134.2 196.3 L1134.9 197.2 L1135.6 199.2 L1136.3 197.1 L1137.0 196.6 L1137.7 196.1 L1138.4 196.8 L1139.1 197.7 L1139.8 198.3 L1140.5 196.8 L1141.2 196.3 L1141.9 195.9 L1142.6 196.6 L1143.3 198.5 L1144.0 199.8 L1144.7 199.8 L1145.4 199.8 L1146.1 198.5 L1146.8 196.7 L1147.5 195.8 L1148.2 196.4 L1148.9 196.5 L1149.6 198.4 L1150.3 197.9 L1151.0 196.4 L1151.7 195.8 L1152.4 196.4 L1153.1 196.9 L1153.8 199.0 L1154.5 197.6 L1155.2 196.0 L1155.9 196.5 L1156.6 196.0 L1157.3 197.7 L1158.0 199.8 L1158.7 199.8 L1159.4 199.8 L1160.1 199.8 L1160.8 197.4 L1161.5 196.6 L1162.2 196.2 L1162.9 196.8 L1163.6 197.3 L1164.3 199.2 L1165.0 197.0 L1165.7 196.5 L1166.4 196.3 L1167.1 196.9 L1167.8 197.9 L1168.5 198.4 L1169.2 197.1 L1169.9 196.5 L1170.6 196.5 L1171.3 197.1 L1172.0 198.4 L1172.7 199.8 L1173.4 199.8 L1174.1 199.8 L1174.8 198.5 L1175.5 196.8 L1176.2 196.1 L1176.9 196.3 L1177.6 196.6 L1178.3 198.3 L1179.0 197.9 L1179.7 196.5 L1180.4 195.9 L1181.1 196.1 L1181.8 197.3 L1182.5 198.8 L1183.2 197.5 L1183.9 196.8 L1184.6 196.1 L1185.3 196.6 L1186.0 197.5 L1186.0 204.5 L1185.3 205.4 L1184.6 205.9 L1183.9 205.2 L1183.2 204.5 L1182.5 203.2 L1181.8 204.7 L1181.1 205.9 L1180.4 206.1 L1179.7 205.5 L1179.0 204.1 L1178.3 203.7 L1177.6 205.4 L1176.9 205.7 L1176.2 205.9 L1175.5 205.2 L1174.8 203.5 L1174.1 202.2 L1173.4 202.2 L1172.7 202.2 L1172.0 203.6 L1171.3 204.9 L1170.6 205.5 L1169.9 205.5 L1169.2 204.9 L1168.5 203.6 L1167.8 204.1 L1167.1 205.1 L1166.4 205.7 L1165.7 205.5 L1165.0 205.0 L1164.3 202.8 L1163.6 204.7 L1162.9 205.2 L1162.2 205.8 L1161.5 205.4 L1160.8 204.6 L1160.1 202.2 L1159.4 202.2 L1158.7 202.2 L1158.0 202.2 L1157.3 204.3 L1156.6 206.0 L1155.9 205.5 L1155.2 206.0 L1154.5 204.4 L1153.8 203.0 L1153.1 205.1 L1152.4 205.6 L1151.7 206.2 L1151.0 205.6 L1150.3 204.1 L1149.6 203.6 L1148.9 205.5 L1148.2 205.6 L1147.5 206.2 L1146.8 205.3 L1146.1 203.5 L1145.4 202.2 L1144.7 202.2 L1144.0 202.2 L1143.3 203.5 L1142.6 205.4 L1141.9 206.1 L1141.2 205.7 L1140.5 205.2 L1139.8 203.7 L1139.1 204.3 L1138.4 205.2 L1137.7 205.9 L1137.0 205.4 L1136.3 204.9 L1135.6 202.8 L1134.9 204.8 L1134.2 205.7 L1133.5 205.6 L1132.8 205.5 L1132.1 204.4 L1131.4 202.2 L1130.7 202.2 L1130.0 202.2 L1129.3 202.2 L1128.6 204.8 L1127.9 205.2 L1127.2 205.8 L1126.5 205.8 L1125.8 204.6 L1125.1 203.0 L1124.4 205.0 L1123.7 205.7 L1123.0 206.0 L1122.3 205.4 L1121.6 204.0 L1120.9 203.7 L1120.2 204.9 L1119.5 205.6 L1118.8 205.6 L1118.1 205.4 L1117.4 203.7 L1116.7 202.2 L1116.0 202.2 L1115.3 202.2 L1114.6 203.6 L1113.9 205.2 L1113.2 206.0 L1112.5 206.0 L1111.8 204.9 L1111.1 203.8 L1110.4 204.2 L1109.7 205.3 L1109.0 205.8 L1108.3 206.2 L1107.6 204.9 L1106.9 202.9 L1106.2 204.6 L1105.5 205.6 L1104.8 206.2 L1104.1 205.5 L1103.4 204.3 L1102.7 202.2 L1102.0 202.2 L1101.3 202.2 L1100.6 202.2 L1099.9 204.4 L1099.2 205.3 L1098.5 206.1 L1097.8 205.9 L1097.1 204.6 L1096.4 202.8 L1095.7 204.7 L1095.0 206.1 L1094.3 206.0 L1093.6 205.6 L1092.9 204.0 L1092.2 203.5 L1091.5 205.4 L1090.8 206.0 L1090.1 205.5 L1089.4 205.5 L1088.7 203.8 L1088.0 202.2 L1087.3 202.2 L1086.6 202.2 L1085.9 203.7 L1085.2 205.3 L1084.5 205.7 L1083.8 206.1 L1083.1 205.4 L1082.4 203.7 L1081.7 204.2 L1081.0 205.3 L1080.3 206.2 L1079.6 205.4 L1078.9 205.1 L1078.2 203.1 L1077.5 204.7 L1076.8 205.2 L1076.1 206.4 L1075.4 206.0 L1074.7 204.4 L1074.0 202.2 L1073.3 202.2Z M1217.0 179.8 L1217.7 179.4 L1218.4 177.4 L1219.1 176.6 L1219.8 176.3 L1220.5 176.3 L1221.2 177.8 L1221.9 178.6 L1222.6 176.8 L1223.3 176.1 L1224.0 175.7 L1224.7 176.8 L1225.4 178.2 L1226.1 177.9 L1226.8 176.9 L1227.5 175.7 L1228.2 176.3 L1228.9 177.1 L1229.6 178.8 L1230.3 179.8 L1231.0 179.8 L1231.7 179.8 L1232.4 178.2 L1233.1 176.5 L1233.8 175.8 L1234.5 176.3 L1235.2 176.7 L1235.9 178.8 L1236.6 177.4 L1237.3 176.5 L1238.0 176.1 L1238.7 176.5 L1239.4 177.6 L1240.1 179.4 L1240.8 176.9 L1241.5 176.3 L1242.2 176.1 L1242.9 176.2 L1243.6 177.7 L1244.3 179.8 L1245.0 179.8 L1245.7 179.8 L1246.4 179.6 L1247.1 177.3 L1247.8 176.5 L1248.5 175.7 L1249.2 176.8 L1249.9 177.5 L1250.6 178.6 L1251.3 176.6 L1252.0 175.8 L1252.7 176.0 L1253.4 177.1 L1254.1 178.3 L1254.8 178.0 L1255.5 176.4 L1256.2 176.5 L1256.9 176.3 L1257.6 177.3 L1258.3 178.8 L1259.0 179.8 L1259.7 179.8 L1260.4 179.8 L1261.1 178.3 L1261.8 176.8 L1262.5 176.1 L1263.2 176.4 L1263.9 176.8 L1264.6 178.8 L1265.3 177.8 L1266.0 176.7 L1266.7 176.1 L1267.4 176.1 L1268.1 177.4 L1268.8 179.6 L1269.5 177.0 L1270.2 176.6 L1270.9 175.7 L1271.6 176.4 L1272.3 177.5 L1273.0 179.8 L1273.7 179.8 L1274.4 179.8 L1275.1 179.8 L1275.8 177.2 L1276.5 176.4 L1277.2 176.4 L1277.9 176.8 L1278.6 177.8 L1279.3 178.8 L1280.0 177.2 L1280.7 176.4 L1281.4 176.0 L1282.1 176.5 L1282.8 178.0 L1283.5 177.9 L1284.2 177.0 L1284.9 175.8 L1285.6 176.5 L1286.3 177.3 L1287.0 178.7 L1287.7 179.8 L1288.4 179.8 L1289.1 179.8 L1289.8 178.1 L1290.5 177.1 L1291.2 176.4 L1291.9 176.3 L1292.6 176.7 L1293.3 178.6 L1294.0 177.7 L1294.7 176.6 L1295.4 176.4 L1296.1 176.0 L1296.8 177.0 L1297.5 179.6 L1298.2 177.3 L1298.9 176.4 L1299.6 176.2 L1300.3 176.3 L1301.0 177.5 L1301.7 179.8 L1302.4 179.8 L1303.1 179.8 L1303.8 179.8 L1304.5 177.4 L1305.2 176.0 L1305.9 175.9 L1306.6 176.7 L1307.3 177.4 L1307.3 184.6 L1306.6 185.3 L1305.9 186.1 L1305.2 186.0 L1304.5 184.6 L1303.8 182.2 L1303.1 182.2 L1302.4 182.2 L1301.7 182.2 L1301.0 184.5 L1300.3 185.7 L1299.6 185.8 L1298.9 185.6 L1298.2 184.7 L1297.5 182.4 L1296.8 185.0 L1296.1 186.0 L1295.4 185.6 L1294.7 185.4 L1294.0 184.3 L1293.3 183.4 L1292.6 185.3 L1291.9 185.7 L1291.2 185.6 L1290.5 184.9 L1289.8 183.9 L1289.1 182.2 L1288.4 182.2 L1287.7 182.2 L1287.0 183.3 L1286.3 184.7 L1285.6 185.5 L1284.9 186.2 L1284.2 185.0 L1283.5 184.1 L1282.8 184.0 L1282.1 185.5 L1281.4 186.0 L1280.7 185.6 L1280.0 184.8 L1279.3 183.2 L1278.6 184.2 L1277.9 185.2 L1277.2 185.6 L1276.5 185.6 L1275.8 184.8 L1275.1 182.2 L1274.4 182.2 L1273.7 182.2 L1273.0 182.2 L1272.3 184.5 L1271.6 185.6 L1270.9 186.3 L1270.2 185.4 L1269.5 185.0 L1268.8 182.4 L1268.1 184.6 L1267.4 185.9 L1266.7 185.9 L1266.0 185.3 L1265.3 184.2 L1264.6 183.2 L1263.9 185.2 L1263.2 185.6 L1262.5 185.9 L1261.8 185.2 L1261.1 183.7 L1260.4 182.2 L1259.7 182.2 L1259.0 182.2 L1258.3 183.2 L1257.6 184.7 L1256.9 185.7 L1256.2 185.5 L1255.5 185.6 L1254.8 184.0 L1254.1 183.7 L1253.4 184.9 L1252.7 186.0 L1252.0 186.2 L1251.3 185.4 L1250.6 183.4 L1249.9 184.5 L1249.2 185.2 L1248.5 186.3 L1247.8 185.5 L1247.1 184.7 L1246.4 182.4 L1245.7 182.2 L1245.0 182.2 L1244.3 182.2 L1243.6 184.3 L1242.9 185.8 L1242.2 185.9 L1241.5 185.7 L1240.8 185.1 L1240.1 182.6 L1239.4 184.4 L1238.7 185.5 L1238.0 185.9 L1237.3 185.5 L1236.6 184.6 L1235.9 183.2 L1235.2 185.3 L1234.5 185.7 L1233.8 186.2 L1233.1 185.5 L1232.4 183.8 L1231.7 182.2 L1231.0 182.2 L1230.3 182.2 L1229.6 183.2 L1228.9 184.9 L1228.2 185.7 L1227.5 186.3 L1226.8 185.1 L1226.1 184.1 L1225.4 183.8 L1224.7 185.2 L1224.0 186.3 L1223.3 185.9 L1222.6 185.2 L1221.9 183.4 L1221.2 184.2 L1220.5 185.7 L1219.8 185.7 L1219.1 185.4 L1218.4 184.6 L1217.7 182.6 L1217.0 182.2Z M1217.0 199.8 L1217.7 199.4 L1218.4 197.0 L1219.1 196.4 L1219.8 196.5 L1220.5 196.5 L1221.2 197.6 L1221.9 198.5 L1222.6 197.2 L1223.3 196.2 L1224.0 196.4 L1224.7 197.1 L1225.4 198.0 L1226.1 197.9 L1226.8 196.7 L1227.5 195.8 L1228.2 196.0 L1228.9 197.4 L1229.6 198.9 L1230.3 199.8 L1231.0 199.8 L1231.7 199.8 L1232.4 198.1 L1233.1 197.0 L1233.8 195.9 L1234.5 195.9 L1235.2 197.0 L1235.9 198.7 L1236.6 197.6 L1237.3 196.5 L1238.0 196.0 L1238.7 196.1 L1239.4 197.5 L1240.1 199.4 L1240.8 197.4 L1241.5 196.2 L1242.2 195.9 L1242.9 196.6 L1243.6 197.9 L1244.3 199.8 L1245.0 199.8 L1245.7 199.8 L1246.4 199.6 L1247.1 197.1 L1247.8 196.0 L1248.5 196.4 L1249.2 196.1 L1249.9 197.7 L1250.6 198.7 L1251.3 197.1 L1252.0 196.5 L1252.7 195.8 L1253.4 196.4 L1254.1 198.0 L1254.8 197.9 L1255.5 196.6 L1256.2 196.2 L1256.9 196.1 L1257.6 197.3 L1258.3 198.9 L1259.0 199.8 L1259.7 199.8 L1260.4 199.8 L1261.1 198.1 L1261.8 196.8 L1262.5 195.7 L1263.2 196.0 L1263.9 197.3 L1264.6 198.7 L1265.3 197.9 L1266.0 196.1 L1266.7 195.9 L1267.4 196.1 L1268.1 197.4 L1268.8 199.6 L1269.5 197.1 L1270.2 196.1 L1270.9 196.2 L1271.6 196.7 L1272.3 197.5 L1273.0 199.8 L1273.7 199.8 L1274.4 199.8 L1275.1 199.8 L1275.8 197.4 L1276.5 196.2 L1277.2 195.7 L1277.9 196.3 L1278.6 197.8 L1279.3 198.6 L1280.0 196.6 L1280.7 195.9 L1281.4 195.9 L1282.1 197.0 L1282.8 198.3 L1283.5 198.0 L1284.2 197.0 L1284.9 195.8 L1285.6 196.4 L1286.3 197.0 L1287.0 198.8 L1287.7 199.8 L1288.4 199.8 L1289.1 199.8 L1289.8 198.1 L1290.5 196.6 L1291.2 196.3 L1291.9 196.2 L1292.6 196.9 L1293.3 198.6 L1294.0 197.5 L1294.7 196.6 L1295.4 196.5 L1296.1 195.9 L1296.8 197.1 L1297.5 199.6 L1298.2 197.2 L1298.9 196.7 L1299.6 195.6 L1300.3 196.7 L1301.0 197.5 L1301.7 199.8 L1302.4 199.8 L1303.1 199.8 L1303.8 199.8 L1304.5 197.4 L1305.2 196.2 L1305.9 196.0 L1306.6 196.1 L1307.3 197.6 L1307.3 204.4 L1306.6 205.9 L1305.9 206.0 L1305.2 205.8 L1304.5 204.6 L1303.8 202.2 L1303.1 202.2 L1302.4 202.2 L1301.7 202.2 L1301.0 204.5 L1300.3 205.3 L1299.6 206.4 L1298.9 205.3 L1298.2 204.8 L1297.5 202.4 L1296.8 204.9 L1296.1 206.1 L1295.4 205.5 L1294.7 205.4 L1294.0 204.5 L1293.3 203.4 L1292.6 205.1 L1291.9 205.8 L1291.2 205.7 L1290.5 205.4 L1289.8 203.9 L1289.1 202.2 L1288.4 202.2 L1287.7 202.2 L1287.0 203.2 L1286.3 205.0 L1285.6 205.6 L1284.9 206.2 L1284.2 205.0 L1283.5 204.0 L1282.8 203.7 L1282.1 205.0 L1281.4 206.1 L1280.7 206.1 L1280.0 205.4 L1279.3 203.4 L1278.6 204.2 L1277.9 205.7 L1277.2 206.3 L1276.5 205.8 L1275.8 204.6 L1275.1 202.2 L1274.4 202.2 L1273.7 202.2 L1273.0 202.2 L1272.3 204.5 L1271.6 205.3 L1270.9 205.8 L1270.2 205.9 L1269.5 204.9 L1268.8 202.4 L1268.1 204.6 L1267.4 205.9 L1266.7 206.1 L1266.0 205.9 L1265.3 204.1 L1264.6 203.3 L1263.9 204.7 L1263.2 206.0 L1262.5 206.3 L1261.8 205.2 L1261.1 203.9 L1260.4 202.2 L1259.7 202.2 L1259.0 202.2 L1258.3 203.1 L1257.6 204.7 L1256.9 205.9 L1256.2 205.8 L1255.5 205.4 L1254.8 204.1 L1254.1 204.0 L1253.4 205.6 L1252.7 206.2 L1252.0 205.5 L1251.3 204.9 L1250.6 203.3 L1249.9 204.3 L1249.2 205.9 L1248.5 205.6 L1247.8 206.0 L1247.1 204.9 L1246.4 202.4 L1245.7 202.2 L1245.0 202.2 L1244.3 202.2 L1243.6 204.1 L1242.9 205.4 L1242.2 206.1 L1241.5 205.8 L1240.8 204.6 L1240.1 202.6 L1239.4 204.5 L1238.7 205.9 L1238.0 206.0 L1237.3 205.5 L1236.6 204.4 L1235.9 203.3 L1235.2 205.0 L1234.5 206.1 L1233.8 206.1 L1233.1 205.0 L1232.4 203.9 L1231.7 202.2 L1231.0 202.2 L1230.3 202.2 L1229.6 203.1 L1228.9 204.6 L1228.2 206.0 L1227.5 206.2 L1226.8 205.3 L1226.1 204.1 L1225.4 204.0 L1224.7 204.9 L1224.0 205.6 L1223.3 205.8 L1222.6 204.8 L1221.9 203.5 L1221.2 204.4 L1220.5 205.5 L1219.8 205.5 L1219.1 205.6 L1218.4 205.0 L1217.7 202.6 L1217.0 202.2Z" fill="#1e1e28"/><path d="M957.5 181H1072M957.5 201H1072" stroke="#2a2a40" stroke-width="1"/></svg>
<div style="left:10.00px;top:215.00px;width:489.00px;height:3.00px;background:#91c8fa;"></div>
<div style="left:39.00px;top:224.00px;width:1148.00px;height:2.00px;background:#91c8fa;"></div>
<div style="left:1187.00px;top:227.00px;width:122.00px;height:3.00px;background:#91c8fa;"></div>
<div style="left:1216.00px;top:219.50px;width:93.00px;height:3.00px;background:#91c8fa;"></div>
<div style="left:1216.00px;top:223.50px;width:93.00px;height:2.50px;background:#91c8fa;"></div>
<div style="left:270.00px;top:233.00px;width:687.00px;height:57.00px;background:#5ffde2;"></div>
<div style="left:270.00px;top:250px;width:687.00px;height:40px;background-image:linear-gradient(to right,rgba(0,0,0,0.13) 1px,transparent 1px);background-size:14.360px 100%;background-position:13.12px 0"></div>
<div style="left:270.00px;top:250.00px;width:687.00px;height:1.00px;background:rgba(0,0,0,0.35);"></div>
<div style="left:499.00px;top:233.00px;width:1.00px;height:57.00px;background:rgba(0,0,30,0.55);"></div>
<div style="left:728.00px;top:233.00px;width:1.00px;height:57.00px;background:rgba(0,0,30,0.55);"></div>
<div style="left:1187.00px;top:233.00px;width:122.00px;height:57.00px;background:#5ffde2;"></div>
<div style="left:1187.00px;top:250px;width:122.00px;height:40px;background-image:linear-gradient(to right,rgba(0,0,0,0.13) 1px,transparent 1px);background-size:14.360px 100%;background-position:0.80px 0"></div>
<div style="left:1187.00px;top:250.00px;width:122.00px;height:1.00px;background:rgba(0,0,0,0.35);"></div>
<svg style="left:0;top:0;" width="1564" height="960"><path d="M272.0 258h5 M286.4 284h6 M293.5 258h2 M300.7 278.5h6 M315.1 284h6 M336.6 258h5 M343.8 278.5h6 M358.2 284h6 M372.5 258h2 M379.7 278.5h6 M386.9 258h5 M401.2 284h6 M408.4 258h2 M415.6 278.5h6 M430.0 284h6 M451.5 258h5 M458.7 278.5h6 M473.0 284h6 M487.4 258h2 M494.6 278.5h6 M501.8 258h5 M516.1 284h6 M523.3 258h2 M530.5 278.5h6 M544.8 284h6 M566.4 258h5 M573.6 278.5h6 M587.9 284h6 M602.3 258h2 M609.5 278.5h6 M616.6 258h5 M631.0 284h6 M638.2 258h2 M645.4 278.5h6 M659.7 284h6 M681.3 258h5 M688.4 278.5h6 M702.8 284h6 M717.2 258h2 M724.3 278.5h6 M731.5 258h5 M745.9 284h6 M753.1 258h2 M760.2 278.5h6 M774.6 284h6 M796.1 258h5 M803.3 278.5h6 M817.7 284h6 M832.0 258h2 M839.2 278.5h6 M846.4 258h5 M860.8 284h6 M867.9 258h2 M875.1 278.5h6 M889.5 284h6 M911.0 258h5 M918.2 278.5h6 M932.6 284h6 M946.9 258h2 M954.1 278.5h6 M1189.0 258h5 M1203.4 284h6 M1210.5 258h2 M1217.7 278.5h6 M1232.1 284h6 M1253.6 258h5 M1260.8 278.5h6 M1275.2 284h6 M1289.5 258h2 M1296.7 278.5h6 M1303.9 258h5" stroke="#1b3a33" stroke-width="2" fill="none"/></svg>
<div style="left:470.00px;top:292.00px;width:29.00px;height:19.00px;background:#5ffde2;"></div>
<div style="left:700.00px;top:292.00px;width:28.00px;height:19.00px;background:#5ffde2;"></div>
<div style="left:929.00px;top:292.00px;width:28.00px;height:19.00px;background:#5ffde2;"></div>
<div style="left:499.00px;top:313.00px;width:229.00px;height:38.00px;background:#ecfaa7;"></div>
<div style="left:499.00px;top:330px;width:229.00px;height:21px;background-image:linear-gradient(to right,rgba(0,0,0,0.13) 1px,transparent 1px);background-size:14.360px 100%;background-position:13.88px 0"></div>
<div style="left:499.00px;top:330.00px;width:229.00px;height:1.00px;background:rgba(0,0,0,0.35);"></div>
<div style="left:499.00px;top:337.00px;width:229.00px;height:8.00px;background:#24261a;"></div>
<div style="left:270.00px;top:353.00px;width:85.00px;height:56.00px;background:#f8f07b;"></div>
<div style="left:270.00px;top:370px;width:85.00px;height:39px;background-image:linear-gradient(to right,rgba(0,0,0,0.13) 1px,transparent 1px);background-size:14.360px 100%;background-position:13.12px 0"></div>
<div style="left:270.00px;top:370.00px;width:85.00px;height:1.00px;background:rgba(0,0,0,0.35);"></div>
<div style="left:499.00px;top:353.00px;width:114.00px;height:56.00px;background:#f8f07b;"></div>
<div style="left:499.00px;top:370px;width:114.00px;height:39px;background-image:linear-gradient(to right,rgba(0,0,0,0.13) 1px,transparent 1px);background-size:14.360px 100%;background-position:13.88px 0"></div>
<div style="left:499.00px;top:370.00px;width:114.00px;height:1.00px;background:rgba(0,0,0,0.35);"></div>
<svg style="left:0;top:0;" width="1564" height="960"><path d="M271 386h5 M278 400h6 M290 396.5h6 M298 400h6 M313 386h3 M320 396.5h6 M338 400h6 M348 396.5h6 M500 382h57 M500 385.5h57 M500 389h57 M557 384h27.5 M584.5 380.5h27.5" stroke="#2a2810" stroke-width="1.5" fill="none"/></svg>
<div style="left:270.00px;top:424.00px;width:687.00px;height:5.00px;background:#f0a274;"></div>
<div style="left:499.00px;top:419.00px;width:229.00px;height:4.00px;background:#e6956b;"></div>
<div style="left:728.00px;top:414.00px;width:57.00px;height:4.00px;background:#e6956b;"></div>
<div style="left:843.00px;top:414.00px;width:114.00px;height:4.00px;background:#e6956b;"></div>
<div style="left:728.00px;top:419.00px;width:229.00px;height:4.00px;background:#e6956b;"></div>
<div style="left:957.00px;top:414.00px;width:230.00px;height:4.00px;background:#e6956b;"></div>
<div style="left:1187.00px;top:419.00px;width:122.00px;height:4.00px;background:#e6956b;"></div>
<div style="left:499.00px;top:423.00px;width:458.00px;height:1.00px;background:rgba(80,30,10,0.5);"></div>
<div style="left:10.00px;top:433.00px;width:260.00px;height:56.00px;background:#fd8f9f;"></div>
<div style="left:10.00px;top:450px;width:260.00px;height:39px;background-image:linear-gradient(to right,rgba(0,0,0,0.13) 1px,transparent 1px);background-size:14.360px 100%;background-position:0.28px 0"></div>
<div style="left:10.00px;top:450.00px;width:260.00px;height:1.00px;background:rgba(0,0,0,0.35);"></div>
<div style="left:39.00px;top:433.00px;width:1.00px;height:56.00px;background:rgba(0,0,30,0.55);"></div>
<svg style="left:14px;top:444px" width="12" height="4"><circle cx="1.5" cy="2" r="1.1" fill="#6a2030"/><circle cx="5" cy="2" r="1.1" fill="#6a2030"/><circle cx="8.5" cy="2" r="1.1" fill="#6a2030"/></svg>
<div style="left:10.00px;top:459.00px;width:260.00px;height:1.50px;background:#4a1020;"></div>
<div style="left:10.00px;top:479.00px;width:260.00px;height:1.50px;background:#4a1020;"></div>
<div style="left:499.00px;top:433.00px;width:229.00px;height:56.00px;background:#fd8f9f;"></div>
<div style="left:499.00px;top:450px;width:229.00px;height:39px;background-image:linear-gradient(to right,rgba(0,0,0,0.13) 1px,transparent 1px);background-size:14.360px 100%;background-position:13.88px 0"></div>
<div style="left:499.00px;top:450.00px;width:229.00px;height:1.00px;background:rgba(0,0,0,0.35);"></div>
<div style="left:499.00px;top:459.00px;width:229.00px;height:1.50px;background:#4a1020;"></div>
<div style="left:499.00px;top:479.00px;width:229.00px;height:1.50px;background:#4a1020;"></div>
<div style="left:957.00px;top:433.00px;width:230.00px;height:56.00px;background:#fd8f9f;"></div>
<div style="left:957.00px;top:450px;width:230.00px;height:39px;background-image:linear-gradient(to right,rgba(0,0,0,0.13) 1px,transparent 1px);background-size:14.360px 100%;background-position:1.04px 0"></div>
<div style="left:957.00px;top:450.00px;width:230.00px;height:1.00px;background:rgba(0,0,0,0.35);"></div>
<div style="left:957.00px;top:459.00px;width:230.00px;height:1.50px;background:#4a1020;"></div>
<div style="left:957.00px;top:479.00px;width:230.00px;height:1.50px;background:#4a1020;"></div>
<svg style="left:0;top:0" width="1564" height="960"><path d="M700 450L728 450L728 489Z" fill="rgba(120,40,60,0.25)"/><path d="M1160 450L1187 450L1187 489Z" fill="rgba(120,40,60,0.25)"/><path d="M478 491H505L505 509H478Z" fill="#fd8f9f"/><path d="M478 491H484L478 509Z" fill="rgba(120,40,60,0.25)"/><path d="M937 491H957V509H937Z" fill="#fd8f9f"/><path d="M613 491H728V509H613Z" fill="#fd8f9f"/><path d="M613 491H650Q625 500 613 509Z" fill="rgba(120,40,60,0.22)"/><path d="M712 491H728V509Z" fill="rgba(120,40,60,0.22)"/><path d="M1072 491H1187V509H1072Z" fill="#fd8f9f"/><path d="M1072 491H1109Q1084 500 1072 509Z" fill="rgba(120,40,60,0.22)"/><path d="M1171 491H1187V509Z" fill="rgba(120,40,60,0.22)"/></svg>
<div style="left:39.00px;top:491.00px;width:231.00px;height:18.00px;background:#fd8f9f;"></div>
<div style="left:212.50px;top:512.00px;width:57.00px;height:17.50px;background:#d76ae5;"></div>
<div style="left:613.00px;top:512.00px;width:115.00px;height:17.50px;background:#d76ae5;"></div>
<div style="left:1072.00px;top:512.00px;width:115.00px;height:17.50px;background:#d76ae5;"></div>
<div style="left:39.00px;top:532.50px;width:231.00px;height:18.00px;background:#d76ae5;"></div>
<div style="left:499.00px;top:532.50px;width:229.00px;height:18.00px;background:#d76ae5;"></div>
<div style="left:678.30px;top:96.00px;width:1.20px;height:502.00px;background:#f4f4f4;"></div>
<div style="left:678.30px;top:95.00px;width:1.20px;height:57.00px;background:#0c1440;"></div>
<div style="left:678.30px;top:154.00px;width:1.20px;height:57.00px;background:#0c1440;"></div>
<div style="left:678.30px;top:233.00px;width:1.20px;height:57.00px;background:#06302a;"></div>
<div style="left:678.30px;top:313.00px;width:1.20px;height:38.00px;background:#2a2e10;"></div>
<div style="left:678.30px;top:419.00px;width:1.20px;height:4.00px;background:#4a2410;"></div>
<div style="left:678.30px;top:424.00px;width:1.20px;height:5.00px;background:#4a2410;"></div>
<div style="left:678.30px;top:433.00px;width:1.20px;height:56.00px;background:#3a0a18;"></div>
<div style="left:678.30px;top:491.00px;width:1.20px;height:18.00px;background:#3a0a18;"></div>
<div style="left:678.30px;top:512.00px;width:1.20px;height:17.50px;background:#2a0838;"></div>
<div style="left:678.30px;top:532.50px;width:1.20px;height:18.00px;background:#2a0838;"></div>
<div style="left:1276px;top:577px;font-size:18px;color:#5a5a5a;line-height:20px;font-weight:bold;letter-spacing:1.2px">1/2</div>
<div style="left:1309.00px;top:95.00px;width:2.00px;height:503.00px;background:#1e1e1e;"></div>
<div style="left:1311.00px;top:95.00px;width:243.00px;height:503.00px;background:#2c2c2c;"></div>
<div style="left:1311.00px;top:95.00px;width:112.00px;height:57.00px;background:#93a6fd;"></div>
<svg style="left:1313.7px;top:97.2px" width="14.6" height="14.6"><circle cx="7.3" cy="7.3" r="5.8999999999999995" stroke="#22285a" stroke-width="1.3" fill="none"/><path d="M3.6999999999999997 5.3H10.9L7.3 10.3Z" fill="#22285a"/></svg>
<div class="hn" style="left:1336px;top:98px;font-size:11.5px;color:#22285a;line-height:13px;letter-spacing:0.2px">Drums</div>
<div style="left:1423.00px;top:95.00px;width:131.00px;height:57.00px;background:#363636;"></div>
<div style="left:1428px;top:98px;width:48px;height:13px;background:#fda752;color:#1a1a1a;font-size:11.5px;line-height:13px;text-align:center;font-weight:bold">1</div>
<div style="left:1482px;top:97.5px;width:22px;height:14.0px;background:#232323;color:#d4d4d4;font-size:11px;line-height:14.0px;text-align:center;">S</div>
<div style="left:1509px;top:97.5px;width:22px;height:14.0px;background:#232323;color:#d4d4d4;font-size:11px;line-height:14.0px;text-align:center;"></div>
<svg style="left:1515px;top:99.5px" width="10" height="10"><circle cx="5" cy="5" r="4.3" fill="#cfcfcf"/><path d="M5 2V5.3L3 7" stroke="#232323" stroke-width="1.3" fill="none"/></svg>
<div style="left:1428px;top:116px;width:49px;height:14px;background:#232323"></div>
<div style="left:1428.00px;top:116.00px;width:39.20px;height:14.00px;background:#16808c;"></div>
<div style="left:1428px;top:116px;width:49px;height:14px;background:transparent;color:#d4d4d4;font-size:11px;line-height:14px;text-align:center;">-1.0</div>
<div style="left:1482px;top:116px;width:49px;height:14px;background:#232323;color:#d4d4d4;font-size:11px;line-height:14px;text-align:center;">C</div>
<div style="left:1428px;top:134px;width:32px;height:14px;background:#232323;color:#cfcfcf;font-size:11px;line-height:14px;text-align:center;">-52.8</div>
<div style="left:1463px;top:134px;width:32px;height:14px;background:#232323;color:#cfcfcf;font-size:11px;line-height:14px;text-align:center;">&#8722;<span style="font-size:14px;line-height:10px;position:relative;top:-0.5px">&#8734;</span></div>
<svg style="left:1425px;top:131px" width="7" height="7"><circle cx="3.5" cy="3.5" r="2.6" fill="#f05454"/></svg>
<svg style="left:1461px;top:131px" width="7" height="7"><circle cx="3.5" cy="3.5" r="2.6" fill="#f05454"/></svg>
<div style="left:1535.60px;top:97.50px;width:3.90px;height:52.00px;background:#1a1a1a;"></div>
<div style="left:1540.30px;top:97.50px;width:3.90px;height:52.00px;background:#1a1a1a;"></div>
<div style="left:1535.60px;top:124.00px;width:3.90px;height:25.50px;background:#2fe05a;"></div>
<div style="left:1540.30px;top:124.00px;width:3.90px;height:25.50px;background:#2fe05a;"></div>
<div style="left:1535.60px;top:108.00px;width:8.60px;height:1.00px;background:#c8b020;"></div>
<div style="left:1311.00px;top:154.00px;width:112.00px;height:57.00px;background:#93a6fd;"></div>
<svg style="left:1313.7px;top:156.2px" width="14.6" height="14.6"><circle cx="7.3" cy="7.3" r="5.8999999999999995" stroke="#22285a" stroke-width="1.3" fill="none"/><path d="M3.6999999999999997 5.3H10.9L7.3 10.3Z" fill="#22285a"/></svg>
<div class="hn" style="left:1336px;top:157px;font-size:11.5px;color:#22285a;line-height:13px;letter-spacing:0.2px">Breaks</div>
<div style="left:1423.00px;top:154.00px;width:131.00px;height:57.00px;background:#363636;"></div>
<div style="left:1428px;top:157px;width:48px;height:13px;background:#fda752;color:#1a1a1a;font-size:11.5px;line-height:13px;text-align:center;font-weight:bold">2</div>
<div style="left:1482px;top:156.5px;width:22px;height:14.0px;background:#232323;color:#d4d4d4;font-size:11px;line-height:14.0px;text-align:center;">S</div>
<div style="left:1509px;top:156.5px;width:22px;height:14.0px;background:#232323;color:#d4d4d4;font-size:11px;line-height:14.0px;text-align:center;"></div>
<svg style="left:1515px;top:158.5px" width="10" height="10"><circle cx="5" cy="5" r="4" fill="#7a7a7a"/></svg>
<div style="left:1428px;top:175px;width:49px;height:14px;background:#232323"></div>
<div style="left:1428.00px;top:175.00px;width:30.38px;height:14.00px;background:#16808c;"></div>
<div style="left:1428px;top:175px;width:49px;height:14px;background:transparent;color:#d4d4d4;font-size:11px;line-height:14px;text-align:center;">-9.4</div>
<div style="left:1482px;top:175px;width:49px;height:14px;background:#232323;color:#d4d4d4;font-size:11px;line-height:14px;text-align:center;">C</div>
<div style="left:1428px;top:193px;width:32px;height:14px;background:#232323;color:#cfcfcf;font-size:11px;line-height:14px;text-align:center;">&#8722;<span style="font-size:14px;line-height:10px;position:relative;top:-0.5px">&#8734;</span></div>
<div style="left:1463px;top:193px;width:32px;height:14px;background:#232323;color:#cfcfcf;font-size:11px;line-height:14px;text-align:center;">&#8722;<span style="font-size:14px;line-height:10px;position:relative;top:-0.5px">&#8734;</span></div>
<svg style="left:1425px;top:190px" width="7" height="7"><circle cx="3.5" cy="3.5" r="2.6" fill="#f05454"/></svg>
<div style="left:1535.60px;top:156.50px;width:3.90px;height:52.00px;background:#1a1a1a;"></div>
<div style="left:1540.30px;top:156.50px;width:3.90px;height:52.00px;background:#1a1a1a;"></div>
<div style="left:1535.60px;top:170.00px;width:3.90px;height:38.50px;background:#2fe05a;"></div>
<div style="left:1540.30px;top:170.00px;width:3.90px;height:38.50px;background:#2fe05a;"></div>
<div style="left:1535.60px;top:170.00px;width:3.90px;height:12.00px;background:;background:linear-gradient(#b8b428,#1ba24a)"></div>
<div style="left:1540.30px;top:170.00px;width:3.90px;height:12.00px;background:;background:linear-gradient(#b8b428,#1ba24a)"></div>
<div style="left:1311.00px;top:213.00px;width:112.00px;height:18.00px;background:#91c8fa;"></div>
<svg style="left:1313.7px;top:215.2px" width="14.6" height="14.6"><circle cx="7.3" cy="7.3" r="5.8999999999999995" stroke="#1c3558" stroke-width="1.3" fill="none"/><path d="M4.699999999999999 5.3H9.9M4.699999999999999 7.3H9.9M4.699999999999999 9.3H9.9" stroke="#1c3558" stroke-width="1.1"/></svg>
<div class="hn" style="left:1336px;top:216px;font-size:11.5px;color:#1c3558;line-height:13px;letter-spacing:0.2px">Percussion</div>
<div style="left:1423.00px;top:213.00px;width:131.00px;height:18.00px;background:#363636;"></div>
<div style="left:1428px;top:216px;width:48px;height:13px;background:#fda752;color:#1a1a1a;font-size:11.5px;line-height:13px;text-align:center;font-weight:bold">3</div>
<div style="left:1482px;top:215.5px;width:22px;height:14.0px;background:#232323;color:#d4d4d4;font-size:11px;line-height:14.0px;text-align:center;">S</div>
<div style="left:1535.60px;top:215.50px;width:3.90px;height:13.00px;background:#1a1a1a;"></div>
<div style="left:1540.30px;top:215.50px;width:3.90px;height:13.00px;background:#1a1a1a;"></div>
<div style="left:1535.60px;top:222.00px;width:3.90px;height:6.50px;background:#2fe05a;"></div>
<div style="left:1540.30px;top:222.00px;width:3.90px;height:6.50px;background:#2fe05a;"></div>
<div style="left:1311.00px;top:233.00px;width:112.00px;height:57.00px;background:#5ffde2;"></div>
<svg style="left:1313.7px;top:235.2px" width="14.6" height="14.6"><circle cx="7.3" cy="7.3" r="5.8999999999999995" stroke="#0e4a40" stroke-width="1.3" fill="none"/><path d="M3.6999999999999997 5.3H10.9L7.3 10.3Z" fill="#0e4a40"/></svg>
<div class="hn" style="left:1336px;top:236px;font-size:11.5px;color:#0e4a40;line-height:13px;letter-spacing:0.2px">Bass</div>
<div style="left:1423.00px;top:233.00px;width:131.00px;height:57.00px;background:#363636;"></div>
<div style="left:1428px;top:236px;width:48px;height:13px;background:#fda752;color:#1a1a1a;font-size:11.5px;line-height:13px;text-align:center;font-weight:bold">8</div>
<div style="left:1482px;top:235.5px;width:22px;height:14.0px;background:#232323;color:#d4d4d4;font-size:11px;line-height:14.0px;text-align:center;">S</div>
<div style="left:1509px;top:235.5px;width:22px;height:14.0px;background:#232323;color:#d4d4d4;font-size:11px;line-height:14.0px;text-align:center;"></div>
<svg style="left:1515px;top:237.5px" width="10" height="10"><circle cx="5" cy="5" r="4.3" fill="#cfcfcf"/><path d="M5 2V5.3L3 7" stroke="#232323" stroke-width="1.3" fill="none"/></svg>
<div style="left:1428px;top:254px;width:49px;height:14px;background:#232323"></div>
<div style="left:1428.00px;top:254.00px;width:30.38px;height:14.00px;background:#16808c;"></div>
<div style="left:1428px;top:254px;width:49px;height:14px;background:transparent;color:#d4d4d4;font-size:11px;line-height:14px;text-align:center;">-7.7</div>
<div style="left:1482px;top:254px;width:49px;height:14px;background:#232323;color:#d4d4d4;font-size:11px;line-height:14px;text-align:center;">C</div>
<div style="left:1428px;top:272px;width:32px;height:14px;background:#232323;color:#cfcfcf;font-size:11px;line-height:14px;text-align:center;">&#8722;<span style="font-size:14px;line-height:10px;position:relative;top:-0.5px">&#8734;</span></div>
<div style="left:1463px;top:272px;width:32px;height:14px;background:#232323;color:#cfcfcf;font-size:11px;line-height:14px;text-align:center;">&#8722;<span style="font-size:14px;line-height:10px;position:relative;top:-0.5px">&#8734;</span></div>
<div style="left:1535.60px;top:235.50px;width:3.90px;height:52.00px;background:#1a1a1a;"></div>
<div style="left:1540.30px;top:235.50px;width:3.90px;height:52.00px;background:#1a1a1a;"></div>
<div style="left:1535.60px;top:258.00px;width:3.90px;height:29.50px;background:#2fe05a;"></div>
<div style="left:1540.30px;top:258.00px;width:3.90px;height:29.50px;background:#2fe05a;"></div>
<div style="left:1535.60px;top:251.00px;width:8.60px;height:1.00px;background:#c8b020;"></div>
<div style="left:1311.00px;top:292.00px;width:112.00px;height:19.00px;background:#5ffde2;"></div>
<svg style="left:1313.7px;top:294.2px" width="14.6" height="14.6"><circle cx="7.3" cy="7.3" r="5.8999999999999995" stroke="#0e4a40" stroke-width="1.3" fill="none"/><path d="M5.699999999999999 4.1V10.5L10.3 7.3Z" fill="#0e4a40"/></svg>
<div class="hn" style="left:1336px;top:295px;font-size:11.5px;color:#0e4a40;line-height:13px;letter-spacing:0.2px">Bass Drop</div>
<div style="left:1423.00px;top:292.00px;width:131.00px;height:19.00px;background:#363636;"></div>
<div style="left:1428px;top:295px;width:48px;height:13px;background:#fda752;color:#1a1a1a;font-size:11.5px;line-height:13px;text-align:center;font-weight:bold">9</div>
<div style="left:1482px;top:294.5px;width:22px;height:14.0px;background:#232323;color:#d4d4d4;font-size:11px;line-height:14.0px;text-align:center;">S</div>
<div style="left:1509px;top:294.5px;width:22px;height:14.0px;background:#232323;color:#d4d4d4;font-size:11px;line-height:14.0px;text-align:center;"></div>
<svg style="left:1515px;top:296.5px" width="10" height="10"><circle cx="5" cy="5" r="4.3" fill="#cfcfcf"/><path d="M5 2V5.3L3 7" stroke="#232323" stroke-width="1.3" fill="none"/></svg>
<div style="left:1535.60px;top:294.50px;width:3.90px;height:14.00px;background:#1a1a1a;"></div>
<div style="left:1540.30px;top:294.50px;width:3.90px;height:14.00px;background:#1a1a1a;"></div>
<div style="left:1311.00px;top:313.00px;width:112.00px;height:38.00px;background:#ecfaa7;"></div>
<svg style="left:1313.7px;top:315.2px" width="14.6" height="14.6"><circle cx="7.3" cy="7.3" r="5.8999999999999995" stroke="#3e4420" stroke-width="1.3" fill="none"/><path d="M3.6999999999999997 5.3H10.9L7.3 10.3Z" fill="#3e4420"/></svg>
<div class="hn" style="left:1336px;top:316px;font-size:11.5px;color:#3e4420;line-height:13px;letter-spacing:0.2px">Synth Riser</div>
<div style="left:1423.00px;top:313.00px;width:131.00px;height:38.00px;background:#363636;"></div>
<div style="left:1428px;top:316px;width:48px;height:13px;background:#fda752;color:#1a1a1a;font-size:11.5px;line-height:13px;text-align:center;font-weight:bold">10</div>
<div style="left:1482px;top:315.5px;width:22px;height:14.0px;background:#232323;color:#d4d4d4;font-size:11px;line-height:14.0px;text-align:center;">S</div>
<div style="left:1509px;top:315.5px;width:22px;height:14.0px;background:#232323;color:#d4d4d4;font-size:11px;line-height:14.0px;text-align:center;"></div>
<svg style="left:1515px;top:317.5px" width="10" height="10"><circle cx="5" cy="5" r="4.3" fill="#cfcfcf"/><path d="M5 2V5.3L3 7" stroke="#232323" stroke-width="1.3" fill="none"/></svg>
<div style="left:1428px;top:334px;width:49px;height:14px;background:#232323"></div>
<div style="left:1428.00px;top:334.00px;width:22.05px;height:14.00px;background:#16808c;"></div>
<div style="left:1428px;top:334px;width:49px;height:14px;background:transparent;color:#d4d4d4;font-size:11px;line-height:14px;text-align:center;">-18.0</div>
<div style="left:1482px;top:334px;width:49px;height:14px;background:#232323;color:#d4d4d4;font-size:11px;line-height:14px;text-align:center;">C</div>
<div style="left:1535.60px;top:315.50px;width:3.90px;height:33.00px;background:#1a1a1a;"></div>
<div style="left:1540.30px;top:315.50px;width:3.90px;height:33.00px;background:#1a1a1a;"></div>
<div style="left:1535.60px;top:334.00px;width:3.90px;height:14.50px;background:#2fe05a;"></div>
<div style="left:1540.30px;top:334.00px;width:3.90px;height:14.50px;background:#2fe05a;"></div>
<div style="left:1535.60px;top:331.00px;width:8.60px;height:1.00px;background:#c8b020;"></div>
<div style="left:1311.00px;top:353.00px;width:112.00px;height:57.00px;background:#f8f07b;"></div>
<svg style="left:1313.7px;top:355.2px" width="14.6" height="14.6"><circle cx="7.3" cy="7.3" r="5.8999999999999995" stroke="#46421a" stroke-width="1.3" fill="none"/><path d="M3.6999999999999997 5.3H10.9L7.3 10.3Z" fill="#46421a"/></svg>
<div class="hn" style="left:1336px;top:356px;font-size:11.5px;color:#46421a;line-height:13px;letter-spacing:0.2px">Keys</div>
<div style="left:1423.00px;top:353.00px;width:131.00px;height:57.00px;background:#363636;"></div>
<div style="left:1428px;top:356px;width:48px;height:13px;background:#fda752;color:#1a1a1a;font-size:11.5px;line-height:13px;text-align:center;font-weight:bold">11</div>
<div style="left:1482px;top:355.5px;width:22px;height:14.0px;background:#232323;color:#d4d4d4;font-size:11px;line-height:14.0px;text-align:center;">S</div>
<div style="left:1509px;top:355.5px;width:22px;height:14.0px;background:#232323;color:#d4d4d4;font-size:11px;line-height:14.0px;text-align:center;"></div>
<svg style="left:1515px;top:357.5px" width="10" height="10"><circle cx="5" cy="5" r="4.3" fill="#cfcfcf"/><path d="M5 2V5.3L3 7" stroke="#232323" stroke-width="1.3" fill="none"/></svg>
<div style="left:1428px;top:374px;width:49px;height:14px;background:#232323"></div>
<div style="left:1428.00px;top:374.00px;width:31.85px;height:14.00px;background:#16808c;"></div>
<div style="left:1428px;top:374px;width:49px;height:14px;background:transparent;color:#d4d4d4;font-size:11px;line-height:14px;text-align:center;">-6.6</div>
<div style="left:1482px;top:374px;width:49px;height:14px;background:#232323;color:#d4d4d4;font-size:11px;line-height:14px;text-align:center;">C</div>
<div style="left:1428px;top:392px;width:32px;height:14px;background:#232323;color:#cfcfcf;font-size:11px;line-height:14px;text-align:center;">&#8722;<span style="font-size:14px;line-height:10px;position:relative;top:-0.5px">&#8734;</span></div>
<div style="left:1463px;top:392px;width:32px;height:14px;background:#232323;color:#cfcfcf;font-size:11px;line-height:14px;text-align:center;">&#8722;<span style="font-size:14px;line-height:10px;position:relative;top:-0.5px">&#8734;</span></div>
<div style="left:1535.60px;top:355.50px;width:3.90px;height:52.00px;background:#1a1a1a;"></div>
<div style="left:1540.30px;top:355.50px;width:3.90px;height:52.00px;background:#1a1a1a;"></div>
<div style="left:1535.60px;top:406.00px;width:3.90px;height:1.50px;background:#2fe05a;"></div>
<div style="left:1540.30px;top:406.00px;width:3.90px;height:1.50px;background:#2fe05a;"></div>
<div style="left:1311.00px;top:412.00px;width:112.00px;height:19.00px;background:#f6a470;"></div>
<svg style="left:1313.7px;top:414.2px" width="14.6" height="14.6"><circle cx="7.3" cy="7.3" r="5.8999999999999995" stroke="#552f18" stroke-width="1.3" fill="none"/><path d="M4.699999999999999 5.3H9.9M4.699999999999999 7.3H9.9M4.699999999999999 9.3H9.9" stroke="#552f18" stroke-width="1.1"/></svg>
<div class="hn" style="left:1336px;top:415px;font-size:11.5px;color:#552f18;line-height:13px;letter-spacing:0.2px">Pads</div>
<div style="left:1423.00px;top:412.00px;width:131.00px;height:19.00px;background:#363636;"></div>
<div style="left:1428px;top:415px;width:48px;height:13px;background:#fda752;color:#1a1a1a;font-size:11.5px;line-height:13px;text-align:center;font-weight:bold">12</div>
<div style="left:1482px;top:414.5px;width:22px;height:14.0px;background:#232323;color:#d4d4d4;font-size:11px;line-height:14.0px;text-align:center;">S</div>
<div style="left:1535.60px;top:414.50px;width:3.90px;height:14.00px;background:#1a1a1a;"></div>
<div style="left:1540.30px;top:414.50px;width:3.90px;height:14.00px;background:#1a1a1a;"></div>
<div style="left:1535.60px;top:423.00px;width:3.90px;height:5.50px;background:#2fe05a;"></div>
<div style="left:1540.30px;top:423.00px;width:3.90px;height:5.50px;background:#2fe05a;"></div>
<div style="left:1311.00px;top:433.00px;width:112.00px;height:56.00px;background:#fd8f9f;"></div>
<svg style="left:1313.7px;top:435.2px" width="14.6" height="14.6"><circle cx="7.3" cy="7.3" r="5.8999999999999995" stroke="#5a2030" stroke-width="1.3" fill="none"/><path d="M3.6999999999999997 5.3H10.9L7.3 10.3Z" fill="#5a2030"/></svg>
<div class="hn" style="left:1336px;top:436px;font-size:11.5px;color:#5a2030;line-height:13px;letter-spacing:0.2px">Ambience</div>
<div style="left:1423.00px;top:433.00px;width:131.00px;height:56.00px;background:#363636;"></div>
<div style="left:1428px;top:436px;width:48px;height:13px;background:#fda752;color:#1a1a1a;font-size:11.5px;line-height:13px;text-align:center;font-weight:bold">16</div>
<div style="left:1482px;top:435.5px;width:22px;height:14.0px;background:#232323;color:#d4d4d4;font-size:11px;line-height:14.0px;text-align:center;">S</div>
<div style="left:1509px;top:435.5px;width:22px;height:14.0px;background:#232323;color:#d4d4d4;font-size:11px;line-height:14.0px;text-align:center;"></div>
<svg style="left:1515px;top:437.5px" width="10" height="10"><circle cx="5" cy="5" r="4" fill="#7a7a7a"/></svg>
<div style="left:1428px;top:454px;width:49px;height:14px;background:#232323"></div>
<div style="left:1428.00px;top:454.00px;width:28.42px;height:14.00px;background:#16808c;"></div>
<div style="left:1428px;top:454px;width:49px;height:14px;background:transparent;color:#d4d4d4;font-size:11px;line-height:14px;text-align:center;">-8.3</div>
<div style="left:1482px;top:454px;width:49px;height:14px;background:#232323;color:#d4d4d4;font-size:11px;line-height:14px;text-align:center;">C</div>
<div style="left:1428px;top:472px;width:32px;height:14px;background:#232323;color:#cfcfcf;font-size:11px;line-height:14px;text-align:center;">&#8722;<span style="font-size:14px;line-height:10px;position:relative;top:-0.5px">&#8734;</span></div>
<div style="left:1463px;top:472px;width:32px;height:14px;background:#232323;color:#cfcfcf;font-size:11px;line-height:14px;text-align:center;">&#8722;<span style="font-size:14px;line-height:10px;position:relative;top:-0.5px">&#8734;</span></div>
<div style="left:1535.60px;top:435.50px;width:3.90px;height:51.00px;background:#1a1a1a;"></div>
<div style="left:1540.30px;top:435.50px;width:3.90px;height:51.00px;background:#1a1a1a;"></div>
<div style="left:1535.60px;top:466.00px;width:3.90px;height:20.50px;background:#2fe05a;"></div>
<div style="left:1540.30px;top:468.00px;width:3.90px;height:18.50px;background:#2fe05a;"></div>
<div style="left:1311.00px;top:491.00px;width:112.00px;height:19.00px;background:#fd8f9f;"></div>
<svg style="left:1313.7px;top:493.2px" width="14.6" height="14.6"><circle cx="7.3" cy="7.3" r="5.8999999999999995" stroke="#5a2030" stroke-width="1.3" fill="none"/><path d="M5.699999999999999 4.1V10.5L10.3 7.3Z" fill="#5a2030"/></svg>
<div class="hn" style="left:1336px;top:494px;font-size:11.5px;color:#5a2030;line-height:13px;letter-spacing:0.2px">Drone</div>
<div style="left:1423.00px;top:491.00px;width:131.00px;height:19.00px;background:#363636;"></div>
<div style="left:1428px;top:494px;width:48px;height:13px;background:#fda752;color:#1a1a1a;font-size:11.5px;line-height:13px;text-align:center;font-weight:bold">17</div>
<div style="left:1482px;top:493.5px;width:22px;height:14.0px;background:#232323;color:#d4d4d4;font-size:11px;line-height:14.0px;text-align:center;">S</div>
<div style="left:1509px;top:493.5px;width:22px;height:14.0px;background:#232323;color:#d4d4d4;font-size:11px;line-height:14.0px;text-align:center;"></div>
<svg style="left:1515px;top:495.5px" width="10" height="10"><circle cx="5" cy="5" r="4" fill="#7a7a7a"/></svg>
<div style="left:1535.60px;top:493.50px;width:3.90px;height:14.00px;background:#1a1a1a;"></div>
<div style="left:1540.30px;top:493.50px;width:3.90px;height:14.00px;background:#1a1a1a;"></div>
<div style="left:1535.60px;top:500.00px;width:3.90px;height:7.50px;background:#2fe05a;"></div>
<div style="left:1540.30px;top:500.00px;width:3.90px;height:7.50px;background:#2fe05a;"></div>
<div style="left:1311.00px;top:512.00px;width:112.00px;height:18.00px;background:#d76ae5;"></div>
<svg style="left:1313.7px;top:514.2px" width="14.6" height="14.6"><circle cx="7.3" cy="7.3" r="5.8999999999999995" stroke="#461455" stroke-width="1.3" fill="none"/><path d="M5.699999999999999 4.1V10.5L10.3 7.3Z" fill="#461455"/></svg>
<div class="hn" style="left:1336px;top:515px;font-size:11.5px;color:#461455;line-height:13px;letter-spacing:0.2px">FX</div>
<div style="left:1423.00px;top:512.00px;width:131.00px;height:18.00px;background:#363636;"></div>
<div style="left:1428px;top:515px;width:48px;height:13px;background:#fda752;color:#1a1a1a;font-size:11.5px;line-height:13px;text-align:center;font-weight:bold">18</div>
<div style="left:1482px;top:514.5px;width:22px;height:14.0px;background:#232323;color:#d4d4d4;font-size:11px;line-height:14.0px;text-align:center;">S</div>
<div style="left:1509px;top:514.5px;width:22px;height:14.0px;background:#232323;color:#d4d4d4;font-size:11px;line-height:14.0px;text-align:center;"></div>
<svg style="left:1515px;top:516.5px" width="10" height="10"><circle cx="5" cy="5" r="4" fill="#7a7a7a"/></svg>
<div style="left:1535.60px;top:514.50px;width:3.90px;height:13.00px;background:#1a1a1a;"></div>
<div style="left:1540.30px;top:514.50px;width:3.90px;height:13.00px;background:#1a1a1a;"></div>
<div style="left:1535.60px;top:521.00px;width:3.90px;height:6.50px;background:#2fe05a;"></div>
<div style="left:1540.30px;top:521.00px;width:3.90px;height:6.50px;background:#2fe05a;"></div>
<div style="left:1311.00px;top:532.00px;width:112.00px;height:19.00px;background:#d76ae5;"></div>
<svg style="left:1313.7px;top:534.2px" width="14.6" height="14.6"><circle cx="7.3" cy="7.3" r="5.8999999999999995" stroke="#461455" stroke-width="1.3" fill="none"/><path d="M5.699999999999999 4.1V10.5L10.3 7.3Z" fill="#461455"/></svg>
<div class="hn" style="left:1336px;top:535px;font-size:11.5px;color:#461455;line-height:13px;letter-spacing:0.2px">Zap</div>
<div style="left:1423.00px;top:532.00px;width:131.00px;height:19.00px;background:#363636;"></div>
<div style="left:1428px;top:535px;width:48px;height:13px;background:#fda752;color:#1a1a1a;font-size:11.5px;line-height:13px;text-align:center;font-weight:bold">19</div>
<div style="left:1482px;top:534.5px;width:22px;height:14.0px;background:#232323;color:#d4d4d4;font-size:11px;line-height:14.0px;text-align:center;">S</div>
<div style="left:1509px;top:534.5px;width:22px;height:14.0px;background:#232323;color:#d4d4d4;font-size:11px;line-height:14.0px;text-align:center;"></div>
<svg style="left:1515px;top:536.5px" width="10" height="10"><circle cx="5" cy="5" r="4.3" fill="#cfcfcf"/><path d="M5 2V5.3L3 7" stroke="#232323" stroke-width="1.3" fill="none"/></svg>
<div style="left:1535.60px;top:534.50px;width:3.90px;height:14.00px;background:#1a1a1a;"></div>
<div style="left:1540.30px;top:534.50px;width:3.90px;height:14.00px;background:#1a1a1a;"></div>
<div style="left:1535.60px;top:541.00px;width:3.90px;height:7.50px;background:#2fe05a;"></div>
<div style="left:1540.30px;top:541.00px;width:3.90px;height:7.50px;background:#2fe05a;"></div>
<div style="left:1311.00px;top:579.00px;width:112.00px;height:18.00px;background:#ffffff;"></div>
<svg style="left:1313.7px;top:580.7px" width="14.6" height="14.6"><circle cx="7.3" cy="7.3" r="5.8999999999999995" stroke="#2a2a2a" stroke-width="1.3" fill="none"/><path d="M5.699999999999999 4.1V10.5L10.3 7.3Z" fill="#2a2a2a"/></svg>
<div style="left:1337px;top:582px;font-size:11.5px;color:#222;line-height:13px;font-weight:bold">Main</div>
<div style="left:1423.00px;top:579.00px;width:131.00px;height:18.00px;background:#363636;"></div>
<div style="left:1428.00px;top:581.50px;width:49.00px;height:13.50px;background:#232323;"></div>
<div style="left:1428.00px;top:581.50px;width:41.50px;height:13.50px;background:#16808c;"></div>
<div style="left:1428px;top:581.5px;width:49px;height:13.5px;background:transparent;color:#d4d4d4;font-size:11px;line-height:13.5px;text-align:center;">0</div>
<div style="left:1482.00px;top:581.50px;width:49.00px;height:13.50px;background:#232323;"></div>
<div style="left:1482.00px;top:581.50px;width:41.50px;height:13.50px;background:#3d6fd0;"></div>
<div style="left:1482px;top:581.5px;width:49px;height:13.5px;background:transparent;color:#d4d4d4;font-size:11px;line-height:13.5px;text-align:center;">0</div>
<div style="left:1535.60px;top:581.00px;width:3.90px;height:15.00px;background:#1a1a1a;"></div>
<div style="left:1540.30px;top:581.00px;width:3.90px;height:15.00px;background:#1a1a1a;"></div>
<div style="left:1535.60px;top:587.00px;width:3.90px;height:9.00px;background:#2fe05a;"></div>
<div style="left:1540.30px;top:587.00px;width:3.90px;height:9.00px;background:#2fe05a;"></div>
<div style="left:1535.60px;top:583.00px;width:8.60px;height:1.00px;background:#c03a2a;"></div>
<div style="left:1311.00px;top:553.00px;width:243.00px;height:24.00px;background:#363636;"></div>
<div style="left:1311.00px;top:598.00px;width:243.00px;height:22.00px;background:#2c2c2c;"></div>
<div style="left:1312px;top:604px;width:16px;height:14px;background:#232323"></div>
<svg style="left:1313px;top:605px" width="14" height="12"><path d="M2 4V8M4.5 2V10M7 1V11M9.5 3V9M12 5V7" stroke="#bbb" stroke-width="1.3"/></svg>
<div style="left:1331px;top:604px;width:38px;height:14px;background:#232323;color:#cfcfcf;font-size:11px;line-height:14px;text-align:center;">1.00x</div>
<div style="left:1384px;top:604px;width:18px;height:14px;background:#232323;color:#d4d4d4;font-size:11px;line-height:14px;text-align:center;">H</div>
<div style="left:1405px;top:604px;width:18px;height:14px;background:#232323;color:#d4d4d4;font-size:11px;line-height:14px;text-align:center;">W</div>
<div style="left:10.00px;top:598.00px;width:1299.00px;height:19.00px;background:#353535;"></div>
<div style="left:20.30px;top:601.00px;width:1.00px;height:7.00px;background:#8a8a8a;"></div>
<div style="left:22.3px;top:602px;font-size:11px;color:#b5b5b5;line-height:12px">0:10</div>
<div style="left:41.20px;top:601.00px;width:1.00px;height:2.00px;background:#6a6a6a;"></div>
<div style="left:62.10px;top:601.00px;width:1.00px;height:2.00px;background:#6a6a6a;"></div>
<div style="left:83.00px;top:601.00px;width:1.00px;height:2.00px;background:#6a6a6a;"></div>
<div style="left:103.90px;top:601.00px;width:1.00px;height:2.00px;background:#6a6a6a;"></div>
<div style="left:124.80px;top:601.00px;width:1.00px;height:7.00px;background:#8a8a8a;"></div>
<div style="left:126.8px;top:602px;font-size:11px;color:#b5b5b5;line-height:12px">0:15</div>
<div style="left:145.70px;top:601.00px;width:1.00px;height:2.00px;background:#6a6a6a;"></div>
<div style="left:166.60px;top:601.00px;width:1.00px;height:2.00px;background:#6a6a6a;"></div>
<div style="left:187.50px;top:601.00px;width:1.00px;height:2.00px;background:#6a6a6a;"></div>
<div style="left:208.40px;top:601.00px;width:1.00px;height:2.00px;background:#6a6a6a;"></div>
<div style="left:229.30px;top:601.00px;width:1.00px;height:7.00px;background:#8a8a8a;"></div>
<div style="left:231.3px;top:602px;font-size:11px;color:#b5b5b5;line-height:12px">0:20</div>
<div style="left:250.20px;top:601.00px;width:1.00px;height:2.00px;background:#6a6a6a;"></div>
<div style="left:271.10px;top:601.00px;width:1.00px;height:2.00px;background:#6a6a6a;"></div>
<div style="left:292.00px;top:601.00px;width:1.00px;height:2.00px;background:#6a6a6a;"></div>
<div style="left:312.90px;top:601.00px;width:1.00px;height:2.00px;background:#6a6a6a;"></div>
<div style="left:333.80px;top:601.00px;width:1.00px;height:7.00px;background:#8a8a8a;"></div>
<div style="left:335.8px;top:602px;font-size:11px;color:#b5b5b5;line-height:12px">0:25</div>
<div style="left:354.70px;top:601.00px;width:1.00px;height:2.00px;background:#6a6a6a;"></div>
<div style="left:375.60px;top:601.00px;width:1.00px;height:2.00px;background:#6a6a6a;"></div>
<div style="left:396.50px;top:601.00px;width:1.00px;height:2.00px;background:#6a6a6a;"></div>
<div style="left:417.40px;top:601.00px;width:1.00px;height:2.00px;background:#6a6a6a;"></div>
<div style="left:438.30px;top:601.00px;width:1.00px;height:7.00px;background:#8a8a8a;"></div>
<div style="left:440.3px;top:602px;font-size:11px;color:#b5b5b5;line-height:12px">0:30</div>
<div style="left:459.20px;top:601.00px;width:1.00px;height:2.00px;background:#6a6a6a;"></div>
<div style="left:480.10px;top:601.00px;width:1.00px;height:2.00px;background:#6a6a6a;"></div>
<div style="left:501.00px;top:601.00px;width:1.00px;height:2.00px;background:#6a6a6a;"></div>
<div style="left:521.90px;top:601.00px;width:1.00px;height:2.00px;background:#6a6a6a;"></div>
<div style="left:542.80px;top:601.00px;width:1.00px;height:7.00px;background:#8a8a8a;"></div>
<div style="left:544.8px;top:602px;font-size:11px;color:#b5b5b5;line-height:12px">0:35</div>
<div style="left:563.70px;top:601.00px;width:1.00px;height:2.00px;background:#6a6a6a;"></div>
<div style="left:584.60px;top:601.00px;width:1.00px;height:2.00px;background:#6a6a6a;"></div>
<div style="left:605.50px;top:601.00px;width:1.00px;height:2.00px;background:#6a6a6a;"></div>
<div style="left:626.40px;top:601.00px;width:1.00px;height:2.00px;background:#6a6a6a;"></div>
<div style="left:647.30px;top:601.00px;width:1.00px;height:7.00px;background:#8a8a8a;"></div>
<div style="left:649.3px;top:602px;font-size:11px;color:#b5b5b5;line-height:12px">0:40</div>
<div style="left:668.20px;top:601.00px;width:1.00px;height:2.00px;background:#6a6a6a;"></div>
<div style="left:689.10px;top:601.00px;width:1.00px;height:2.00px;background:#6a6a6a;"></div>
<div style="left:710.00px;top:601.00px;width:1.00px;height:2.00px;background:#6a6a6a;"></div>
<div style="left:730.90px;top:601.00px;width:1.00px;height:2.00px;background:#6a6a6a;"></div>
<div style="left:751.80px;top:601.00px;width:1.00px;height:7.00px;background:#8a8a8a;"></div>
<div style="left:753.8px;top:602px;font-size:11px;color:#b5b5b5;line-height:12px">0:45</div>
<div style="left:772.70px;top:601.00px;width:1.00px;height:2.00px;background:#6a6a6a;"></div>
<div style="left:793.60px;top:601.00px;width:1.00px;height:2.00px;background:#6a6a6a;"></div>
<div style="left:814.50px;top:601.00px;width:1.00px;height:2.00px;background:#6a6a6a;"></div>
<div style="left:835.40px;top:601.00px;width:1.00px;height:2.00px;background:#6a6a6a;"></div>
<div style="left:856.30px;top:601.00px;width:1.00px;height:7.00px;background:#8a8a8a;"></div>
<div style="left:858.3px;top:602px;font-size:11px;color:#b5b5b5;line-height:12px">0:50</div>
<div style="left:877.20px;top:601.00px;width:1.00px;height:2.00px;background:#6a6a6a;"></div>
<div style="left:898.10px;top:601.00px;width:1.00px;height:2.00px;background:#6a6a6a;"></div>
<div style="left:919.00px;top:601.00px;width:1.00px;height:2.00px;background:#6a6a6a;"></div>
<div style="left:939.90px;top:601.00px;width:1.00px;height:2.00px;background:#6a6a6a;"></div>
<div style="left:960.80px;top:601.00px;width:1.00px;height:7.00px;background:#8a8a8a;"></div>
<div style="left:962.8px;top:602px;font-size:11px;color:#b5b5b5;line-height:12px">0:55</div>
<div style="left:981.70px;top:601.00px;width:1.00px;height:2.00px;background:#6a6a6a;"></div>
<div style="left:1002.60px;top:601.00px;width:1.00px;height:2.00px;background:#6a6a6a;"></div>
<div style="left:1023.50px;top:601.00px;width:1.00px;height:2.00px;background:#6a6a6a;"></div>
<div style="left:1044.40px;top:601.00px;width:1.00px;height:2.00px;background:#6a6a6a;"></div>
<div style="left:1065.30px;top:601.00px;width:1.00px;height:7.00px;background:#8a8a8a;"></div>
<div style="left:1067.3px;top:602px;font-size:11px;color:#b5b5b5;line-height:12px">1:00</div>
<div style="left:1086.20px;top:601.00px;width:1.00px;height:2.00px;background:#6a6a6a;"></div>
<div style="left:1107.10px;top:601.00px;width:1.00px;height:2.00px;background:#6a6a6a;"></div>
<div style="left:1128.00px;top:601.00px;width:1.00px;height:2.00px;background:#6a6a6a;"></div>
<div style="left:1148.90px;top:601.00px;width:1.00px;height:2.00px;background:#6a6a6a;"></div>
<div style="left:1169.80px;top:601.00px;width:1.00px;height:7.00px;background:#8a8a8a;"></div>
<div style="left:1171.8px;top:602px;font-size:11px;color:#b5b5b5;line-height:12px">1:05</div>
<div style="left:1190.70px;top:601.00px;width:1.00px;height:2.00px;background:#6a6a6a;"></div>
<div style="left:1211.60px;top:601.00px;width:1.00px;height:2.00px;background:#6a6a6a;"></div>
<div style="left:1232.50px;top:601.00px;width:1.00px;height:2.00px;background:#6a6a6a;"></div>
<div style="left:1253.40px;top:601.00px;width:1.00px;height:2.00px;background:#6a6a6a;"></div>
<div style="left:1274.30px;top:601.00px;width:1.00px;height:7.00px;background:#8a8a8a;"></div>
<div style="left:1276.3px;top:602px;font-size:11px;color:#b5b5b5;line-height:12px">1:10</div>
<div style="left:1295.20px;top:601.00px;width:1.00px;height:2.00px;background:#6a6a6a;"></div>
<svg style="left:494.52px;top:600px" width="8" height="5"><path d="M0 5H8L4 0Z" fill="#2bc8c8"/></svg>
<div style="left:10.00px;top:623.00px;width:1544.00px;height:300.00px;background:#2a2a2a;"></div>
<div style="left:10.00px;top:644.00px;width:101.00px;height:270.00px;background:#363636;"></div>
<div style="left:10.00px;top:625.00px;width:101.00px;height:19.00px;background:#93a6fd;"></div>
<div class="hn" style="left:13.5px;top:629px;font-size:11.5px;color:#22285a;line-height:13px;letter-spacing:0.2px">Drums</div>
<svg style="left:93.7px;top:627.2px" width="14.6" height="14.6"><circle cx="7.3" cy="7.3" r="5.8999999999999995" stroke="#22285a" stroke-width="1.3" fill="none"/><path d="M3.6999999999999997 5.3H10.9L7.3 10.3Z" fill="#22285a"/></svg>
<div style="left:10.00px;top:914.50px;width:101.00px;height:6.00px;background:#93a6fd;"></div>
<div style="left:18px;top:652px;width:37px;height:13px;border-radius:6.5px;background:#242424;color:#e0e0e0;font-size:11.5px;line-height:13px;text-align:center">-6.44</div>
<div style="left:17.5px;top:671.2px;width:38.5px;height:13.799999999999955px;background:#222222;color:#e0e0e0;font-size:11.5px;line-height:13.799999999999955px;text-align:center;">-1.0</div>
<svg style="left:60px;top:675px" width="13" height="14"><path d="M0 0L12.5 7L0 14Z" fill="#c4c4c4"/></svg>
<div style="left:73.30px;top:652.00px;width:13.60px;height:253.00px;background:#1b1b1b;"></div>
<div style="left:79.70px;top:652.00px;width:0.90px;height:253.00px;background:#3a3a3a;"></div>
<div style="left:73.70px;top:780.00px;width:5.80px;height:125.00px;background:#22ee5e;"></div>
<div style="left:80.80px;top:776.00px;width:5.80px;height:129.00px;background:#22ee5e;"></div>
<div style="left:73.70px;top:706.00px;width:5.80px;height:1.50px;background:#d7b52a;"></div>
<div style="left:80.80px;top:706.00px;width:5.80px;height:1.50px;background:#d7b52a;"></div>
<div style="left:73.30px;top:677.50px;width:13.60px;height:1.00px;background:#6a6a6a;"></div>
<div style="left:67.00px;top:657.50px;width:3.00px;height:1.00px;background:#5a5a5a;"></div>
<div style="left:90px;top:651.5px;font-size:11px;color:#b4b4b4;line-height:12px">6</div>
<div style="left:67.00px;top:678.00px;width:3.00px;height:1.00px;background:#5a5a5a;"></div>
<div style="left:90px;top:672px;font-size:11px;color:#b4b4b4;line-height:12px">0</div>
<div style="left:67.00px;top:702.60px;width:3.00px;height:1.00px;background:#5a5a5a;"></div>
<div style="left:90px;top:696.6px;font-size:11px;color:#b4b4b4;line-height:12px">6</div>
<div style="left:67.00px;top:727.50px;width:3.00px;height:1.00px;background:#5a5a5a;"></div>
<div style="left:90px;top:721.5px;font-size:11px;color:#b4b4b4;line-height:12px">12</div>
<div style="left:67.00px;top:752.50px;width:3.00px;height:1.00px;background:#5a5a5a;"></div>
<div style="left:90px;top:746.5px;font-size:11px;color:#b4b4b4;line-height:12px">18</div>
<div style="left:67.00px;top:778.00px;width:3.00px;height:1.00px;background:#5a5a5a;"></div>
<div style="left:90px;top:772px;font-size:11px;color:#b4b4b4;line-height:12px">24</div>
<div style="left:67.00px;top:803.30px;width:3.00px;height:1.00px;background:#5a5a5a;"></div>
<div style="left:90px;top:797.3px;font-size:11px;color:#b4b4b4;line-height:12px">30</div>
<div style="left:67.00px;top:825.20px;width:3.00px;height:1.00px;background:#5a5a5a;"></div>
<div style="left:90px;top:819.2px;font-size:11px;color:#b4b4b4;line-height:12px">36</div>
<div style="left:67.00px;top:844.70px;width:3.00px;height:1.00px;background:#5a5a5a;"></div>
<div style="left:90px;top:838.7px;font-size:11px;color:#b4b4b4;line-height:12px">42</div>
<div style="left:67.00px;top:861.00px;width:3.00px;height:1.00px;background:#5a5a5a;"></div>
<div style="left:90px;top:855px;font-size:11px;color:#b4b4b4;line-height:12px">48</div>
<div style="left:67.00px;top:876.40px;width:3.00px;height:1.00px;background:#5a5a5a;"></div>
<div style="left:90px;top:870.4px;font-size:11px;color:#b4b4b4;line-height:12px">54</div>
<div style="left:67.00px;top:890.40px;width:3.00px;height:1.00px;background:#5a5a5a;"></div>
<div style="left:90px;top:884.4px;font-size:11px;color:#b4b4b4;line-height:12px">60</div>
<svg style="left:20px;top:808px" width="32" height="36"><path d="M11 1.5H21L16 6Z" fill="#1a1a1a"/><path d="M8.2 30.4A13 13 0 1 1 23.8 30.4" stroke="#151515" stroke-width="2.2" fill="none"/><path d="M16 6V19" stroke="#151515" stroke-width="2.2"/></svg>
<div style="left:24.5px;top:845px;width:23.5px;height:23px;background:#fda752;color:#1a1a1a;font-size:15px;line-height:23px;text-align:center;font-weight:bold">1</div>
<div style="left:24.5px;top:873px;width:23.5px;height:13.5px;background:#232323;color:#d4d4d4;font-size:11px;line-height:13.5px;text-align:center;">S</div>
<div style="left:24.5px;top:891.5px;width:23.5px;height:13.5px;background:#232323;color:#d4d4d4;font-size:11px;line-height:13.5px;text-align:center;"></div>
<svg style="left:31.5px;top:893.5px" width="10" height="10"><circle cx="5" cy="5" r="4.3" fill="#cfcfcf"/><path d="M5 2V5.3L3 7" stroke="#232323" stroke-width="1.3" fill="none"/></svg>
<div style="left:113.00px;top:644.00px;width:101.00px;height:270.00px;background:#363636;"></div>
<div style="left:113.00px;top:625.00px;width:101.00px;height:19.00px;background:#93a6fd;"></div>
<div class="hn" style="left:116.5px;top:629px;font-size:11.5px;color:#22285a;line-height:13px;letter-spacing:0.2px">Breaks</div>
<div style="left:113.00px;top:914.50px;width:101.00px;height:6.00px;background:#93a6fd;"></div>
<div style="left:121px;top:652px;width:37px;height:13px;border-radius:6.5px;background:#242424;color:#e0e0e0;font-size:11.5px;line-height:13px;text-align:center">-10.2</div>
<div style="left:120.5px;top:671.2px;width:38.5px;height:13.799999999999955px;background:#222222;color:#e0e0e0;font-size:11.5px;line-height:13.799999999999955px;text-align:center;">-9.4</div>
<svg style="left:163px;top:710px" width="13" height="14"><path d="M0 0L12.5 7L0 14Z" fill="#c4c4c4"/></svg>
<div style="left:176.30px;top:652.00px;width:13.60px;height:253.00px;background:#1b1b1b;"></div>
<div style="left:182.70px;top:652.00px;width:0.90px;height:253.00px;background:#3a3a3a;"></div>
<div style="left:176.70px;top:721.00px;width:5.80px;height:62.00px;background:#1ba24a;"></div>
<div style="left:176.70px;top:783.00px;width:5.80px;height:122.00px;background:#22ee5e;"></div>
<div style="left:176.70px;top:721.00px;width:5.80px;height:31.00px;background:;background:linear-gradient(#b4b422,#1ba24a)"></div>
<div style="left:183.80px;top:721.00px;width:5.80px;height:62.00px;background:#1ba24a;"></div>
<div style="left:183.80px;top:783.00px;width:5.80px;height:122.00px;background:#22ee5e;"></div>
<div style="left:183.80px;top:721.00px;width:5.80px;height:31.00px;background:;background:linear-gradient(#b4b422,#1ba24a)"></div>
<div style="left:176.70px;top:720.50px;width:5.80px;height:1.50px;background:#d7b52a;"></div>
<div style="left:183.80px;top:720.50px;width:5.80px;height:1.50px;background:#d7b52a;"></div>
<div style="left:176.30px;top:677.50px;width:13.60px;height:1.00px;background:#6a6a6a;"></div>
<div style="left:170.00px;top:657.50px;width:3.00px;height:1.00px;background:#5a5a5a;"></div>
<div style="left:193px;top:651.5px;font-size:11px;color:#b4b4b4;line-height:12px">6</div>
<div style="left:170.00px;top:678.00px;width:3.00px;height:1.00px;background:#5a5a5a;"></div>
<div style="left:193px;top:672px;font-size:11px;color:#b4b4b4;line-height:12px">0</div>
<div style="left:170.00px;top:702.60px;width:3.00px;height:1.00px;background:#5a5a5a;"></div>
<div style="left:193px;top:696.6px;font-size:11px;color:#b4b4b4;line-height:12px">6</div>
<div style="left:170.00px;top:727.50px;width:3.00px;height:1.00px;background:#5a5a5a;"></div>
<div style="left:193px;top:721.5px;font-size:11px;color:#b4b4b4;line-height:12px">12</div>
<div style="left:170.00px;top:752.50px;width:3.00px;height:1.00px;background:#5a5a5a;"></div>
<div style="left:193px;top:746.5px;font-size:11px;color:#b4b4b4;line-height:12px">18</div>
<div style="left:170.00px;top:778.00px;width:3.00px;height:1.00px;background:#5a5a5a;"></div>
<div style="left:193px;top:772px;font-size:11px;color:#b4b4b4;line-height:12px">24</div>
<div style="left:170.00px;top:803.30px;width:3.00px;height:1.00px;background:#5a5a5a;"></div>
<div style="left:193px;top:797.3px;font-size:11px;color:#b4b4b4;line-height:12px">30</div>
<div style="left:170.00px;top:825.20px;width:3.00px;height:1.00px;background:#5a5a5a;"></div>
<div style="left:193px;top:819.2px;font-size:11px;color:#b4b4b4;line-height:12px">36</div>
<div style="left:170.00px;top:844.70px;width:3.00px;height:1.00px;background:#5a5a5a;"></div>
<div style="left:193px;top:838.7px;font-size:11px;color:#b4b4b4;line-height:12px">42</div>
<div style="left:170.00px;top:861.00px;width:3.00px;height:1.00px;background:#5a5a5a;"></div>
<div style="left:193px;top:855px;font-size:11px;color:#b4b4b4;line-height:12px">48</div>
<div style="left:170.00px;top:876.40px;width:3.00px;height:1.00px;background:#5a5a5a;"></div>
<div style="left:193px;top:870.4px;font-size:11px;color:#b4b4b4;line-height:12px">54</div>
<div style="left:170.00px;top:890.40px;width:3.00px;height:1.00px;background:#5a5a5a;"></div>
<div style="left:193px;top:884.4px;font-size:11px;color:#b4b4b4;line-height:12px">60</div>
<svg style="left:123px;top:808px" width="32" height="36"><path d="M11 1.5H21L16 6Z" fill="#1a1a1a"/><path d="M8.2 30.4A13 13 0 1 1 23.8 30.4" stroke="#151515" stroke-width="2.2" fill="none"/><path d="M16 6V19" stroke="#151515" stroke-width="2.2"/></svg>
<div style="left:127.5px;top:845px;width:23.5px;height:23px;background:#fda752;color:#1a1a1a;font-size:15px;line-height:23px;text-align:center;font-weight:bold">2</div>
<div style="left:127.5px;top:873px;width:23.5px;height:13.5px;background:#232323;color:#d4d4d4;font-size:11px;line-height:13.5px;text-align:center;">S</div>
<div style="left:127.5px;top:891.5px;width:23.5px;height:13.5px;background:#232323;color:#d4d4d4;font-size:11px;line-height:13.5px;text-align:center;"></div>
<svg style="left:134.5px;top:893.5px" width="10" height="10"><circle cx="5" cy="5" r="4" fill="#7a7a7a"/></svg>
<div style="left:216.00px;top:644.00px;width:101.00px;height:270.00px;background:#363636;"></div>
<div style="left:216.00px;top:625.00px;width:101.00px;height:19.00px;background:#91c8fa;"></div>
<div class="hn" style="left:219.5px;top:629px;font-size:11.5px;color:#1c3558;line-height:13px;letter-spacing:0.2px">Percussion</div>
<svg style="left:299.7px;top:627.2px" width="14.6" height="14.6"><circle cx="7.3" cy="7.3" r="5.8999999999999995" stroke="#1c3558" stroke-width="1.3" fill="none"/><path d="M4.699999999999999 5.3H9.9M4.699999999999999 7.3H9.9M4.699999999999999 9.3H9.9" stroke="#1c3558" stroke-width="1.1"/></svg>
<div style="left:216.00px;top:914.50px;width:101.00px;height:6.00px;background:#91c8fa;"></div>
<div style="left:224px;top:652px;width:37px;height:13px;border-radius:6.5px;background:#242424;color:#e0e0e0;font-size:11.5px;line-height:13px;text-align:center">-21.2</div>
<div style="left:223.5px;top:671.2px;width:38.5px;height:13.799999999999955px;background:#222222;color:#e0e0e0;font-size:11.5px;line-height:13.799999999999955px;text-align:center;">0</div>
<svg style="left:266px;top:671px" width="13" height="14"><path d="M0 0L12.5 7L0 14Z" fill="#c4c4c4"/></svg>
<div style="left:279.30px;top:652.00px;width:13.60px;height:253.00px;background:#1b1b1b;"></div>
<div style="left:285.70px;top:652.00px;width:0.90px;height:253.00px;background:#3a3a3a;"></div>
<div style="left:279.70px;top:846.00px;width:5.80px;height:15.00px;background:#1ba24a;"></div>
<div style="left:279.70px;top:861.00px;width:5.80px;height:44.00px;background:#22ee5e;"></div>
<div style="left:286.80px;top:854.00px;width:5.80px;height:17.00px;background:#1ba24a;"></div>
<div style="left:286.80px;top:871.00px;width:5.80px;height:34.00px;background:#22ee5e;"></div>
<div style="left:279.70px;top:767.00px;width:5.80px;height:1.50px;background:#2be35f;"></div>
<div style="left:286.80px;top:804.00px;width:5.80px;height:1.50px;background:#2be35f;"></div>
<div style="left:279.30px;top:677.50px;width:13.60px;height:1.00px;background:#6a6a6a;"></div>
<div style="left:273.00px;top:657.50px;width:3.00px;height:1.00px;background:#5a5a5a;"></div>
<div style="left:296px;top:651.5px;font-size:11px;color:#b4b4b4;line-height:12px">6</div>
<div style="left:273.00px;top:678.00px;width:3.00px;height:1.00px;background:#5a5a5a;"></div>
<div style="left:296px;top:672px;font-size:11px;color:#b4b4b4;line-height:12px">0</div>
<div style="left:273.00px;top:702.60px;width:3.00px;height:1.00px;background:#5a5a5a;"></div>
<div style="left:296px;top:696.6px;font-size:11px;color:#b4b4b4;line-height:12px">6</div>
<div style="left:273.00px;top:727.50px;width:3.00px;height:1.00px;background:#5a5a5a;"></div>
<div style="left:296px;top:721.5px;font-size:11px;color:#b4b4b4;line-height:12px">12</div>
<div style="left:273.00px;top:752.50px;width:3.00px;height:1.00px;background:#5a5a5a;"></div>
<div style="left:296px;top:746.5px;font-size:11px;color:#b4b4b4;line-height:12px">18</div>
<div style="left:273.00px;top:778.00px;width:3.00px;height:1.00px;background:#5a5a5a;"></div>
<div style="left:296px;top:772px;font-size:11px;color:#b4b4b4;line-height:12px">24</div>
<div style="left:273.00px;top:803.30px;width:3.00px;height:1.00px;background:#5a5a5a;"></div>
<div style="left:296px;top:797.3px;font-size:11px;color:#b4b4b4;line-height:12px">30</div>
<div style="left:273.00px;top:825.20px;width:3.00px;height:1.00px;background:#5a5a5a;"></div>
<div style="left:296px;top:819.2px;font-size:11px;color:#b4b4b4;line-height:12px">36</div>
<div style="left:273.00px;top:844.70px;width:3.00px;height:1.00px;background:#5a5a5a;"></div>
<div style="left:296px;top:838.7px;font-size:11px;color:#b4b4b4;line-height:12px">42</div>
<div style="left:273.00px;top:861.00px;width:3.00px;height:1.00px;background:#5a5a5a;"></div>
<div style="left:296px;top:855px;font-size:11px;color:#b4b4b4;line-height:12px">48</div>
<div style="left:273.00px;top:876.40px;width:3.00px;height:1.00px;background:#5a5a5a;"></div>
<div style="left:296px;top:870.4px;font-size:11px;color:#b4b4b4;line-height:12px">54</div>
<div style="left:273.00px;top:890.40px;width:3.00px;height:1.00px;background:#5a5a5a;"></div>
<div style="left:296px;top:884.4px;font-size:11px;color:#b4b4b4;line-height:12px">60</div>
<svg style="left:226px;top:808px" width="32" height="36"><path d="M11 1.5H21L16 6Z" fill="#1a1a1a"/><path d="M8.2 30.4A13 13 0 1 1 23.8 30.4" stroke="#151515" stroke-width="2.2" fill="none"/><path d="M16 6V19" stroke="#151515" stroke-width="2.2"/></svg>
<div style="left:230.5px;top:845px;width:23.5px;height:23px;background:#fda752;color:#1a1a1a;font-size:15px;line-height:23px;text-align:center;font-weight:bold">3</div>
<div style="left:230.5px;top:873px;width:23.5px;height:13.5px;background:#232323;color:#d4d4d4;font-size:11px;line-height:13.5px;text-align:center;">S</div>
<div style="left:319.00px;top:644.00px;width:101.00px;height:270.00px;background:#454545;"></div>
<div style="left:319.00px;top:625.00px;width:101.00px;height:19.00px;background:#5ffde2;"></div>
<div class="hn" style="left:322.5px;top:629px;font-size:11.5px;color:#0e4a40;line-height:13px;letter-spacing:0.2px">Bass</div>
<div style="left:319.00px;top:914.50px;width:101.00px;height:6.00px;background:#5ffde2;"></div>
<div style="left:327px;top:652px;width:37px;height:13px;border-radius:6.5px;background:#242424;color:#e0e0e0;font-size:11.5px;line-height:13px;text-align:center">-10.8</div>
<div style="left:326.5px;top:671.2px;width:38.5px;height:13.799999999999955px;background:#222222;color:#e0e0e0;font-size:11.5px;line-height:13.799999999999955px;text-align:center;">-7.7</div>
<svg style="left:369px;top:704px" width="13" height="14"><path d="M0 0L12.5 7L0 14Z" fill="#c4c4c4"/></svg>
<div style="left:382.30px;top:652.00px;width:13.60px;height:253.00px;background:#1b1b1b;"></div>
<div style="left:388.70px;top:652.00px;width:0.90px;height:253.00px;background:#3a3a3a;"></div>
<div style="left:382.70px;top:765.00px;width:5.80px;height:140.00px;background:#22ee5e;"></div>
<div style="left:389.80px;top:765.00px;width:5.80px;height:140.00px;background:#22ee5e;"></div>
<div style="left:382.70px;top:723.00px;width:5.80px;height:1.50px;background:#d7b52a;"></div>
<div style="left:389.80px;top:723.00px;width:5.80px;height:1.50px;background:#d7b52a;"></div>
<div style="left:382.30px;top:677.50px;width:13.60px;height:1.00px;background:#6a6a6a;"></div>
<div style="left:376.00px;top:657.50px;width:3.00px;height:1.00px;background:#5a5a5a;"></div>
<div style="left:399px;top:651.5px;font-size:11px;color:#b4b4b4;line-height:12px">6</div>
<div style="left:376.00px;top:678.00px;width:3.00px;height:1.00px;background:#5a5a5a;"></div>
<div style="left:399px;top:672px;font-size:11px;color:#b4b4b4;line-height:12px">0</div>
<div style="left:376.00px;top:702.60px;width:3.00px;height:1.00px;background:#5a5a5a;"></div>
<div style="left:399px;top:696.6px;font-size:11px;color:#b4b4b4;line-height:12px">6</div>
<div style="left:376.00px;top:727.50px;width:3.00px;height:1.00px;background:#5a5a5a;"></div>
<div style="left:399px;top:721.5px;font-size:11px;color:#b4b4b4;line-height:12px">12</div>
<div style="left:376.00px;top:752.50px;width:3.00px;height:1.00px;background:#5a5a5a;"></div>
<div style="left:399px;top:746.5px;font-size:11px;color:#b4b4b4;line-height:12px">18</div>
<div style="left:376.00px;top:778.00px;width:3.00px;height:1.00px;background:#5a5a5a;"></div>
<div style="left:399px;top:772px;font-size:11px;color:#b4b4b4;line-height:12px">24</div>
<div style="left:376.00px;top:803.30px;width:3.00px;height:1.00px;background:#5a5a5a;"></div>
<div style="left:399px;top:797.3px;font-size:11px;color:#b4b4b4;line-height:12px">30</div>
<div style="left:376.00px;top:825.20px;width:3.00px;height:1.00px;background:#5a5a5a;"></div>
<div style="left:399px;top:819.2px;font-size:11px;color:#b4b4b4;line-height:12px">36</div>
<div style="left:376.00px;top:844.70px;width:3.00px;height:1.00px;background:#5a5a5a;"></div>
<div style="left:399px;top:838.7px;font-size:11px;color:#b4b4b4;line-height:12px">42</div>
<div style="left:376.00px;top:861.00px;width:3.00px;height:1.00px;background:#5a5a5a;"></div>
<div style="left:399px;top:855px;font-size:11px;color:#b4b4b4;line-height:12px">48</div>
<div style="left:376.00px;top:876.40px;width:3.00px;height:1.00px;background:#5a5a5a;"></div>
<div style="left:399px;top:870.4px;font-size:11px;color:#b4b4b4;line-height:12px">54</div>
<div style="left:376.00px;top:890.40px;width:3.00px;height:1.00px;background:#5a5a5a;"></div>
<div style="left:399px;top:884.4px;font-size:11px;color:#b4b4b4;line-height:12px">60</div>
<svg style="left:329px;top:808px" width="32" height="36"><path d="M11 1.5H21L16 6Z" fill="#1a1a1a"/><path d="M8.2 30.4A13 13 0 1 1 23.8 30.4" stroke="#151515" stroke-width="2.2" fill="none"/><path d="M16 6V19" stroke="#151515" stroke-width="2.2"/></svg>
<div style="left:333.5px;top:845px;width:23.5px;height:23px;background:#fda752;color:#1a1a1a;font-size:15px;line-height:23px;text-align:center;font-weight:bold">8</div>
<div style="left:333.5px;top:873px;width:23.5px;height:13.5px;background:#232323;color:#d4d4d4;font-size:11px;line-height:13.5px;text-align:center;">S</div>
<div style="left:333.5px;top:891.5px;width:23.5px;height:13.5px;background:#232323;color:#d4d4d4;font-size:11px;line-height:13.5px;text-align:center;"></div>
<svg style="left:340.5px;top:893.5px" width="10" height="10"><circle cx="5" cy="5" r="4.3" fill="#cfcfcf"/><path d="M5 2V5.3L3 7" stroke="#232323" stroke-width="1.3" fill="none"/></svg>
<div style="left:423.00px;top:644.00px;width:100.00px;height:270.00px;background:#363636;"></div>
<div style="left:423.00px;top:625.00px;width:100.00px;height:19.00px;background:#5ffde2;"></div>
<div class="hn" style="left:426.5px;top:629px;font-size:11.5px;color:#0e4a40;line-height:13px;letter-spacing:0.2px">Bass Drop</div>
<svg style="left:505.7px;top:627.2px" width="14.6" height="14.6"><circle cx="7.3" cy="7.3" r="5.8999999999999995" stroke="#0e4a40" stroke-width="1.3" fill="none"/><path d="M3.6999999999999997 5.3H10.9L7.3 10.3Z" fill="#0e4a40"/></svg>
<div style="left:423.00px;top:914.50px;width:100.00px;height:6.00px;background:#5ffde2;"></div>
<div style="left:431px;top:652px;width:37px;height:13px;border-radius:6.5px;background:#242424;color:#e0e0e0;font-size:11.5px;line-height:13px;text-align:center">&#8722;<span style="font-size:14px;line-height:10px;position:relative;top:-0.5px">&#8734;</span></div>
<div style="left:430.5px;top:671.2px;width:38.5px;height:13.799999999999955px;background:#222222;color:#e0e0e0;font-size:11.5px;line-height:13.799999999999955px;text-align:center;">-0.2</div>
<svg style="left:473px;top:671px" width="13" height="14"><path d="M0 0L12.5 7L0 14Z" fill="#c4c4c4"/></svg>
<div style="left:486.30px;top:652.00px;width:13.60px;height:253.00px;background:#1b1b1b;"></div>
<div style="left:492.70px;top:652.00px;width:0.90px;height:253.00px;background:#3a3a3a;"></div>
<div style="left:486.30px;top:677.50px;width:13.60px;height:1.00px;background:#6a6a6a;"></div>
<div style="left:480.00px;top:657.50px;width:3.00px;height:1.00px;background:#5a5a5a;"></div>
<div style="left:503px;top:651.5px;font-size:11px;color:#b4b4b4;line-height:12px">6</div>
<div style="left:480.00px;top:678.00px;width:3.00px;height:1.00px;background:#5a5a5a;"></div>
<div style="left:503px;top:672px;font-size:11px;color:#b4b4b4;line-height:12px">0</div>
<div style="left:480.00px;top:702.60px;width:3.00px;height:1.00px;background:#5a5a5a;"></div>
<div style="left:503px;top:696.6px;font-size:11px;color:#b4b4b4;line-height:12px">6</div>
<div style="left:480.00px;top:727.50px;width:3.00px;height:1.00px;background:#5a5a5a;"></div>
<div style="left:503px;top:721.5px;font-size:11px;color:#b4b4b4;line-height:12px">12</div>
<div style="left:480.00px;top:752.50px;width:3.00px;height:1.00px;background:#5a5a5a;"></div>
<div style="left:503px;top:746.5px;font-size:11px;color:#b4b4b4;line-height:12px">18</div>
<div style="left:480.00px;top:778.00px;width:3.00px;height:1.00px;background:#5a5a5a;"></div>
<div style="left:503px;top:772px;font-size:11px;color:#b4b4b4;line-height:12px">24</div>
<div style="left:480.00px;top:803.30px;width:3.00px;height:1.00px;background:#5a5a5a;"></div>
<div style="left:503px;top:797.3px;font-size:11px;color:#b4b4b4;line-height:12px">30</div>
<div style="left:480.00px;top:825.20px;width:3.00px;height:1.00px;background:#5a5a5a;"></div>
<div style="left:503px;top:819.2px;font-size:11px;color:#b4b4b4;line-height:12px">36</div>
<div style="left:480.00px;top:844.70px;width:3.00px;height:1.00px;background:#5a5a5a;"></div>
<div style="left:503px;top:838.7px;font-size:11px;color:#b4b4b4;line-height:12px">42</div>
<div style="left:480.00px;top:861.00px;width:3.00px;height:1.00px;background:#5a5a5a;"></div>
<div style="left:503px;top:855px;font-size:11px;color:#b4b4b4;line-height:12px">48</div>
<div style="left:480.00px;top:876.40px;width:3.00px;height:1.00px;background:#5a5a5a;"></div>
<div style="left:503px;top:870.4px;font-size:11px;color:#b4b4b4;line-height:12px">54</div>
<div style="left:480.00px;top:890.40px;width:3.00px;height:1.00px;background:#5a5a5a;"></div>
<div style="left:503px;top:884.4px;font-size:11px;color:#b4b4b4;line-height:12px">60</div>
<svg style="left:433px;top:808px" width="32" height="36"><path d="M11 1.5H21L16 6Z" fill="#1a1a1a"/><path d="M8.2 30.4A13 13 0 1 1 23.8 30.4" stroke="#151515" stroke-width="2.2" fill="none"/><path d="M16 6V19" stroke="#151515" stroke-width="2.2"/></svg>
<div style="left:437.5px;top:845px;width:23.5px;height:23px;background:#fda752;color:#1a1a1a;font-size:15px;line-height:23px;text-align:center;font-weight:bold">9</div>
<div style="left:437.5px;top:873px;width:23.5px;height:13.5px;background:#232323;color:#d4d4d4;font-size:11px;line-height:13.5px;text-align:center;">S</div>
<div style="left:437.5px;top:891.5px;width:23.5px;height:13.5px;background:#232323;color:#d4d4d4;font-size:11px;line-height:13.5px;text-align:center;"></div>
<svg style="left:444.5px;top:893.5px" width="10" height="10"><circle cx="5" cy="5" r="4.3" fill="#cfcfcf"/><path d="M5 2V5.3L3 7" stroke="#232323" stroke-width="1.3" fill="none"/></svg>
<div style="left:526.00px;top:644.00px;width:101.00px;height:270.00px;background:#363636;"></div>
<div style="left:526.00px;top:625.00px;width:101.00px;height:19.00px;background:#ecfaa7;"></div>
<div class="hn" style="left:529.5px;top:629px;font-size:11.5px;color:#3e4420;line-height:13px;letter-spacing:0.2px">Synth Riser</div>
<svg style="left:609.7px;top:627.2px" width="14.6" height="14.6"><circle cx="7.3" cy="7.3" r="5.8999999999999995" stroke="#3e4420" stroke-width="1.3" fill="none"/><path d="M3.6999999999999997 5.3H10.9L7.3 10.3Z" fill="#3e4420"/></svg>
<div style="left:526.00px;top:914.50px;width:101.00px;height:6.00px;background:#ecfaa7;"></div>
<div style="left:534px;top:652px;width:37px;height:13px;border-radius:6.5px;background:#242424;color:#e0e0e0;font-size:11.5px;line-height:13px;text-align:center">-28.2</div>
<div style="left:533.5px;top:671.2px;width:38.5px;height:13.799999999999955px;background:#222222;color:#e0e0e0;font-size:11.5px;line-height:13.799999999999955px;text-align:center;">-18.0</div>
<svg style="left:576px;top:746px" width="13" height="14"><path d="M0 0L12.5 7L0 14Z" fill="#c4c4c4"/></svg>
<div style="left:589.30px;top:652.00px;width:13.60px;height:253.00px;background:#1b1b1b;"></div>
<div style="left:595.70px;top:652.00px;width:0.90px;height:253.00px;background:#3a3a3a;"></div>
<div style="left:589.70px;top:812.00px;width:5.80px;height:18.00px;background:#1ba24a;"></div>
<div style="left:589.70px;top:830.00px;width:5.80px;height:75.00px;background:#22ee5e;"></div>
<div style="left:596.80px;top:810.00px;width:5.80px;height:20.00px;background:#1ba24a;"></div>
<div style="left:596.80px;top:830.00px;width:5.80px;height:75.00px;background:#22ee5e;"></div>
<div style="left:589.70px;top:798.00px;width:5.80px;height:1.50px;background:#2be35f;"></div>
<div style="left:596.80px;top:796.00px;width:5.80px;height:1.50px;background:#2be35f;"></div>
<div style="left:589.30px;top:677.50px;width:13.60px;height:1.00px;background:#6a6a6a;"></div>
<div style="left:583.00px;top:657.50px;width:3.00px;height:1.00px;background:#5a5a5a;"></div>
<div style="left:606px;top:651.5px;font-size:11px;color:#b4b4b4;line-height:12px">6</div>
<div style="left:583.00px;top:678.00px;width:3.00px;height:1.00px;background:#5a5a5a;"></div>
<div style="left:606px;top:672px;font-size:11px;color:#b4b4b4;line-height:12px">0</div>
<div style="left:583.00px;top:702.60px;width:3.00px;height:1.00px;background:#5a5a5a;"></div>
<div style="left:606px;top:696.6px;font-size:11px;color:#b4b4b4;line-height:12px">6</div>
<div style="left:583.00px;top:727.50px;width:3.00px;height:1.00px;background:#5a5a5a;"></div>
<div style="left:606px;top:721.5px;font-size:11px;color:#b4b4b4;line-height:12px">12</div>
<div style="left:583.00px;top:752.50px;width:3.00px;height:1.00px;background:#5a5a5a;"></div>
<div style="left:606px;top:746.5px;font-size:11px;color:#b4b4b4;line-height:12px">18</div>
<div style="left:583.00px;top:778.00px;width:3.00px;height:1.00px;background:#5a5a5a;"></div>
<div style="left:606px;top:772px;font-size:11px;color:#b4b4b4;line-height:12px">24</div>
<div style="left:583.00px;top:803.30px;width:3.00px;height:1.00px;background:#5a5a5a;"></div>
<div style="left:606px;top:797.3px;font-size:11px;color:#b4b4b4;line-height:12px">30</div>
<div style="left:583.00px;top:825.20px;width:3.00px;height:1.00px;background:#5a5a5a;"></div>
<div style="left:606px;top:819.2px;font-size:11px;color:#b4b4b4;line-height:12px">36</div>
<div style="left:583.00px;top:844.70px;width:3.00px;height:1.00px;background:#5a5a5a;"></div>
<div style="left:606px;top:838.7px;font-size:11px;color:#b4b4b4;line-height:12px">42</div>
<div style="left:583.00px;top:861.00px;width:3.00px;height:1.00px;background:#5a5a5a;"></div>
<div style="left:606px;top:855px;font-size:11px;color:#b4b4b4;line-height:12px">48</div>
<div style="left:583.00px;top:876.40px;width:3.00px;height:1.00px;background:#5a5a5a;"></div>
<div style="left:606px;top:870.4px;font-size:11px;color:#b4b4b4;line-height:12px">54</div>
<div style="left:583.00px;top:890.40px;width:3.00px;height:1.00px;background:#5a5a5a;"></div>
<div style="left:606px;top:884.4px;font-size:11px;color:#b4b4b4;line-height:12px">60</div>
<svg style="left:536px;top:808px" width="32" height="36"><path d="M11 1.5H21L16 6Z" fill="#1a1a1a"/><path d="M8.2 30.4A13 13 0 1 1 23.8 30.4" stroke="#151515" stroke-width="2.2" fill="none"/><path d="M16 6V19" stroke="#151515" stroke-width="2.2"/></svg>
<div style="left:540.5px;top:845px;width:23.5px;height:23px;background:#fda752;color:#1a1a1a;font-size:15px;line-height:23px;text-align:center;font-weight:bold">10</div>
<div style="left:540.5px;top:873px;width:23.5px;height:13.5px;background:#232323;color:#d4d4d4;font-size:11px;line-height:13.5px;text-align:center;">S</div>
<div style="left:540.5px;top:891.5px;width:23.5px;height:13.5px;background:#232323;color:#d4d4d4;font-size:11px;line-height:13.5px;text-align:center;"></div>
<svg style="left:547.5px;top:893.5px" width="10" height="10"><circle cx="5" cy="5" r="4.3" fill="#cfcfcf"/><path d="M5 2V5.3L3 7" stroke="#232323" stroke-width="1.3" fill="none"/></svg>
<div style="left:629.00px;top:644.00px;width:101.00px;height:270.00px;background:#363636;"></div>
<div style="left:629.00px;top:625.00px;width:101.00px;height:19.00px;background:#f8f07b;"></div>
<div class="hn" style="left:632.5px;top:629px;font-size:11.5px;color:#46421a;line-height:13px;letter-spacing:0.2px">Keys</div>
<div style="left:629.00px;top:914.50px;width:101.00px;height:6.00px;background:#f8f07b;"></div>
<div style="left:637px;top:652px;width:37px;height:13px;border-radius:6.5px;background:#242424;color:#e0e0e0;font-size:11.5px;line-height:13px;text-align:center">-16.0</div>
<div style="left:636.5px;top:671.2px;width:38.5px;height:13.799999999999955px;background:#222222;color:#e0e0e0;font-size:11.5px;line-height:13.799999999999955px;text-align:center;">-6.6</div>
<svg style="left:679px;top:699px" width="13" height="14"><path d="M0 0L12.5 7L0 14Z" fill="#c4c4c4"/></svg>
<div style="left:692.30px;top:652.00px;width:13.60px;height:253.00px;background:#1b1b1b;"></div>
<div style="left:698.70px;top:652.00px;width:0.90px;height:253.00px;background:#3a3a3a;"></div>
<div style="left:692.70px;top:901.00px;width:5.80px;height:4.00px;background:#22ee5e;"></div>
<div style="left:699.80px;top:901.00px;width:5.80px;height:4.00px;background:#22ee5e;"></div>
<div style="left:692.70px;top:768.00px;width:5.80px;height:1.50px;background:#2be35f;"></div>
<div style="left:699.80px;top:745.00px;width:5.80px;height:1.50px;background:#2be35f;"></div>
<div style="left:692.30px;top:677.50px;width:13.60px;height:1.00px;background:#6a6a6a;"></div>
<div style="left:686.00px;top:657.50px;width:3.00px;height:1.00px;background:#5a5a5a;"></div>
<div style="left:709px;top:651.5px;font-size:11px;color:#b4b4b4;line-height:12px">6</div>
<div style="left:686.00px;top:678.00px;width:3.00px;height:1.00px;background:#5a5a5a;"></div>
<div style="left:709px;top:672px;font-size:11px;color:#b4b4b4;line-height:12px">0</div>
<div style="left:686.00px;top:702.60px;width:3.00px;height:1.00px;background:#5a5a5a;"></div>
<div style="left:709px;top:696.6px;font-size:11px;color:#b4b4b4;line-height:12px">6</div>
<div style="left:686.00px;top:727.50px;width:3.00px;height:1.00px;background:#5a5a5a;"></div>
<div style="left:709px;top:721.5px;font-size:11px;color:#b4b4b4;line-height:12px">12</div>
<div style="left:686.00px;top:752.50px;width:3.00px;height:1.00px;background:#5a5a5a;"></div>
<div style="left:709px;top:746.5px;font-size:11px;color:#b4b4b4;line-height:12px">18</div>
<div style="left:686.00px;top:778.00px;width:3.00px;height:1.00px;background:#5a5a5a;"></div>
<div style="left:709px;top:772px;font-size:11px;color:#b4b4b4;line-height:12px">24</div>
<div style="left:686.00px;top:803.30px;width:3.00px;height:1.00px;background:#5a5a5a;"></div>
<div style="left:709px;top:797.3px;font-size:11px;color:#b4b4b4;line-height:12px">30</div>
<div style="left:686.00px;top:825.20px;width:3.00px;height:1.00px;background:#5a5a5a;"></div>
<div style="left:709px;top:819.2px;font-size:11px;color:#b4b4b4;line-height:12px">36</div>
<div style="left:686.00px;top:844.70px;width:3.00px;height:1.00px;background:#5a5a5a;"></div>
<div style="left:709px;top:838.7px;font-size:11px;color:#b4b4b4;line-height:12px">42</div>
<div style="left:686.00px;top:861.00px;width:3.00px;height:1.00px;background:#5a5a5a;"></div>
<div style="left:709px;top:855px;font-size:11px;color:#b4b4b4;line-height:12px">48</div>
<div style="left:686.00px;top:876.40px;width:3.00px;height:1.00px;background:#5a5a5a;"></div>
<div style="left:709px;top:870.4px;font-size:11px;color:#b4b4b4;line-height:12px">54</div>
<div style="left:686.00px;top:890.40px;width:3.00px;height:1.00px;background:#5a5a5a;"></div>
<div style="left:709px;top:884.4px;font-size:11px;color:#b4b4b4;line-height:12px">60</div>
<svg style="left:639px;top:808px" width="32" height="36"><path d="M11 1.5H21L16 6Z" fill="#1a1a1a"/><path d="M8.2 30.4A13 13 0 1 1 23.8 30.4" stroke="#151515" stroke-width="2.2" fill="none"/><path d="M16 6V19" stroke="#151515" stroke-width="2.2"/></svg>
<div style="left:643.5px;top:845px;width:23.5px;height:23px;background:#fda752;color:#1a1a1a;font-size:15px;line-height:23px;text-align:center;font-weight:bold">11</div>
<div style="left:643.5px;top:873px;width:23.5px;height:13.5px;background:#232323;color:#d4d4d4;font-size:11px;line-height:13.5px;text-align:center;">S</div>
<div style="left:643.5px;top:891.5px;width:23.5px;height:13.5px;background:#232323;color:#d4d4d4;font-size:11px;line-height:13.5px;text-align:center;"></div>
<svg style="left:650.5px;top:893.5px" width="10" height="10"><circle cx="5" cy="5" r="4.3" fill="#cfcfcf"/><path d="M5 2V5.3L3 7" stroke="#232323" stroke-width="1.3" fill="none"/></svg>
<div style="left:732.00px;top:644.00px;width:101.00px;height:270.00px;background:#363636;"></div>
<div style="left:732.00px;top:625.00px;width:101.00px;height:19.00px;background:#f6a470;"></div>
<div class="hn" style="left:735.5px;top:629px;font-size:11.5px;color:#552f18;line-height:13px;letter-spacing:0.2px">Pads</div>
<svg style="left:815.7px;top:627.2px" width="14.6" height="14.6"><circle cx="7.3" cy="7.3" r="5.8999999999999995" stroke="#552f18" stroke-width="1.3" fill="none"/><path d="M4.699999999999999 5.3H9.9M4.699999999999999 7.3H9.9M4.699999999999999 9.3H9.9" stroke="#552f18" stroke-width="1.1"/></svg>
<div style="left:732.00px;top:914.50px;width:101.00px;height:6.00px;background:#f6a470;"></div>
<div style="left:740px;top:652px;width:37px;height:13px;border-radius:6.5px;background:#242424;color:#e0e0e0;font-size:11.5px;line-height:13px;text-align:center">-14.4</div>
<div style="left:739.5px;top:671.2px;width:38.5px;height:13.799999999999955px;background:#222222;color:#e0e0e0;font-size:11.5px;line-height:13.799999999999955px;text-align:center;">0</div>
<svg style="left:782px;top:671px" width="13" height="14"><path d="M0 0L12.5 7L0 14Z" fill="#c4c4c4"/></svg>
<div style="left:795.30px;top:652.00px;width:13.60px;height:253.00px;background:#1b1b1b;"></div>
<div style="left:801.70px;top:652.00px;width:0.90px;height:253.00px;background:#3a3a3a;"></div>
<div style="left:795.70px;top:826.00px;width:5.80px;height:79.00px;background:#22ee5e;"></div>
<div style="left:802.80px;top:821.00px;width:5.80px;height:84.00px;background:#22ee5e;"></div>
<div style="left:795.70px;top:738.00px;width:5.80px;height:1.50px;background:#d7b52a;"></div>
<div style="left:802.80px;top:746.00px;width:5.80px;height:1.50px;background:#2be35f;"></div>
<div style="left:795.30px;top:677.50px;width:13.60px;height:1.00px;background:#6a6a6a;"></div>
<div style="left:789.00px;top:657.50px;width:3.00px;height:1.00px;background:#5a5a5a;"></div>
<div style="left:812px;top:651.5px;font-size:11px;color:#b4b4b4;line-height:12px">6</div>
<div style="left:789.00px;top:678.00px;width:3.00px;height:1.00px;background:#5a5a5a;"></div>
<div style="left:812px;top:672px;font-size:11px;color:#b4b4b4;line-height:12px">0</div>
<div style="left:789.00px;top:702.60px;width:3.00px;height:1.00px;background:#5a5a5a;"></div>
<div style="left:812px;top:696.6px;font-size:11px;color:#b4b4b4;line-height:12px">6</div>
<div style="left:789.00px;top:727.50px;width:3.00px;height:1.00px;background:#5a5a5a;"></div>
<div style="left:812px;top:721.5px;font-size:11px;color:#b4b4b4;line-height:12px">12</div>
<div style="left:789.00px;top:752.50px;width:3.00px;height:1.00px;background:#5a5a5a;"></div>
<div style="left:812px;top:746.5px;font-size:11px;color:#b4b4b4;line-height:12px">18</div>
<div style="left:789.00px;top:778.00px;width:3.00px;height:1.00px;background:#5a5a5a;"></div>
<div style="left:812px;top:772px;font-size:11px;color:#b4b4b4;line-height:12px">24</div>
<div style="left:789.00px;top:803.30px;width:3.00px;height:1.00px;background:#5a5a5a;"></div>
<div style="left:812px;top:797.3px;font-size:11px;color:#b4b4b4;line-height:12px">30</div>
<div style="left:789.00px;top:825.20px;width:3.00px;height:1.00px;background:#5a5a5a;"></div>
<div style="left:812px;top:819.2px;font-size:11px;color:#b4b4b4;line-height:12px">36</div>
<div style="left:789.00px;top:844.70px;width:3.00px;height:1.00px;background:#5a5a5a;"></div>
<div style="left:812px;top:838.7px;font-size:11px;color:#b4b4b4;line-height:12px">42</div>
<div style="left:789.00px;top:861.00px;width:3.00px;height:1.00px;background:#5a5a5a;"></div>
<div style="left:812px;top:855px;font-size:11px;color:#b4b4b4;line-height:12px">48</div>
<div style="left:789.00px;top:876.40px;width:3.00px;height:1.00px;background:#5a5a5a;"></div>
<div style="left:812px;top:870.4px;font-size:11px;color:#b4b4b4;line-height:12px">54</div>
<div style="left:789.00px;top:890.40px;width:3.00px;height:1.00px;background:#5a5a5a;"></div>
<div style="left:812px;top:884.4px;font-size:11px;color:#b4b4b4;line-height:12px">60</div>
<svg style="left:742px;top:808px" width="32" height="36"><path d="M11 1.5H21L16 6Z" fill="#1a1a1a"/><path d="M8.2 30.4A13 13 0 1 1 23.8 30.4" stroke="#151515" stroke-width="2.2" fill="none"/><path d="M16 6V19" stroke="#151515" stroke-width="2.2"/></svg>
<div style="left:746.5px;top:845px;width:23.5px;height:23px;background:#fda752;color:#1a1a1a;font-size:15px;line-height:23px;text-align:center;font-weight:bold">12</div>
<div style="left:746.5px;top:873px;width:23.5px;height:13.5px;background:#232323;color:#d4d4d4;font-size:11px;line-height:13.5px;text-align:center;">S</div>
<div style="left:836.00px;top:644.00px;width:100.00px;height:270.00px;background:#363636;"></div>
<div style="left:836.00px;top:625.00px;width:100.00px;height:19.00px;background:#fd8f9f;"></div>
<div class="hn" style="left:839.5px;top:629px;font-size:11.5px;color:#5a2030;line-height:13px;letter-spacing:0.2px">Ambience</div>
<div style="left:836.00px;top:914.50px;width:100.00px;height:6.00px;background:#fd8f9f;"></div>
<div style="left:844px;top:652px;width:37px;height:13px;border-radius:6.5px;background:#242424;color:#e0e0e0;font-size:11.5px;line-height:13px;text-align:center">-29.7</div>
<div style="left:843.5px;top:671.2px;width:38.5px;height:13.799999999999955px;background:#222222;color:#e0e0e0;font-size:11.5px;line-height:13.799999999999955px;text-align:center;">-8.3</div>
<svg style="left:886px;top:706px" width="13" height="14"><path d="M0 0L12.5 7L0 14Z" fill="#c4c4c4"/></svg>
<div style="left:899.30px;top:652.00px;width:13.60px;height:253.00px;background:#1b1b1b;"></div>
<div style="left:905.70px;top:652.00px;width:0.90px;height:253.00px;background:#3a3a3a;"></div>
<div style="left:899.70px;top:817.00px;width:5.80px;height:29.00px;background:#1ba24a;"></div>
<div style="left:899.70px;top:846.00px;width:5.80px;height:59.00px;background:#22ee5e;"></div>
<div style="left:906.80px;top:825.00px;width:5.80px;height:21.00px;background:#1ba24a;"></div>
<div style="left:906.80px;top:846.00px;width:5.80px;height:59.00px;background:#22ee5e;"></div>
<div style="left:899.70px;top:807.00px;width:5.80px;height:1.50px;background:#2be35f;"></div>
<div style="left:906.80px;top:803.00px;width:5.80px;height:1.50px;background:#2be35f;"></div>
<div style="left:899.30px;top:677.50px;width:13.60px;height:1.00px;background:#6a6a6a;"></div>
<div style="left:893.00px;top:657.50px;width:3.00px;height:1.00px;background:#5a5a5a;"></div>
<div style="left:916px;top:651.5px;font-size:11px;color:#b4b4b4;line-height:12px">6</div>
<div style="left:893.00px;top:678.00px;width:3.00px;height:1.00px;background:#5a5a5a;"></div>
<div style="left:916px;top:672px;font-size:11px;color:#b4b4b4;line-height:12px">0</div>
<div style="left:893.00px;top:702.60px;width:3.00px;height:1.00px;background:#5a5a5a;"></div>
<div style="left:916px;top:696.6px;font-size:11px;color:#b4b4b4;line-height:12px">6</div>
<div style="left:893.00px;top:727.50px;width:3.00px;height:1.00px;background:#5a5a5a;"></div>
<div style="left:916px;top:721.5px;font-size:11px;color:#b4b4b4;line-height:12px">12</div>
<div style="left:893.00px;top:752.50px;width:3.00px;height:1.00px;background:#5a5a5a;"></div>
<div style="left:916px;top:746.5px;font-size:11px;color:#b4b4b4;line-height:12px">18</div>
<div style="left:893.00px;top:778.00px;width:3.00px;height:1.00px;background:#5a5a5a;"></div>
<div style="left:916px;top:772px;font-size:11px;color:#b4b4b4;line-height:12px">24</div>
<div style="left:893.00px;top:803.30px;width:3.00px;height:1.00px;background:#5a5a5a;"></div>
<div style="left:916px;top:797.3px;font-size:11px;color:#b4b4b4;line-height:12px">30</div>
<div style="left:893.00px;top:825.20px;width:3.00px;height:1.00px;background:#5a5a5a;"></div>
<div style="left:916px;top:819.2px;font-size:11px;color:#b4b4b4;line-height:12px">36</div>
<div style="left:893.00px;top:844.70px;width:3.00px;height:1.00px;background:#5a5a5a;"></div>
<div style="left:916px;top:838.7px;font-size:11px;color:#b4b4b4;line-height:12px">42</div>
<div style="left:893.00px;top:861.00px;width:3.00px;height:1.00px;background:#5a5a5a;"></div>
<div style="left:916px;top:855px;font-size:11px;color:#b4b4b4;line-height:12px">48</div>
<div style="left:893.00px;top:876.40px;width:3.00px;height:1.00px;background:#5a5a5a;"></div>
<div style="left:916px;top:870.4px;font-size:11px;color:#b4b4b4;line-height:12px">54</div>
<div style="left:893.00px;top:890.40px;width:3.00px;height:1.00px;background:#5a5a5a;"></div>
<div style="left:916px;top:884.4px;font-size:11px;color:#b4b4b4;line-height:12px">60</div>
<svg style="left:846px;top:808px" width="32" height="36"><path d="M11 1.5H21L16 6Z" fill="#1a1a1a"/><path d="M8.2 30.4A13 13 0 1 1 23.8 30.4" stroke="#151515" stroke-width="2.2" fill="none"/><path d="M16 6V19" stroke="#151515" stroke-width="2.2"/></svg>
<div style="left:850.5px;top:845px;width:23.5px;height:23px;background:#fda752;color:#1a1a1a;font-size:15px;line-height:23px;text-align:center;font-weight:bold">16</div>
<div style="left:850.5px;top:873px;width:23.5px;height:13.5px;background:#232323;color:#d4d4d4;font-size:11px;line-height:13.5px;text-align:center;">S</div>
<div style="left:850.5px;top:891.5px;width:23.5px;height:13.5px;background:#232323;color:#d4d4d4;font-size:11px;line-height:13.5px;text-align:center;"></div>
<svg style="left:857.5px;top:893.5px" width="10" height="10"><circle cx="5" cy="5" r="4" fill="#7a7a7a"/></svg>
<div style="left:938.00px;top:644.00px;width:101.00px;height:270.00px;background:#363636;"></div>
<div style="left:938.00px;top:625.00px;width:101.00px;height:19.00px;background:#fd8f9f;"></div>
<div class="hn" style="left:941.5px;top:629px;font-size:11.5px;color:#5a2030;line-height:13px;letter-spacing:0.2px">Drone</div>
<div style="left:938.00px;top:914.50px;width:101.00px;height:6.00px;background:#fd8f9f;"></div>
<div style="left:946px;top:652px;width:37px;height:13px;border-radius:6.5px;background:#242424;color:#e0e0e0;font-size:11.5px;line-height:13px;text-align:center">-25.0</div>
<div style="left:945.5px;top:671.2px;width:38.5px;height:13.799999999999955px;background:#222222;color:#e0e0e0;font-size:11.5px;line-height:13.799999999999955px;text-align:center;">-15.6</div>
<svg style="left:988px;top:736px" width="13" height="14"><path d="M0 0L12.5 7L0 14Z" fill="#c4c4c4"/></svg>
<div style="left:1001.30px;top:652.00px;width:13.60px;height:253.00px;background:#1b1b1b;"></div>
<div style="left:1007.70px;top:652.00px;width:0.90px;height:253.00px;background:#3a3a3a;"></div>
<div style="left:1001.70px;top:794.00px;width:5.80px;height:35.00px;background:#1ba24a;"></div>
<div style="left:1001.70px;top:829.00px;width:5.80px;height:76.00px;background:#22ee5e;"></div>
<div style="left:1008.80px;top:800.00px;width:5.80px;height:21.00px;background:#1ba24a;"></div>
<div style="left:1008.80px;top:821.00px;width:5.80px;height:84.00px;background:#22ee5e;"></div>
<div style="left:1008.80px;top:783.00px;width:5.80px;height:1.50px;background:#2be35f;"></div>
<div style="left:1001.30px;top:677.50px;width:13.60px;height:1.00px;background:#6a6a6a;"></div>
<div style="left:995.00px;top:657.50px;width:3.00px;height:1.00px;background:#5a5a5a;"></div>
<div style="left:1018px;top:651.5px;font-size:11px;color:#b4b4b4;line-height:12px">6</div>
<div style="left:995.00px;top:678.00px;width:3.00px;height:1.00px;background:#5a5a5a;"></div>
<div style="left:1018px;top:672px;font-size:11px;color:#b4b4b4;line-height:12px">0</div>
<div style="left:995.00px;top:702.60px;width:3.00px;height:1.00px;background:#5a5a5a;"></div>
<div style="left:1018px;top:696.6px;font-size:11px;color:#b4b4b4;line-height:12px">6</div>
<div style="left:995.00px;top:727.50px;width:3.00px;height:1.00px;background:#5a5a5a;"></div>
<div style="left:1018px;top:721.5px;font-size:11px;color:#b4b4b4;line-height:12px">12</div>
<div style="left:995.00px;top:752.50px;width:3.00px;height:1.00px;background:#5a5a5a;"></div>
<div style="left:1018px;top:746.5px;font-size:11px;color:#b4b4b4;line-height:12px">18</div>
<div style="left:995.00px;top:778.00px;width:3.00px;height:1.00px;background:#5a5a5a;"></div>
<div style="left:1018px;top:772px;font-size:11px;color:#b4b4b4;line-height:12px">24</div>
<div style="left:995.00px;top:803.30px;width:3.00px;height:1.00px;background:#5a5a5a;"></div>
<div style="left:1018px;top:797.3px;font-size:11px;color:#b4b4b4;line-height:12px">30</div>
<div style="left:995.00px;top:825.20px;width:3.00px;height:1.00px;background:#5a5a5a;"></div>
<div style="left:1018px;top:819.2px;font-size:11px;color:#b4b4b4;line-height:12px">36</div>
<div style="left:995.00px;top:844.70px;width:3.00px;height:1.00px;background:#5a5a5a;"></div>
<div style="left:1018px;top:838.7px;font-size:11px;color:#b4b4b4;line-height:12px">42</div>
<div style="left:995.00px;top:861.00px;width:3.00px;height:1.00px;background:#5a5a5a;"></div>
<div style="left:1018px;top:855px;font-size:11px;color:#b4b4b4;line-height:12px">48</div>
<div style="left:995.00px;top:876.40px;width:3.00px;height:1.00px;background:#5a5a5a;"></div>
<div style="left:1018px;top:870.4px;font-size:11px;color:#b4b4b4;line-height:12px">54</div>
<div style="left:995.00px;top:890.40px;width:3.00px;height:1.00px;background:#5a5a5a;"></div>
<div style="left:1018px;top:884.4px;font-size:11px;color:#b4b4b4;line-height:12px">60</div>
<svg style="left:948px;top:808px" width="32" height="36"><path d="M11 1.5H21L16 6Z" fill="#1a1a1a"/><path d="M8.2 30.4A13 13 0 1 1 23.8 30.4" stroke="#151515" stroke-width="2.2" fill="none"/><path d="M16 6V19" stroke="#151515" stroke-width="2.2"/></svg>
<div style="left:952.5px;top:845px;width:23.5px;height:23px;background:#fda752;color:#1a1a1a;font-size:15px;line-height:23px;text-align:center;font-weight:bold">17</div>
<div style="left:952.5px;top:873px;width:23.5px;height:13.5px;background:#232323;color:#d4d4d4;font-size:11px;line-height:13.5px;text-align:center;">S</div>
<div style="left:952.5px;top:891.5px;width:23.5px;height:13.5px;background:#232323;color:#d4d4d4;font-size:11px;line-height:13.5px;text-align:center;"></div>
<svg style="left:959.5px;top:893.5px" width="10" height="10"><circle cx="5" cy="5" r="4" fill="#7a7a7a"/></svg>
<div style="left:1042.00px;top:644.00px;width:100.00px;height:270.00px;background:#363636;"></div>
<div style="left:1042.00px;top:625.00px;width:100.00px;height:19.00px;background:#d76ae5;"></div>
<div class="hn" style="left:1045.5px;top:629px;font-size:11.5px;color:#461455;line-height:13px;letter-spacing:0.2px">FX</div>
<div style="left:1042.00px;top:914.50px;width:100.00px;height:6.00px;background:#d76ae5;"></div>
<div style="left:1050px;top:652px;width:37px;height:13px;border-radius:6.5px;background:#242424;color:#e0e0e0;font-size:11.5px;line-height:13px;text-align:center">-19.6</div>
<div style="left:1049.5px;top:671.2px;width:38.5px;height:13.799999999999955px;background:#222222;color:#e0e0e0;font-size:11.5px;line-height:13.799999999999955px;text-align:center;">-4.1</div>
<svg style="left:1092px;top:688px" width="13" height="14"><path d="M0 0L12.5 7L0 14Z" fill="#c4c4c4"/></svg>
<div style="left:1105.30px;top:652.00px;width:13.60px;height:253.00px;background:#1b1b1b;"></div>
<div style="left:1111.70px;top:652.00px;width:0.90px;height:253.00px;background:#3a3a3a;"></div>
<div style="left:1105.70px;top:772.00px;width:5.80px;height:29.00px;background:#1ba24a;"></div>
<div style="left:1105.70px;top:801.00px;width:5.80px;height:104.00px;background:#22ee5e;"></div>
<div style="left:1112.80px;top:766.00px;width:5.80px;height:27.00px;background:#1ba24a;"></div>
<div style="left:1112.80px;top:793.00px;width:5.80px;height:112.00px;background:#22ee5e;"></div>
<div style="left:1105.70px;top:765.00px;width:5.80px;height:1.50px;background:#2be35f;"></div>
<div style="left:1112.80px;top:760.00px;width:5.80px;height:1.50px;background:#2be35f;"></div>
<div style="left:1105.30px;top:677.50px;width:13.60px;height:1.00px;background:#6a6a6a;"></div>
<div style="left:1099.00px;top:657.50px;width:3.00px;height:1.00px;background:#5a5a5a;"></div>
<div style="left:1122px;top:651.5px;font-size:11px;color:#b4b4b4;line-height:12px">6</div>
<div style="left:1099.00px;top:678.00px;width:3.00px;height:1.00px;background:#5a5a5a;"></div>
<div style="left:1122px;top:672px;font-size:11px;color:#b4b4b4;line-height:12px">0</div>
<div style="left:1099.00px;top:702.60px;width:3.00px;height:1.00px;background:#5a5a5a;"></div>
<div style="left:1122px;top:696.6px;font-size:11px;color:#b4b4b4;line-height:12px">6</div>
<div style="left:1099.00px;top:727.50px;width:3.00px;height:1.00px;background:#5a5a5a;"></div>
<div style="left:1122px;top:721.5px;font-size:11px;color:#b4b4b4;line-height:12px">12</div>
<div style="left:1099.00px;top:752.50px;width:3.00px;height:1.00px;background:#5a5a5a;"></div>
<div style="left:1122px;top:746.5px;font-size:11px;color:#b4b4b4;line-height:12px">18</div>
<div style="left:1099.00px;top:778.00px;width:3.00px;height:1.00px;background:#5a5a5a;"></div>
<div style="left:1122px;top:772px;font-size:11px;color:#b4b4b4;line-height:12px">24</div>
<div style="left:1099.00px;top:803.30px;width:3.00px;height:1.00px;background:#5a5a5a;"></div>
<div style="left:1122px;top:797.3px;font-size:11px;color:#b4b4b4;line-height:12px">30</div>
<div style="left:1099.00px;top:825.20px;width:3.00px;height:1.00px;background:#5a5a5a;"></div>
<div style="left:1122px;top:819.2px;font-size:11px;color:#b4b4b4;line-height:12px">36</div>
<div style="left:1099.00px;top:844.70px;width:3.00px;height:1.00px;background:#5a5a5a;"></div>
<div style="left:1122px;top:838.7px;font-size:11px;color:#b4b4b4;line-height:12px">42</div>
<div style="left:1099.00px;top:861.00px;width:3.00px;height:1.00px;background:#5a5a5a;"></div>
<div style="left:1122px;top:855px;font-size:11px;color:#b4b4b4;line-height:12px">48</div>
<div style="left:1099.00px;top:876.40px;width:3.00px;height:1.00px;background:#5a5a5a;"></div>
<div style="left:1122px;top:870.4px;font-size:11px;color:#b4b4b4;line-height:12px">54</div>
<div style="left:1099.00px;top:890.40px;width:3.00px;height:1.00px;background:#5a5a5a;"></div>
<div style="left:1122px;top:884.4px;font-size:11px;color:#b4b4b4;line-height:12px">60</div>
<svg style="left:1052px;top:808px" width="32" height="36"><path d="M11 1.5H21L16 6Z" fill="#1a1a1a"/><path d="M8.2 30.4A13 13 0 1 1 23.8 30.4" stroke="#151515" stroke-width="2.2" fill="none"/><path d="M16 6V19" stroke="#151515" stroke-width="2.2"/></svg>
<div style="left:1056.5px;top:845px;width:23.5px;height:23px;background:#fda752;color:#1a1a1a;font-size:15px;line-height:23px;text-align:center;font-weight:bold">18</div>
<div style="left:1056.5px;top:873px;width:23.5px;height:13.5px;background:#232323;color:#d4d4d4;font-size:11px;line-height:13.5px;text-align:center;">S</div>
<div style="left:1056.5px;top:891.5px;width:23.5px;height:13.5px;background:#232323;color:#d4d4d4;font-size:11px;line-height:13.5px;text-align:center;"></div>
<svg style="left:1063.5px;top:893.5px" width="10" height="10"><circle cx="5" cy="5" r="4" fill="#7a7a7a"/></svg>
<div style="left:0;top:0;width:1235.5px;height:960px;overflow:hidden">
<div style="left:1145.00px;top:644.00px;width:92.00px;height:270.00px;background:#363636;"></div>
<div style="left:1145.00px;top:625.00px;width:92.00px;height:19.00px;background:#d76ae5;"></div>
<div class="hn" style="left:1148.5px;top:629px;font-size:11.5px;color:#461455;line-height:13px;letter-spacing:0.2px">Zap</div>
<div style="left:1145.00px;top:914.50px;width:92.00px;height:6.00px;background:#d76ae5;"></div>
<div style="left:1163px;top:652px;width:37px;height:13px;border-radius:6.5px;background:#242424;color:#e0e0e0;font-size:11.5px;line-height:13px;text-align:center">-24.6</div>
<div style="left:1162.5px;top:671.2px;width:38.5px;height:13.799999999999955px;background:#222222;color:#e0e0e0;font-size:11.5px;line-height:13.799999999999955px;text-align:center;">-19.4</div>
<svg style="left:1205px;top:752px" width="13" height="14"><path d="M0 0L12.5 7L0 14Z" fill="#c4c4c4"/></svg>
<div style="left:1218.30px;top:652.00px;width:13.60px;height:253.00px;background:#1b1b1b;"></div>
<div style="left:1224.70px;top:652.00px;width:0.90px;height:253.00px;background:#3a3a3a;"></div>
<div style="left:1218.70px;top:798.00px;width:5.80px;height:31.00px;background:#1ba24a;"></div>
<div style="left:1218.70px;top:829.00px;width:5.80px;height:76.00px;background:#22ee5e;"></div>
<div style="left:1225.80px;top:793.00px;width:5.80px;height:34.00px;background:#1ba24a;"></div>
<div style="left:1225.80px;top:827.00px;width:5.80px;height:78.00px;background:#22ee5e;"></div>
<div style="left:1218.70px;top:781.00px;width:5.80px;height:1.50px;background:#2be35f;"></div>
<div style="left:1225.80px;top:784.00px;width:5.80px;height:1.50px;background:#2be35f;"></div>
<div style="left:1218.30px;top:677.50px;width:13.60px;height:1.00px;background:#6a6a6a;"></div>
<div style="left:1212.00px;top:657.50px;width:3.00px;height:1.00px;background:#5a5a5a;"></div>
<div style="left:1235px;top:651.5px;font-size:11px;color:#b4b4b4;line-height:12px">6</div>
<div style="left:1212.00px;top:678.00px;width:3.00px;height:1.00px;background:#5a5a5a;"></div>
<div style="left:1235px;top:672px;font-size:11px;color:#b4b4b4;line-height:12px">0</div>
<div style="left:1212.00px;top:702.60px;width:3.00px;height:1.00px;background:#5a5a5a;"></div>
<div style="left:1235px;top:696.6px;font-size:11px;color:#b4b4b4;line-height:12px">6</div>
<div style="left:1212.00px;top:727.50px;width:3.00px;height:1.00px;background:#5a5a5a;"></div>
<div style="left:1235px;top:721.5px;font-size:11px;color:#b4b4b4;line-height:12px">12</div>
<div style="left:1212.00px;top:752.50px;width:3.00px;height:1.00px;background:#5a5a5a;"></div>
<div style="left:1235px;top:746.5px;font-size:11px;color:#b4b4b4;line-height:12px">18</div>
<div style="left:1212.00px;top:778.00px;width:3.00px;height:1.00px;background:#5a5a5a;"></div>
<div style="left:1235px;top:772px;font-size:11px;color:#b4b4b4;line-height:12px">24</div>
<div style="left:1212.00px;top:803.30px;width:3.00px;height:1.00px;background:#5a5a5a;"></div>
<div style="left:1235px;top:797.3px;font-size:11px;color:#b4b4b4;line-height:12px">30</div>
<div style="left:1212.00px;top:825.20px;width:3.00px;height:1.00px;background:#5a5a5a;"></div>
<div style="left:1235px;top:819.2px;font-size:11px;color:#b4b4b4;line-height:12px">36</div>
<div style="left:1212.00px;top:844.70px;width:3.00px;height:1.00px;background:#5a5a5a;"></div>
<div style="left:1235px;top:838.7px;font-size:11px;color:#b4b4b4;line-height:12px">42</div>
<div style="left:1212.00px;top:861.00px;width:3.00px;height:1.00px;background:#5a5a5a;"></div>
<div style="left:1235px;top:855px;font-size:11px;color:#b4b4b4;line-height:12px">48</div>
<div style="left:1212.00px;top:876.40px;width:3.00px;height:1.00px;background:#5a5a5a;"></div>
<div style="left:1235px;top:870.4px;font-size:11px;color:#b4b4b4;line-height:12px">54</div>
<div style="left:1212.00px;top:890.40px;width:3.00px;height:1.00px;background:#5a5a5a;"></div>
<div style="left:1235px;top:884.4px;font-size:11px;color:#b4b4b4;line-height:12px">60</div>
<svg style="left:1165px;top:808px" width="32" height="36"><path d="M11 1.5H21L16 6Z" fill="#1a1a1a"/><path d="M8.2 30.4A13 13 0 1 1 23.8 30.4" stroke="#151515" stroke-width="2.2" fill="none"/><path d="M16 6V19" stroke="#151515" stroke-width="2.2"/></svg>
<div style="left:1169.5px;top:845px;width:23.5px;height:23px;background:#fda752;color:#1a1a1a;font-size:15px;line-height:23px;text-align:center;font-weight:bold">19</div>
<div style="left:1169.5px;top:873px;width:23.5px;height:13.5px;background:#232323;color:#d4d4d4;font-size:11px;line-height:13.5px;text-align:center;">S</div>
<div style="left:1169.5px;top:891.5px;width:23.5px;height:13.5px;background:#232323;color:#d4d4d4;font-size:11px;line-height:13.5px;text-align:center;"></div>
<svg style="left:1176.5px;top:893.5px" width="10" height="10"><circle cx="5" cy="5" r="4.3" fill="#cfcfcf"/><path d="M5 2V5.3L3 7" stroke="#232323" stroke-width="1.3" fill="none"/></svg>
</div>
<div style="left:1240.00px;top:644.00px;width:101.00px;height:270.00px;background:#363636;"></div>
<div style="left:1240.00px;top:625.00px;width:101.00px;height:19.00px;background:#d0d0d0;"></div>
<div class="hn" style="left:1243.5px;top:629px;font-size:11.5px;color:#383838;line-height:13px;letter-spacing:0.2px">A Reverb</div>
<div style="left:1240.00px;top:914.50px;width:101.00px;height:6.00px;background:#d0d0d0;"></div>
<div style="left:1248px;top:652px;width:37px;height:13px;border-radius:6.5px;background:#242424;color:#e0e0e0;font-size:11.5px;line-height:13px;text-align:center">-50.9</div>
<div style="left:1247.5px;top:671.2px;width:38.5px;height:13.799999999999955px;background:#222222;color:#e0e0e0;font-size:11.5px;line-height:13.799999999999955px;text-align:center;">0</div>
<svg style="left:1290px;top:671px" width="13" height="14"><path d="M0 0L12.5 7L0 14Z" fill="#c4c4c4"/></svg>
<div style="left:1303.30px;top:652.00px;width:13.60px;height:253.00px;background:#1b1b1b;"></div>
<div style="left:1309.70px;top:652.00px;width:0.90px;height:253.00px;background:#3a3a3a;"></div>
<div style="left:1303.70px;top:876.00px;width:5.80px;height:17.00px;background:#1ba24a;"></div>
<div style="left:1303.70px;top:893.00px;width:5.80px;height:12.00px;background:#22ee5e;"></div>
<div style="left:1310.80px;top:873.00px;width:5.80px;height:20.00px;background:#1ba24a;"></div>
<div style="left:1310.80px;top:893.00px;width:5.80px;height:12.00px;background:#22ee5e;"></div>
<div style="left:1303.70px;top:869.00px;width:5.80px;height:1.50px;background:#2be35f;"></div>
<div style="left:1310.80px;top:873.00px;width:5.80px;height:1.50px;background:#2be35f;"></div>
<div style="left:1303.30px;top:677.50px;width:13.60px;height:1.00px;background:#6a6a6a;"></div>
<div style="left:1297.00px;top:657.50px;width:3.00px;height:1.00px;background:#5a5a5a;"></div>
<div style="left:1320px;top:651.5px;font-size:11px;color:#b4b4b4;line-height:12px">6</div>
<div style="left:1297.00px;top:678.00px;width:3.00px;height:1.00px;background:#5a5a5a;"></div>
<div style="left:1320px;top:672px;font-size:11px;color:#b4b4b4;line-height:12px">0</div>
<div style="left:1297.00px;top:702.60px;width:3.00px;height:1.00px;background:#5a5a5a;"></div>
<div style="left:1320px;top:696.6px;font-size:11px;color:#b4b4b4;line-height:12px">6</div>
<div style="left:1297.00px;top:727.50px;width:3.00px;height:1.00px;background:#5a5a5a;"></div>
<div style="left:1320px;top:721.5px;font-size:11px;color:#b4b4b4;line-height:12px">12</div>
<div style="left:1297.00px;top:752.50px;width:3.00px;height:1.00px;background:#5a5a5a;"></div>
<div style="left:1320px;top:746.5px;font-size:11px;color:#b4b4b4;line-height:12px">18</div>
<div style="left:1297.00px;top:778.00px;width:3.00px;height:1.00px;background:#5a5a5a;"></div>
<div style="left:1320px;top:772px;font-size:11px;color:#b4b4b4;line-height:12px">24</div>
<div style="left:1297.00px;top:803.30px;width:3.00px;height:1.00px;background:#5a5a5a;"></div>
<div style="left:1320px;top:797.3px;font-size:11px;color:#b4b4b4;line-height:12px">30</div>
<div style="left:1297.00px;top:825.20px;width:3.00px;height:1.00px;background:#5a5a5a;"></div>
<div style="left:1320px;top:819.2px;font-size:11px;color:#b4b4b4;line-height:12px">36</div>
<div style="left:1297.00px;top:844.70px;width:3.00px;height:1.00px;background:#5a5a5a;"></div>
<div style="left:1320px;top:838.7px;font-size:11px;color:#b4b4b4;line-height:12px">42</div>
<div style="left:1297.00px;top:861.00px;width:3.00px;height:1.00px;background:#5a5a5a;"></div>
<div style="left:1320px;top:855px;font-size:11px;color:#b4b4b4;line-height:12px">48</div>
<div style="left:1297.00px;top:876.40px;width:3.00px;height:1.00px;background:#5a5a5a;"></div>
<div style="left:1320px;top:870.4px;font-size:11px;color:#b4b4b4;line-height:12px">54</div>
<div style="left:1297.00px;top:890.40px;width:3.00px;height:1.00px;background:#5a5a5a;"></div>
<div style="left:1320px;top:884.4px;font-size:11px;color:#b4b4b4;line-height:12px">60</div>
<svg style="left:1250px;top:808px" width="32" height="36"><path d="M11 1.5H21L16 6Z" fill="#1a1a1a"/><path d="M8.2 30.4A13 13 0 1 1 23.8 30.4" stroke="#151515" stroke-width="2.2" fill="none"/><path d="M16 6V19" stroke="#151515" stroke-width="2.2"/></svg>
<div style="left:1254.5px;top:845px;width:23.5px;height:23px;background:#fda752;color:#1a1a1a;font-size:15px;line-height:23px;text-align:center;font-weight:bold">A</div>
<div style="left:1254.5px;top:873px;width:23.5px;height:13.5px;background:#232323;color:#d4d4d4;font-size:11px;line-height:13.5px;text-align:center;">S</div>
<div style="left:1343.00px;top:644.00px;width:101.00px;height:270.00px;background:#363636;"></div>
<div style="left:1343.00px;top:625.00px;width:101.00px;height:19.00px;background:#d0d0d0;"></div>
<div class="hn" style="left:1346.5px;top:629px;font-size:11.5px;color:#383838;line-height:13px;letter-spacing:0.2px">B Delay</div>
<div style="left:1343.00px;top:914.50px;width:101.00px;height:6.00px;background:#d0d0d0;"></div>
<div style="left:1351px;top:652px;width:37px;height:13px;border-radius:6.5px;background:#242424;color:#e0e0e0;font-size:11.5px;line-height:13px;text-align:center">-55.2</div>
<div style="left:1350.5px;top:671.2px;width:38.5px;height:13.799999999999955px;background:#222222;color:#e0e0e0;font-size:11.5px;line-height:13.799999999999955px;text-align:center;">0</div>
<svg style="left:1393px;top:671px" width="13" height="14"><path d="M0 0L12.5 7L0 14Z" fill="#c4c4c4"/></svg>
<div style="left:1406.30px;top:652.00px;width:13.60px;height:253.00px;background:#1b1b1b;"></div>
<div style="left:1412.70px;top:652.00px;width:0.90px;height:253.00px;background:#3a3a3a;"></div>
<div style="left:1406.70px;top:899.00px;width:5.80px;height:6.00px;background:#22ee5e;"></div>
<div style="left:1413.80px;top:889.00px;width:5.80px;height:16.00px;background:#22ee5e;"></div>
<div style="left:1406.70px;top:881.00px;width:5.80px;height:1.50px;background:#2be35f;"></div>
<div style="left:1413.80px;top:879.00px;width:5.80px;height:1.50px;background:#2be35f;"></div>
<div style="left:1406.30px;top:677.50px;width:13.60px;height:1.00px;background:#6a6a6a;"></div>
<div style="left:1400.00px;top:657.50px;width:3.00px;height:1.00px;background:#5a5a5a;"></div>
<div style="left:1423px;top:651.5px;font-size:11px;color:#b4b4b4;line-height:12px">6</div>
<div style="left:1400.00px;top:678.00px;width:3.00px;height:1.00px;background:#5a5a5a;"></div>
<div style="left:1423px;top:672px;font-size:11px;color:#b4b4b4;line-height:12px">0</div>
<div style="left:1400.00px;top:702.60px;width:3.00px;height:1.00px;background:#5a5a5a;"></div>
<div style="left:1423px;top:696.6px;font-size:11px;color:#b4b4b4;line-height:12px">6</div>
<div style="left:1400.00px;top:727.50px;width:3.00px;height:1.00px;background:#5a5a5a;"></div>
<div style="left:1423px;top:721.5px;font-size:11px;color:#b4b4b4;line-height:12px">12</div>
<div style="left:1400.00px;top:752.50px;width:3.00px;height:1.00px;background:#5a5a5a;"></div>
<div style="left:1423px;top:746.5px;font-size:11px;color:#b4b4b4;line-height:12px">18</div>
<div style="left:1400.00px;top:778.00px;width:3.00px;height:1.00px;background:#5a5a5a;"></div>
<div style="left:1423px;top:772px;font-size:11px;color:#b4b4b4;line-height:12px">24</div>
<div style="left:1400.00px;top:803.30px;width:3.00px;height:1.00px;background:#5a5a5a;"></div>
<div style="left:1423px;top:797.3px;font-size:11px;color:#b4b4b4;line-height:12px">30</div>
<div style="left:1400.00px;top:825.20px;width:3.00px;height:1.00px;background:#5a5a5a;"></div>
<div style="left:1423px;top:819.2px;font-size:11px;color:#b4b4b4;line-height:12px">36</div>
<div style="left:1400.00px;top:844.70px;width:3.00px;height:1.00px;background:#5a5a5a;"></div>
<div style="left:1423px;top:838.7px;font-size:11px;color:#b4b4b4;line-height:12px">42</div>
<div style="left:1400.00px;top:861.00px;width:3.00px;height:1.00px;background:#5a5a5a;"></div>
<div style="left:1423px;top:855px;font-size:11px;color:#b4b4b4;line-height:12px">48</div>
<div style="left:1400.00px;top:876.40px;width:3.00px;height:1.00px;background:#5a5a5a;"></div>
<div style="left:1423px;top:870.4px;font-size:11px;color:#b4b4b4;line-height:12px">54</div>
<div style="left:1400.00px;top:890.40px;width:3.00px;height:1.00px;background:#5a5a5a;"></div>
<div style="left:1423px;top:884.4px;font-size:11px;color:#b4b4b4;line-height:12px">60</div>
<svg style="left:1353px;top:808px" width="32" height="36"><path d="M11 1.5H21L16 6Z" fill="#1a1a1a"/><path d="M8.2 30.4A13 13 0 1 1 23.8 30.4" stroke="#151515" stroke-width="2.2" fill="none"/><path d="M16 6V19" stroke="#151515" stroke-width="2.2"/></svg>
<div style="left:1357.5px;top:845px;width:23.5px;height:23px;background:#fda752;color:#1a1a1a;font-size:15px;line-height:23px;text-align:center;font-weight:bold">B</div>
<div style="left:1357.5px;top:873px;width:23.5px;height:13.5px;background:#232323;color:#d4d4d4;font-size:11px;line-height:13.5px;text-align:center;">S</div>
<div style="left:1447.00px;top:644.00px;width:107.00px;height:270.00px;background:#363636;"></div>
<div style="left:1447.00px;top:625.00px;width:107.00px;height:19.00px;background:#ffffff;"></div>
<div class="hn" style="left:1450.5px;top:629px;font-size:11.5px;color:#303030;line-height:13px;letter-spacing:0.2px">Main</div>
<div style="left:1447.00px;top:914.50px;width:107.00px;height:6.00px;background:#ffffff;"></div>
<div style="left:1458.2px;top:652px;width:37px;height:13px;border-radius:6.5px;background:#242424;color:#e0e0e0;font-size:11.5px;line-height:13px;text-align:center">-0.30</div>
<div style="left:1457.7px;top:671.2px;width:38.5px;height:13.799999999999955px;background:#222222;color:#e0e0e0;font-size:11.5px;line-height:13.799999999999955px;text-align:center;">0</div>
<svg style="left:1500.2px;top:671px" width="13" height="14"><path d="M0 0L12.5 7L0 14Z" fill="#c4c4c4"/></svg>
<div style="left:1513.50px;top:652.00px;width:13.60px;height:253.00px;background:#1b1b1b;"></div>
<div style="left:1519.90px;top:652.00px;width:0.90px;height:253.00px;background:#3a3a3a;"></div>
<div style="left:1513.90px;top:740.00px;width:5.80px;height:10.00px;background:#1ba24a;"></div>
<div style="left:1513.90px;top:750.00px;width:5.80px;height:155.00px;background:#22ee5e;"></div>
<div style="left:1513.90px;top:740.00px;width:5.80px;height:10.00px;background:;background:linear-gradient(#b4b422,#1ba24a)"></div>
<div style="left:1521.00px;top:740.00px;width:5.80px;height:10.00px;background:#1ba24a;"></div>
<div style="left:1521.00px;top:750.00px;width:5.80px;height:155.00px;background:#22ee5e;"></div>
<div style="left:1521.00px;top:740.00px;width:5.80px;height:10.00px;background:;background:linear-gradient(#b4b422,#1ba24a)"></div>
<div style="left:1513.90px;top:740.00px;width:5.80px;height:10.00px;background:;background:linear-gradient(#b8d628,#40e050)"></div>
<div style="left:1521.00px;top:740.00px;width:5.80px;height:10.00px;background:;background:linear-gradient(#b8d628,#40e050)"></div>
<div style="left:1513.50px;top:677.50px;width:13.60px;height:2.50px;background:#b84a38;"></div>
<div style="left:1513.50px;top:677.50px;width:13.60px;height:1.00px;background:#6a6a6a;"></div>
<div style="left:1507.20px;top:657.50px;width:3.00px;height:1.00px;background:#5a5a5a;"></div>
<div style="left:1530.2px;top:651.5px;font-size:11px;color:#b4b4b4;line-height:12px">6</div>
<div style="left:1507.20px;top:678.00px;width:3.00px;height:1.00px;background:#5a5a5a;"></div>
<div style="left:1530.2px;top:672px;font-size:11px;color:#b4b4b4;line-height:12px">0</div>
<div style="left:1507.20px;top:702.60px;width:3.00px;height:1.00px;background:#5a5a5a;"></div>
<div style="left:1530.2px;top:696.6px;font-size:11px;color:#b4b4b4;line-height:12px">6</div>
<div style="left:1507.20px;top:727.50px;width:3.00px;height:1.00px;background:#5a5a5a;"></div>
<div style="left:1530.2px;top:721.5px;font-size:11px;color:#b4b4b4;line-height:12px">12</div>
<div style="left:1507.20px;top:752.50px;width:3.00px;height:1.00px;background:#5a5a5a;"></div>
<div style="left:1530.2px;top:746.5px;font-size:11px;color:#b4b4b4;line-height:12px">18</div>
<div style="left:1507.20px;top:778.00px;width:3.00px;height:1.00px;background:#5a5a5a;"></div>
<div style="left:1530.2px;top:772px;font-size:11px;color:#b4b4b4;line-height:12px">24</div>
<div style="left:1507.20px;top:803.30px;width:3.00px;height:1.00px;background:#5a5a5a;"></div>
<div style="left:1530.2px;top:797.3px;font-size:11px;color:#b4b4b4;line-height:12px">30</div>
<div style="left:1507.20px;top:825.20px;width:3.00px;height:1.00px;background:#5a5a5a;"></div>
<div style="left:1530.2px;top:819.2px;font-size:11px;color:#b4b4b4;line-height:12px">36</div>
<div style="left:1507.20px;top:844.70px;width:3.00px;height:1.00px;background:#5a5a5a;"></div>
<div style="left:1530.2px;top:838.7px;font-size:11px;color:#b4b4b4;line-height:12px">42</div>
<div style="left:1507.20px;top:861.00px;width:3.00px;height:1.00px;background:#5a5a5a;"></div>
<div style="left:1530.2px;top:855px;font-size:11px;color:#b4b4b4;line-height:12px">48</div>
<div style="left:1507.20px;top:876.40px;width:3.00px;height:1.00px;background:#5a5a5a;"></div>
<div style="left:1530.2px;top:870.4px;font-size:11px;color:#b4b4b4;line-height:12px">54</div>
<div style="left:1507.20px;top:890.40px;width:3.00px;height:1.00px;background:#5a5a5a;"></div>
<div style="left:1530.2px;top:884.4px;font-size:11px;color:#b4b4b4;line-height:12px">60</div>
<div style="left:1463.7px;top:855.5px;width:26px;height:13px;background:#8a8a8a;border:1px solid #1e1e1e;color:#262626;font-size:10.5px;line-height:11px;text-align:center">Solo</div>
<svg style="left:1460.5px;top:873px" width="32" height="32"><path d="M7.2 24.3A12.3 12.3 0 1 1 27.3 20" stroke="#4a7ad0" stroke-width="2.3" fill="none"/><path d="M27.3 20A12.3 12.3 0 0 1 24.8 24.3" stroke="#151515" stroke-width="2.3" fill="none"/><path d="M16 15.5L27 19.5" stroke="#151515" stroke-width="2.3"/><path d="M12.3 27.5V24.5Q12.3 20.5 16 20.5Q19.7 20.5 19.7 24.5V27.5" stroke="#ddd" stroke-width="1.5" fill="none"/><rect x="11" y="25" width="2.6" height="3.5" fill="#ddd"/><rect x="18.4" y="25" width="2.6" height="3.5" fill="#ddd"/></svg>
<svg style="left:1460.5px;top:808px" width="32" height="36"><path d="M11 1.5H21L16 6Z" fill="#1a1a1a"/><path d="M8.2 30.4A13 13 0 1 1 23.8 30.4" stroke="#151515" stroke-width="2.2" fill="none"/><path d="M16 6V19" stroke="#151515" stroke-width="2.2"/></svg>
<div style="left:0.00px;top:921.00px;width:1564.00px;height:39.00px;background:#2a2a2a;"></div>
<svg style="left:10px;top:931px" width="20" height="20"><circle cx="10" cy="10" r="8.5" fill="#3c3c3c"/><path d="M10 6V14" stroke="#777" stroke-width="2"/></svg>
<div style="left:46px;top:930px;width:978px;height:21px;background:#333;border-radius:2px"></div>
<div style="left:1034.00px;top:930.50px;width:21.00px;height:21.00px;background:#303030;"></div>
<svg style="left:1039px;top:935px" width="10" height="11"><path d="M0 0L9 5.5L0 11Z" fill="#bdbdbd"/></svg>
<div style="left:1055px;top:930.5px;width:217px;height:21px;background:#3c3c3c;border-radius:0 3px 3px 0"></div>
<svg style="left:0;top:0;" width="1564" height="960"><path d="M1058.0 947h4 M1065.8 947h5 M1081.4 934h5 M1089.2 934h4 M1104.8 947h5 M1112.6 934h4 M1159.4 947h4 M1167.2 934h5 M1175.0 947h5 M1198.4 947h5 M1214.0 944h4 M1221.8 944h4 M1229.6 947h5 M1253.0 944h6 M1260.8 947h5" stroke="#1c1c1c" stroke-width="1.4" fill="none"/></svg>
<div style="left:1225.00px;top:931.00px;width:2.00px;height:20.00px;background:#ececec;"></div>
<div style="left:1283.00px;top:930.50px;width:20.00px;height:21.00px;background:#303030;"></div>
<svg style="left:1288px;top:935px" width="10" height="11"><path d="M0 0L9 5.5L0 11Z" fill="#bdbdbd"/></svg>
<div style="left:1305px;top:930.5px;width:37px;height:21.0px;background:#303030;color:#cfcfcf;font-size:11.5px;line-height:21.0px;text-align:center;font-weight:bold">Bass</div>
<div style="left:1343.00px;top:931.00px;width:160.00px;height:20.00px;background:#23282c;"></div>
<div style="left:1343.00px;top:932.00px;width:13.00px;height:19.00px;background:#15191c;"></div>
<div style="left:1343.50px;top:932.00px;width:12.00px;height:2.20px;background:#3aaac0;"></div>
<div style="left:1343.50px;top:942.00px;width:12.00px;height:2.00px;background:#d08838;"></div>
<div style="left:1357.00px;top:933.00px;width:12.00px;height:17.00px;background:#2e3438;"></div>
<div style="left:1359.00px;top:935.00px;width:3.00px;height:3.00px;background:#4a5a64;"></div>
<div style="left:1364.00px;top:941.00px;width:3.00px;height:3.00px;background:#4a5a64;"></div>
<div style="left:1370.00px;top:932.00px;width:45.00px;height:19.00px;background:#12161a;"></div>
<div style="left:1376.00px;top:932.00px;width:9.00px;height:2.20px;background:#3aaac0;"></div>
<div style="left:1371.00px;top:946.00px;width:43.00px;height:1.00px;background:#2a5058;"></div>
<div style="left:1374.00px;top:937.00px;width:10.00px;height:1.00px;background:#2a6070;"></div>
<div style="left:1392.00px;top:940.00px;width:20.00px;height:1.00px;background:#2a6070;"></div>
<div style="left:1415.00px;top:932.00px;width:30.00px;height:19.00px;background:#2c3236;"></div>
<div style="left:1418.00px;top:935.00px;width:5.00px;height:5.00px;background:#3a5a68;"></div>
<div style="left:1425.00px;top:943.00px;width:6.00px;height:5.00px;background:#3a5a68;"></div>
<div style="left:1437.00px;top:932.00px;width:6.00px;height:3.00px;background:#d89040;"></div>
<div style="left:1446.00px;top:932.00px;width:29.00px;height:19.00px;background:#26343a;"></div>
<div style="left:1448.00px;top:940.00px;width:11.00px;height:10.00px;background:#101416;"></div>
<div style="left:1460.00px;top:946.00px;width:13.00px;height:4.00px;background:#2f7a90;"></div>
<div style="left:1467.00px;top:937.00px;width:6.00px;height:2.50px;background:#d89040;"></div>
<div style="left:1476.00px;top:932.00px;width:26.00px;height:19.00px;background:#141618;"></div>
<div style="left:1497.00px;top:932.00px;width:5.00px;height:2.50px;background:#d09040;"></div>
<div style="left:1497.00px;top:937.00px;width:5.00px;height:2.00px;background:#d09040;"></div>
<div style="left:1496.00px;top:941.00px;width:6.00px;height:9.00px;background:#2a343a;"></div>
<div style="left:1521.00px;top:937.00px;width:2.50px;height:11.00px;background:#f0a048;"></div>
<div style="left:1525.50px;top:931.00px;width:2.50px;height:17.00px;background:#f0a048;"></div>
<div style="left:1530.00px;top:939.00px;width:2.50px;height:9.00px;background:#f0a048;"></div>
<div style="left:1534.50px;top:934.00px;width:2.50px;height:14.00px;background:#f0a048;"></div>
<svg style="left:1546px;top:937px" width="7" height="6"><path d="M0 0H7L3.5 5Z" fill="#4a4a4a"/></svg>
</body></html>
